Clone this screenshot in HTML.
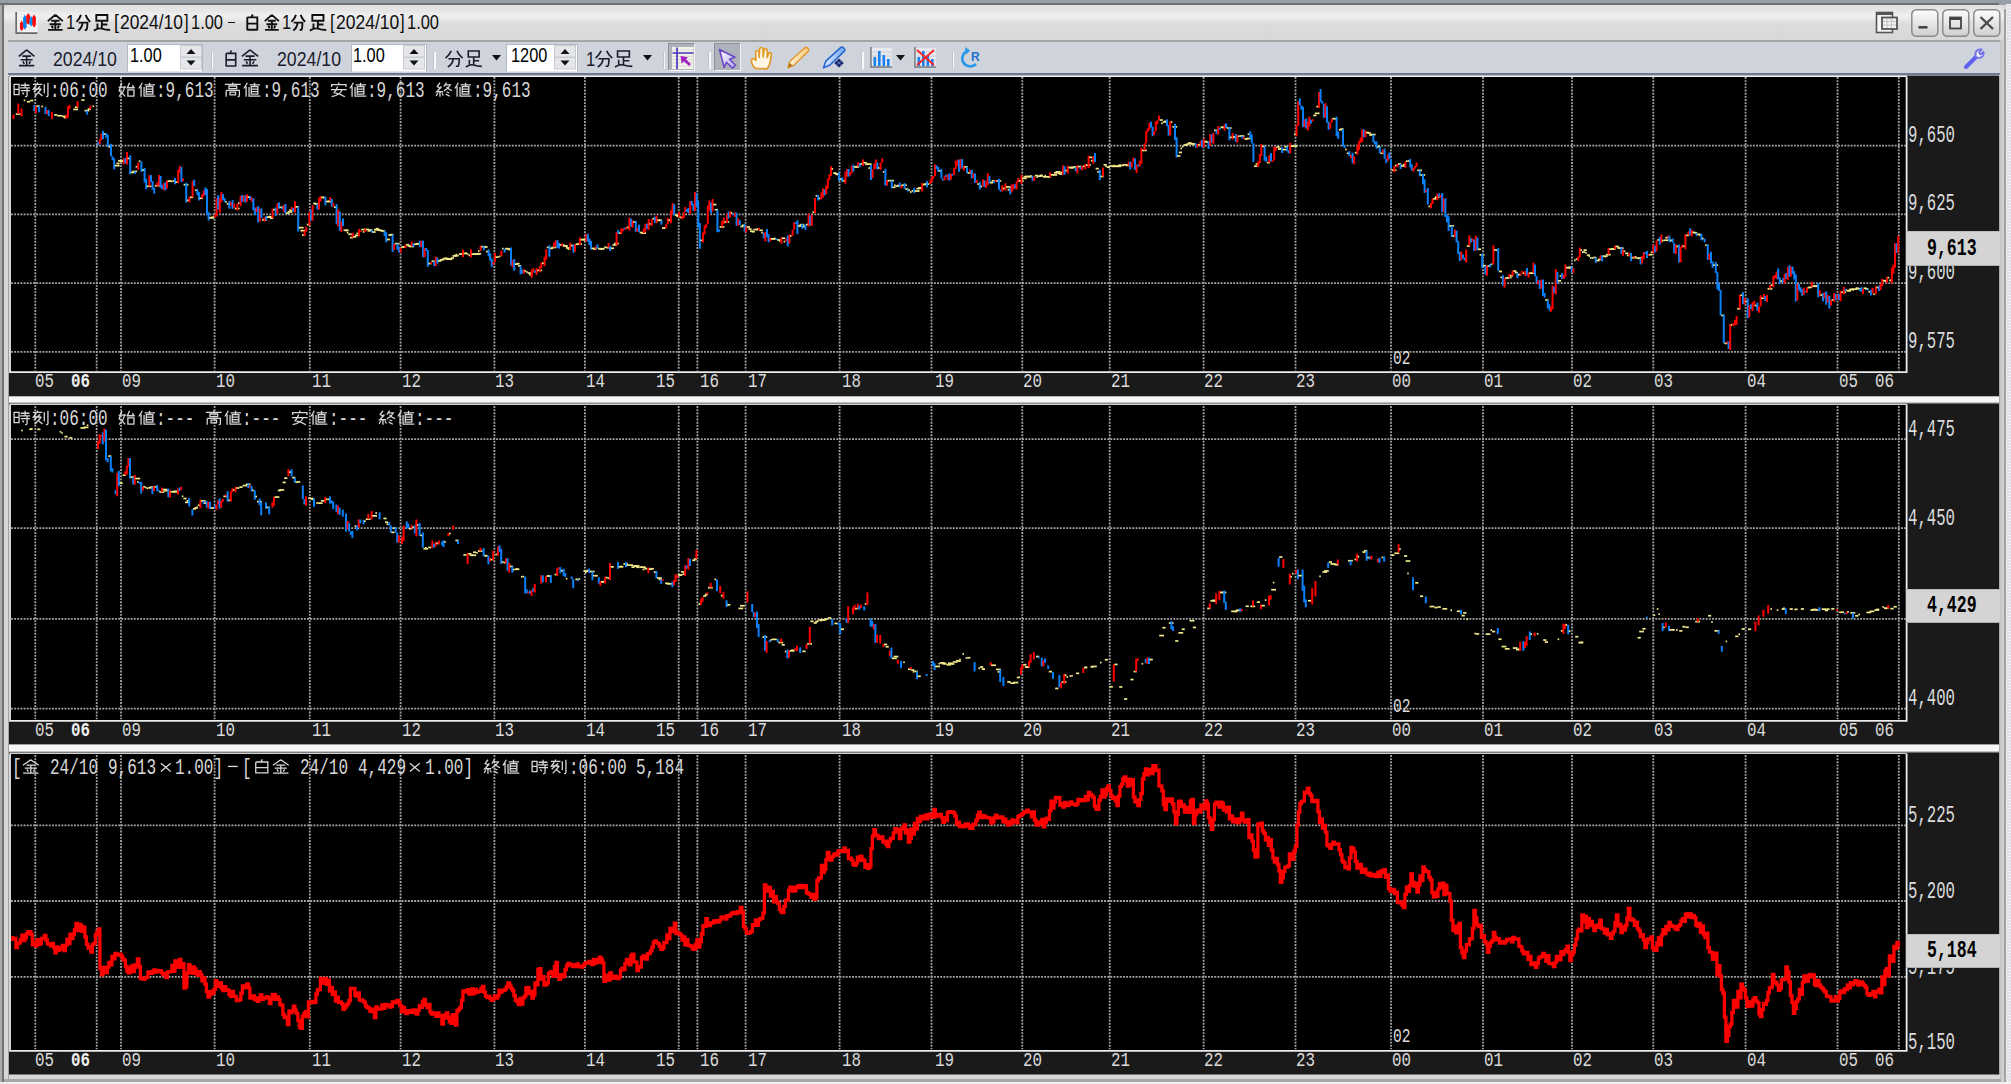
<!DOCTYPE html><html><head><meta charset="utf-8"><style>
*{margin:0;padding:0;box-sizing:border-box}
html,body{width:2011px;height:1084px;overflow:hidden;background:#d8d8d8;font-family:"Liberation Sans",sans-serif}
.a{position:absolute}
.mt{position:absolute;white-space:nowrap;font-family:"Liberation Mono",monospace;transform-origin:0 0}
.mt i{display:inline-block;font-style:normal;text-align:center;overflow:visible}
.tx{position:absolute;white-space:nowrap;transform-origin:0 0}
.tb{position:absolute;white-space:nowrap;font-family:"Liberation Sans",sans-serif;color:#000;transform-origin:0 0}
svg{position:absolute;left:0;top:0}
</style></head><body>
<div class="a" style="left:0;top:0;width:2011px;height:2.5px;background:#9a9ea8"></div>
<div class="a" style="left:0;top:2.5px;width:1999px;height:2.5px;background:#6e6e6e"></div>
<div class="a" style="left:1999px;top:2.5px;width:12px;height:2px;background:#9a9ea8"></div>
<div class="a" style="left:3.5px;top:5px;width:2000px;height:35px;border-radius:6px 6px 0 0;background:linear-gradient(#e0e0e0 0px,#e6e6e6 6px,#efefef 10px,#ececec 13px,#dcdcdc 19px,#d8d8d8 35px)"></div>
<div class="a" style="left:0;top:5px;width:1.5px;height:1079px;background:#ababab"></div>
<div class="a" style="left:1.5px;top:5px;width:2px;height:1079px;background:#727272"></div>
<div class="a" style="left:3.5px;top:40px;width:4px;height:1044px;background:#d6d6d6"></div>
<div class="a" style="left:7.5px;top:40px;width:1.5px;height:1044px;background:#a2a2a2"></div>
<div class="a" style="left:1999px;top:40px;width:1px;height:1044px;background:#aaaaaa"></div>
<div class="a" style="left:2000px;top:40px;width:4px;height:1044px;background:linear-gradient(90deg,#c2c2c2,#d4d4d4)"></div>
<div class="a" style="left:2004px;top:9px;width:2px;height:1075px;background:#a0a0a0"></div>
<div class="a" style="left:2006px;top:4px;width:5px;height:1080px;background-color:#dcdde4;background-image:repeating-linear-gradient(#ececf2 0 1.5px,transparent 1.5px 3px),repeating-linear-gradient(90deg,#ececf2 0 1.5px,transparent 1.5px 3px)"></div>
<div class="a" style="left:9px;top:1074.5px;width:1991px;height:4.5px;background:#d8d8d8"></div>
<div class="a" style="left:3.5px;top:1079px;width:1997px;height:2.5px;background:#a8a8a8"></div>
<div class="a" style="left:0;top:1081.5px;width:2011px;height:2.5px;background:#f0f0f0"></div>
<svg class="a" style="left:0;top:0" width="45" height="40" viewBox="0 0 45 40">
<rect x="16.5" y="12.5" width="21" height="20" fill="#f6f6f6"/>
<path d="M17.5 14.2 H37 M17.5 17.4 H37 M17.5 20.6 H37 M17.5 23.8 H37 M17.5 27 H37 M17.5 30.2 H37" stroke="#e0e0e0" stroke-width="0.8"/>
<path d="M16.2 12 V33.2 H37.5" fill="none" stroke="#6a6a6a" stroke-width="1.7"/>
<path d="M21.6 20.8 L23.4 23.5 V28.8 L21.6 31 L19.9 28.8 V23.5 Z" fill="#ff0a0a"/>
<path d="M24.8 14.8 L26.6 18 V27 L24.8 29.8 L23.1 27 V18 Z" fill="#0a80f0"/>
<path d="M28.2 13 L30.2 16 V22.5 L28.2 24.8 L26.3 22.5 V16 Z" fill="#ff0a0a"/>
<path d="M31.2 16 L33 19 V24 L31.2 26.5 L29.4 24 V19 Z" fill="#0a90f8"/>
<path d="M34.1 14.5 L35.9 17.5 V25 L34.1 27.5 L32.3 25 V17.5 Z" fill="#ff0a0a"/>
</svg>
<svg class="a" style="left:46.80px;top:13.60px;overflow:visible" width="16.70" height="16.80" viewBox="0 0 16 16" preserveAspectRatio="none"><path d="M8 0.8 L0.8 6.8 M8 0.8 L15.2 6.8 M4 6.5 H12 M2.5 9.8 H13.5 M8 6.5 V15 M4.5 11.2 L5.8 13.6 M11.5 11.2 L10.2 13.6 M1 15.1 H15" fill="none" stroke="#101010" stroke-width="1.90" vector-effect="non-scaling-stroke" stroke-linecap="butt" stroke-linejoin="miter"/></svg>
<svg class="a" style="left:75.50px;top:13.60px;overflow:visible" width="14.60" height="16.80" viewBox="0 0 16 16" preserveAspectRatio="none"><path d="M5.5 0.8 Q4 4.5 0.5 7.5 M10.5 0.8 Q12 4.5 15.5 7.5 M3 8.2 H12.5 Q12.5 14 11.5 15 L9.5 15.2 M7.2 8.2 Q6.8 13 2.5 15.8" fill="none" stroke="#101010" stroke-width="1.90" vector-effect="non-scaling-stroke" stroke-linecap="butt" stroke-linejoin="miter"/></svg>
<svg class="a" style="left:93.30px;top:13.60px;overflow:visible" width="17.70" height="16.80" viewBox="0 0 16 16" preserveAspectRatio="none"><path d="M3 1 H13 V6.5 H3 Z M8 6.5 V14.2 M8 10 H13 M4 9 V14 M0.8 15.8 Q5 13 8 14 Q11.5 15.2 15.5 15.2" fill="none" stroke="#101010" stroke-width="1.90" vector-effect="non-scaling-stroke" stroke-linecap="butt" stroke-linejoin="miter"/></svg>
<svg class="a" style="left:244.70px;top:13.60px;overflow:visible" width="14.60" height="16.80" viewBox="0 0 16 16" preserveAspectRatio="none"><path d="M8.5 0.5 L7 3.2 M2.5 3.2 H13.5 V15.5 M2.5 3.2 V15.5 M2.5 9.2 H13.5 M2.5 15 H13.5" fill="none" stroke="#101010" stroke-width="1.90" vector-effect="non-scaling-stroke" stroke-linecap="butt" stroke-linejoin="miter"/></svg>
<svg class="a" style="left:263.50px;top:13.60px;overflow:visible" width="15.70" height="16.80" viewBox="0 0 16 16" preserveAspectRatio="none"><path d="M8 0.8 L0.8 6.8 M8 0.8 L15.2 6.8 M4 6.5 H12 M2.5 9.8 H13.5 M8 6.5 V15 M4.5 11.2 L5.8 13.6 M11.5 11.2 L10.2 13.6 M1 15.1 H15" fill="none" stroke="#101010" stroke-width="1.90" vector-effect="non-scaling-stroke" stroke-linecap="butt" stroke-linejoin="miter"/></svg>
<svg class="a" style="left:291.20px;top:13.60px;overflow:visible" width="14.60" height="16.80" viewBox="0 0 16 16" preserveAspectRatio="none"><path d="M5.5 0.8 Q4 4.5 0.5 7.5 M10.5 0.8 Q12 4.5 15.5 7.5 M3 8.2 H12.5 Q12.5 14 11.5 15 L9.5 15.2 M7.2 8.2 Q6.8 13 2.5 15.8" fill="none" stroke="#101010" stroke-width="1.90" vector-effect="non-scaling-stroke" stroke-linecap="butt" stroke-linejoin="miter"/></svg>
<svg class="a" style="left:308.90px;top:13.60px;overflow:visible" width="17.80" height="16.80" viewBox="0 0 16 16" preserveAspectRatio="none"><path d="M3 1 H13 V6.5 H3 Z M8 6.5 V14.2 M8 10 H13 M4 9 V14 M0.8 15.8 Q5 13 8 14 Q11.5 15.2 15.5 15.2" fill="none" stroke="#101010" stroke-width="1.90" vector-effect="non-scaling-stroke" stroke-linecap="butt" stroke-linejoin="miter"/></svg>
<div class="tx" style="left:66.48px;top:11.88px;font-family:'Liberation Sans';font-size:20.56px;line-height:20.56px;color:#101010;transform:scaleX(0.8000);">1</div>
<div class="tx" style="left:114.00px;top:11.88px;font-family:'Liberation Sans';font-size:20.56px;line-height:20.56px;color:#101010;transform:scaleX(0.8684);">[</div>
<div class="tx" style="left:119.90px;top:11.88px;font-family:'Liberation Sans';font-size:20.56px;line-height:20.56px;color:#101010;transform:scaleX(0.8475);">2024/10</div>
<div class="tx" style="left:184.40px;top:11.88px;font-family:'Liberation Sans';font-size:20.56px;line-height:20.56px;color:#101010;transform:scaleX(0.8163);">]</div>
<div class="tx" style="left:191.35px;top:11.88px;font-family:'Liberation Sans';font-size:20.56px;line-height:20.56px;color:#101010;transform:scaleX(0.8000);">1.00</div>
<div class="tx" style="left:281.68px;top:11.88px;font-family:'Liberation Sans';font-size:20.56px;line-height:20.56px;color:#101010;transform:scaleX(0.8000);">1</div>
<div class="tx" style="left:329.50px;top:11.88px;font-family:'Liberation Sans';font-size:20.56px;line-height:20.56px;color:#101010;transform:scaleX(0.8337);">[</div>
<div class="tx" style="left:335.50px;top:11.88px;font-family:'Liberation Sans';font-size:20.56px;line-height:20.56px;color:#101010;transform:scaleX(0.8515);">2024/10</div>
<div class="tx" style="left:400.00px;top:11.88px;font-family:'Liberation Sans';font-size:20.56px;line-height:20.56px;color:#101010;transform:scaleX(0.8163);">]</div>
<div class="tx" style="left:406.90px;top:11.88px;font-family:'Liberation Sans';font-size:20.56px;line-height:20.56px;color:#101010;transform:scaleX(0.8000);">1.00</div>
<div class="a" style="left:228px;top:21.5px;width:7.3px;height:1.8px;background:#101010"></div>
<svg class="a" style="left:1874px;top:11px" width="26" height="24" viewBox="0 0 26 24">
<rect x="2.5" y="1.5" width="16" height="20" fill="#f6f6f6" stroke="#555" stroke-width="1.6"/>
<rect x="2.5" y="1.5" width="16" height="2.5" fill="#555"/>
<rect x="8" y="6.5" width="15" height="11.5" fill="#f0f0f0" stroke="#555" stroke-width="1.8"/>
<path d="M9 10.5 H22 M9 14 H22 M13 8 V17 M17.5 8 V17" stroke="#bbb" stroke-width="0.8"/></svg>
<svg class="a" style="left:1911.0px;top:9px" width="28" height="28" viewBox="0 0 28 28"><defs><linearGradient id="g1911" x1="0" y1="0" x2="0" y2="1"><stop offset="0" stop-color="#fdfdfd"/><stop offset="1" stop-color="#cfcfcf"/></linearGradient></defs><rect x="0.8" y="0.8" width="26" height="26.5" rx="4.5" fill="url(#g1911)" stroke="#8a8a8a" stroke-width="1.5"/><rect x="7.5" y="17" width="9" height="2.6" fill="#444"/></svg>
<svg class="a" style="left:1942.2px;top:9px" width="28" height="28" viewBox="0 0 28 28"><defs><linearGradient id="g1942" x1="0" y1="0" x2="0" y2="1"><stop offset="0" stop-color="#fdfdfd"/><stop offset="1" stop-color="#cfcfcf"/></linearGradient></defs><rect x="0.8" y="0.8" width="26" height="26.5" rx="4.5" fill="url(#g1942)" stroke="#8a8a8a" stroke-width="1.5"/><rect x="8" y="8.5" width="11" height="11" fill="none" stroke="#444" stroke-width="1.8"/><rect x="8" y="8" width="11" height="3" fill="#444"/></svg>
<svg class="a" style="left:1973.4px;top:9px" width="28" height="28" viewBox="0 0 28 28"><defs><linearGradient id="g1973" x1="0" y1="0" x2="0" y2="1"><stop offset="0" stop-color="#fdfdfd"/><stop offset="1" stop-color="#cfcfcf"/></linearGradient></defs><rect x="0.8" y="0.8" width="26" height="26.5" rx="4.5" fill="url(#g1973)" stroke="#8a8a8a" stroke-width="1.5"/><path d="M7.5 8 L20 20 M20 8 L7.5 20" stroke="#4a4a4a" stroke-width="2.4"/></svg>
<div class="a" style="left:8px;top:39.5px;width:1992px;height:2px;background:#a4a4a4"></div>
<div class="a" style="left:8px;top:41.5px;width:1992px;height:31px;background:#cfd3dc"></div>
<div class="a" style="left:8px;top:72.5px;width:1992px;height:2px;background:#6c7c92"></div>
<div class="a" style="left:8px;top:74.5px;width:1992px;height:1.5px;background:#f4f4f4"></div>
<svg class="a" style="left:18.00px;top:49.20px;overflow:visible" width="17.30" height="17.60" viewBox="0 0 16 16" preserveAspectRatio="none"><path d="M8 0.8 L0.8 6.8 M8 0.8 L15.2 6.8 M4 6.5 H12 M2.5 9.8 H13.5 M8 6.5 V15 M4.5 11.2 L5.8 13.6 M11.5 11.2 L10.2 13.6 M1 15.1 H15" fill="none" stroke="#1c1c2c" stroke-width="1.60" vector-effect="non-scaling-stroke" stroke-linecap="butt" stroke-linejoin="miter"/></svg>
<svg class="a" style="left:223.60px;top:49.70px;overflow:visible" width="13.90" height="17.10" viewBox="0 0 16 16" preserveAspectRatio="none"><path d="M8.5 0.5 L7 3.2 M2.5 3.2 H13.5 V15.5 M2.5 3.2 V15.5 M2.5 9.2 H13.5 M2.5 15 H13.5" fill="none" stroke="#1c1c2c" stroke-width="1.60" vector-effect="non-scaling-stroke" stroke-linecap="butt" stroke-linejoin="miter"/></svg>
<svg class="a" style="left:241.00px;top:49.20px;overflow:visible" width="18.10" height="17.60" viewBox="0 0 16 16" preserveAspectRatio="none"><path d="M8 0.8 L0.8 6.8 M8 0.8 L15.2 6.8 M4 6.5 H12 M2.5 9.8 H13.5 M8 6.5 V15 M4.5 11.2 L5.8 13.6 M11.5 11.2 L10.2 13.6 M1 15.1 H15" fill="none" stroke="#1c1c2c" stroke-width="1.60" vector-effect="non-scaling-stroke" stroke-linecap="butt" stroke-linejoin="miter"/></svg>
<svg class="a" style="left:445.40px;top:49.70px;overflow:visible" width="18.20" height="17.20" viewBox="0 0 16 16" preserveAspectRatio="none"><path d="M5.5 0.8 Q4 4.5 0.5 7.5 M10.5 0.8 Q12 4.5 15.5 7.5 M3 8.2 H12.5 Q12.5 14 11.5 15 L9.5 15.2 M7.2 8.2 Q6.8 13 2.5 15.8" fill="none" stroke="#1c1c2c" stroke-width="1.60" vector-effect="non-scaling-stroke" stroke-linecap="butt" stroke-linejoin="miter"/></svg>
<svg class="a" style="left:464.60px;top:49.70px;overflow:visible" width="17.40" height="17.20" viewBox="0 0 16 16" preserveAspectRatio="none"><path d="M3 1 H13 V6.5 H3 Z M8 6.5 V14.2 M8 10 H13 M4 9 V14 M0.8 15.8 Q5 13 8 14 Q11.5 15.2 15.5 15.2" fill="none" stroke="#1c1c2c" stroke-width="1.60" vector-effect="non-scaling-stroke" stroke-linecap="butt" stroke-linejoin="miter"/></svg>
<svg class="a" style="left:594.70px;top:49.70px;overflow:visible" width="17.80" height="17.20" viewBox="0 0 16 16" preserveAspectRatio="none"><path d="M5.5 0.8 Q4 4.5 0.5 7.5 M10.5 0.8 Q12 4.5 15.5 7.5 M3 8.2 H12.5 Q12.5 14 11.5 15 L9.5 15.2 M7.2 8.2 Q6.8 13 2.5 15.8" fill="none" stroke="#1c1c2c" stroke-width="1.60" vector-effect="non-scaling-stroke" stroke-linecap="butt" stroke-linejoin="miter"/></svg>
<svg class="a" style="left:614.10px;top:49.70px;overflow:visible" width="18.90" height="17.20" viewBox="0 0 16 16" preserveAspectRatio="none"><path d="M3 1 H13 V6.5 H3 Z M8 6.5 V14.2 M8 10 H13 M4 9 V14 M0.8 15.8 Q5 13 8 14 Q11.5 15.2 15.5 15.2" fill="none" stroke="#1c1c2c" stroke-width="1.60" vector-effect="non-scaling-stroke" stroke-linecap="butt" stroke-linejoin="miter"/></svg>
<div class="tx" style="left:53.30px;top:48.66px;font-family:'Liberation Sans';font-size:20.70px;line-height:20.70px;color:#1c1c2c;transform:scaleX(0.8551);">2024/10</div>
<div class="tx" style="left:276.90px;top:48.74px;font-family:'Liberation Sans';font-size:20.85px;line-height:20.85px;color:#1c1c2c;transform:scaleX(0.8493);">2024/10</div>
<div class="tx" style="left:585.77px;top:48.74px;font-family:'Liberation Sans';font-size:20.85px;line-height:20.85px;color:#1c1c2c;transform:scaleX(0.8000);">1</div>
<div class="a" style="left:127.2px;top:43.5px;width:76.3px;height:28px;background:#fff;border:1px solid #b4b8c0;border-bottom-color:#e8e8e8"></div><div class="tx" style="left:129.76px;top:44.60px;font-family:'Liberation Sans';font-size:20.42px;line-height:20.42px;color:#000;transform:scaleX(0.8000);">1.00</div><svg class="a" style="left:179.5px;top:45px" width="22" height="25" viewBox="0 0 22 25"><rect x="0.5" y="0.5" width="21" height="11.5" fill="#e4e6ea" stroke="#c8ccd2"/><rect x="0.5" y="12.5" width="21" height="11.5" fill="#e4e6ea" stroke="#c8ccd2"/><path d="M6.5 9 L11 4 L15.5 9 Z" fill="#111"/><path d="M6.5 15.5 L11 20.5 L15.5 15.5 Z" fill="#111"/></svg>
<div class="a" style="left:350.5px;top:43.5px;width:76.3px;height:28px;background:#fff;border:1px solid #b4b8c0;border-bottom-color:#e8e8e8"></div><div class="tx" style="left:353.06px;top:44.60px;font-family:'Liberation Sans';font-size:20.42px;line-height:20.42px;color:#000;transform:scaleX(0.8000);">1.00</div><svg class="a" style="left:402.8px;top:45px" width="22" height="25" viewBox="0 0 22 25"><rect x="0.5" y="0.5" width="21" height="11.5" fill="#e4e6ea" stroke="#c8ccd2"/><rect x="0.5" y="12.5" width="21" height="11.5" fill="#e4e6ea" stroke="#c8ccd2"/><path d="M6.5 9 L11 4 L15.5 9 Z" fill="#111"/><path d="M6.5 15.5 L11 20.5 L15.5 15.5 Z" fill="#111"/></svg>
<div class="a" style="left:506.4px;top:43.5px;width:71.4px;height:28px;background:#fff;border:1px solid #b4b8c0;border-bottom-color:#e8e8e8"></div><div class="tx" style="left:510.77px;top:44.60px;font-family:'Liberation Sans';font-size:20.42px;line-height:20.42px;color:#000;transform:scaleX(0.8000);">1200</div><svg class="a" style="left:553.8px;top:45px" width="22" height="25" viewBox="0 0 22 25"><rect x="0.5" y="0.5" width="21" height="11.5" fill="#e4e6ea" stroke="#c8ccd2"/><rect x="0.5" y="12.5" width="21" height="11.5" fill="#e4e6ea" stroke="#c8ccd2"/><path d="M6.5 9 L11 4 L15.5 9 Z" fill="#111"/><path d="M6.5 15.5 L11 20.5 L15.5 15.5 Z" fill="#111"/></svg>
<svg class="a" style="left:491.6px;top:55px" width="10" height="6"><path d="M0 0 H9 L4.5 5.5 Z" fill="#111"/></svg>
<svg class="a" style="left:642.6px;top:55px" width="10" height="6"><path d="M0 0 H9 L4.5 5.5 Z" fill="#111"/></svg>
<svg class="a" style="left:896.3px;top:55px" width="10" height="6"><path d="M0 0 H9 L4.5 5.5 Z" fill="#111"/></svg>
<div class="a" style="left:211.7px;top:51.5px;width:1.5px;height:17px;background:#f8f8fa;box-shadow:-1px 0 0 #c0c4cc"></div>
<div class="a" style="left:434.2px;top:51.5px;width:1.5px;height:17px;background:#f8f8fa;box-shadow:-1px 0 0 #c0c4cc"></div>
<div class="a" style="left:663.9px;top:51.5px;width:1.5px;height:17px;background:#f8f8fa;box-shadow:-1px 0 0 #c0c4cc"></div>
<div class="a" style="left:709.2px;top:51.5px;width:1.5px;height:17px;background:#f8f8fa;box-shadow:-1px 0 0 #c0c4cc"></div>
<div class="a" style="left:862.3px;top:51.5px;width:1.5px;height:17px;background:#f8f8fa;box-shadow:-1px 0 0 #c0c4cc"></div>
<div class="a" style="left:952.8px;top:51.5px;width:1.5px;height:17px;background:#f8f8fa;box-shadow:-1px 0 0 #c0c4cc"></div>
<div class="a" style="left:668.3px;top:43.3px;width:27px;height:27.5px;background:#aeb2ba;border:1.5px solid #8c9098;border-right-color:#f4f4f6;border-bottom-color:#f4f4f6"></div>
<div class="a" style="left:713.5px;top:43.3px;width:27px;height:27.5px;background:#aeb2ba;border:1.5px solid #8c9098;border-right-color:#f4f4f6;border-bottom-color:#f4f4f6"></div>
<svg class="a" style="left:0;top:0" width="1000" height="80" viewBox="0 0 1000 80">
<defs>
<linearGradient id="ptrg" x1="0" y1="0" x2="1" y2="1"><stop offset="0" stop-color="#ffffff"/><stop offset="1" stop-color="#b8a8f0"/></linearGradient>
<linearGradient id="pcg" x1="0" y1="0" x2="1" y2="0"><stop offset="0" stop-color="#fff8e8"/><stop offset="1" stop-color="#f4c878"/></linearGradient>
<linearGradient id="peng" x1="0" y1="0" x2="1" y2="0"><stop offset="0" stop-color="#e0ecff"/><stop offset="1" stop-color="#78a8f0"/></linearGradient>
</defs>
<rect x="672" y="47" width="21.5" height="22" fill="#f2f2ea"/>
<path d="M672 50 H693.5 M672 53.2 H693.5 M672 56.4 H693.5 M672 59.6 H693.5 M672 62.8 H693.5 M672 66 H693.5" stroke="#d4d4cc" stroke-width="0.9"/>
<path d="M677 47.5 V69 M672.5 53 H693.5" stroke="#4a38c0" stroke-width="1.7"/>
<path d="M690 65 L682.5 58" stroke="#a020c0" stroke-width="2.8"/>
<path d="M680.5 56 L688 57.2 L681.7 63.5 Z" fill="#a020c0"/>
<path d="M719.5 49.5 L735 57.2 L729.5 59.2 L735.5 65.2 L732.5 68.2 L726.5 62.2 L724.2 67.5 Z" fill="url(#ptrg)" stroke="#6a48c8" stroke-width="1.6" stroke-linejoin="round"/>
<path d="M755.5 68.5 C752.5 66 750.8 62 751.8 59.5 C752.8 57.8 754.8 58.8 755.8 60.5 L755.8 52 C755.8 50 758.6 50 758.9 52 L759.2 57.5 L759.6 49 C759.9 47 762.8 47 763 49 L763.2 57 L764 50 C764.3 48 767.2 48.3 767.2 50.4 L767.2 57.5 L768.6 53.6 C769.3 52 771.8 52.6 771.4 54.4 L770.2 62 C769.8 65 768.5 67.2 767 68.8 Z" fill="#fff6e4" stroke="#e29a28" stroke-width="1.7" stroke-linejoin="round"/>
<path d="M788 67.8 L789.8 61.5 L804.8 47.8 C806.6 46.4 809.8 49.2 808.6 51 L793.8 65.2 Z" fill="url(#pcg)" stroke="#e09a30" stroke-width="1.5" stroke-linejoin="round"/>
<path d="M788 67.8 L789.6 62.8 L792.6 65.6 Z" fill="#b07020"/>
<path d="M823.5 67.8 L825.8 61.2 L840.6 47.6 C842.6 46.2 845.8 49 844.6 50.9 L830 65 Z" fill="url(#peng)" stroke="#2868d0" stroke-width="1.6" stroke-linejoin="round"/>
<path d="M839 58.5 L843.8 63 L839 67.5 L834.2 63 Z" fill="#1a2a70"/>
<path d="M836.6 60.8 L841.4 65.2 M841.4 60.8 L836.6 65.2" stroke="#8090d0" stroke-width="0.7"/>
</svg>
<svg class="a" style="left:870.1px;top:47px" width="23" height="21" viewBox="0 0 23 21"><rect x="1" y="1" width="21" height="19" fill="#e6e8ee"/><path d="M1 0 V20 H22" fill="none" stroke="#777" stroke-width="1.5"/><path d="M1 5 H22 M1 9 H22 M1 13 H22" stroke="#c8c8d0" stroke-width="0.8"/><rect x="3.5" y="10" width="2.6" height="9" fill="#1880f0"/><rect x="8" y="4" width="2.6" height="15" fill="#1880f0"/><rect x="12.5" y="8" width="2.6" height="11" fill="#1880f0"/><rect x="17" y="12" width="2.6" height="7" fill="#1880f0"/></svg>
<svg class="a" style="left:913.7px;top:47px" width="23" height="21" viewBox="0 0 23 21"><rect x="1" y="1" width="21" height="19" fill="#e6e8ee"/><path d="M1 0 V20 H22" fill="none" stroke="#777" stroke-width="1.5"/><path d="M1 5 H22 M1 9 H22 M1 13 H22" stroke="#c8c8d0" stroke-width="0.8"/><rect x="3.5" y="10" width="2.6" height="9" fill="#1880f0"/><rect x="8" y="4" width="2.6" height="15" fill="#1880f0"/><rect x="12.5" y="8" width="2.6" height="11" fill="#1880f0"/><rect x="17" y="12" width="2.6" height="7" fill="#1880f0"/><path d="M3 3 L20 18 M20 3 L3 18" stroke="#ff2020" stroke-width="1.8"/></svg>
<svg class="a" style="left:959px;top:46px" width="22" height="23" viewBox="0 0 22 23">
<path d="M10 4.5 A8 8 0 1 0 17 18" fill="none" stroke="#2898e8" stroke-width="2.6"/>
<path d="M6 1 L11 4.5 L7 8.5 Z" fill="#2898e8"/>
<text x="12" y="15" font-family="Liberation Sans" font-weight="bold" font-size="12" fill="#2070d0">R</text></svg>
<svg class="a" style="left:1963px;top:46px" width="24" height="24" viewBox="0 0 24 24">
<path d="M3 21 L13 11" stroke="#6060f0" stroke-width="4" stroke-linecap="round"/>
<path d="M13 11 C11 7 14 2.5 18.5 3.5 L16 6.5 L17.5 8.5 L20.5 6 C21.5 10 17.5 13.5 13 11 Z" fill="#f8f8ff" stroke="#7070e8" stroke-width="1.8" stroke-linejoin="round"/></svg>
<svg width="2011" height="1084" viewBox="0 0 2011 1084" style="position:absolute;left:0;top:0">
<rect x="9" y="75.5" width="1990" height="321.0" fill="#1a1a1a"/>
<rect x="10" y="76.2" width="1897" height="296.6" fill="#000"/>
<path d="M10 76.2 V372.1 H1906.6 V76.2" fill="none" stroke="#ececec" stroke-width="1.8"/>
<line x1="10" y1="76.2" x2="1906.6" y2="76.2" stroke="#f4f4f4" stroke-width="1.4"/>
<g stroke="#a4a4a4" stroke-width="1.8" stroke-dasharray="1.9 1.25">
<line x1="35.3" y1="77.0" x2="35.3" y2="370.5"/>
<line x1="96.7" y1="77.0" x2="96.7" y2="370.5"/>
<line x1="121.0" y1="77.0" x2="121.0" y2="370.5"/>
<line x1="214.6" y1="77.0" x2="214.6" y2="370.5"/>
<line x1="309.8" y1="77.0" x2="309.8" y2="370.5"/>
<line x1="400.6" y1="77.0" x2="400.6" y2="370.5"/>
<line x1="494.4" y1="77.0" x2="494.4" y2="370.5"/>
<line x1="584.9" y1="77.0" x2="584.9" y2="370.5"/>
<line x1="678.7" y1="77.0" x2="678.7" y2="370.5"/>
<line x1="697.4" y1="77.0" x2="697.4" y2="370.5"/>
<line x1="745.6" y1="77.0" x2="745.6" y2="370.5"/>
<line x1="839.6" y1="77.0" x2="839.6" y2="370.5"/>
<line x1="931.5" y1="77.0" x2="931.5" y2="370.5"/>
<line x1="1022.3" y1="77.0" x2="1022.3" y2="370.5"/>
<line x1="1109.7" y1="77.0" x2="1109.7" y2="370.5"/>
<line x1="1203.6" y1="77.0" x2="1203.6" y2="370.5"/>
<line x1="1295.5" y1="77.0" x2="1295.5" y2="370.5"/>
<line x1="1391.0" y1="77.0" x2="1391.0" y2="370.5"/>
<line x1="1483.0" y1="77.0" x2="1483.0" y2="370.5"/>
<line x1="1572.0" y1="77.0" x2="1572.0" y2="370.5"/>
<line x1="1653.3" y1="77.0" x2="1653.3" y2="370.5"/>
<line x1="1745.6" y1="77.0" x2="1745.6" y2="370.5"/>
<line x1="1837.5" y1="77.0" x2="1837.5" y2="370.5"/>
<line x1="1898.8" y1="77.0" x2="1898.8" y2="370.5"/>
<line x1="11" y1="145.7" x2="1906" y2="145.7"/>
<line x1="11" y1="214.4" x2="1906" y2="214.4"/>
<line x1="11" y1="283.1" x2="1906" y2="283.1"/>
<line x1="11" y1="351.8" x2="1906" y2="351.8"/>
</g>
<rect x="9" y="402.8" width="1990" height="341.8" fill="#1a1a1a"/>
<rect x="10" y="404.3" width="1897" height="317.3" fill="#000"/>
<path d="M10 404.3 V720.9 H1906.6 V404.3" fill="none" stroke="#ececec" stroke-width="1.8"/>
<line x1="10" y1="404.3" x2="1906.6" y2="404.3" stroke="#d0d0d0" stroke-width="1.4"/>
<g stroke="#a4a4a4" stroke-width="1.8" stroke-dasharray="1.9 1.25">
<line x1="35.3" y1="406.0" x2="35.3" y2="719.3"/>
<line x1="96.7" y1="406.0" x2="96.7" y2="719.3"/>
<line x1="121.0" y1="406.0" x2="121.0" y2="719.3"/>
<line x1="214.6" y1="406.0" x2="214.6" y2="719.3"/>
<line x1="309.8" y1="406.0" x2="309.8" y2="719.3"/>
<line x1="400.6" y1="406.0" x2="400.6" y2="719.3"/>
<line x1="494.4" y1="406.0" x2="494.4" y2="719.3"/>
<line x1="584.9" y1="406.0" x2="584.9" y2="719.3"/>
<line x1="678.7" y1="406.0" x2="678.7" y2="719.3"/>
<line x1="697.4" y1="406.0" x2="697.4" y2="719.3"/>
<line x1="745.6" y1="406.0" x2="745.6" y2="719.3"/>
<line x1="839.6" y1="406.0" x2="839.6" y2="719.3"/>
<line x1="931.5" y1="406.0" x2="931.5" y2="719.3"/>
<line x1="1022.3" y1="406.0" x2="1022.3" y2="719.3"/>
<line x1="1109.7" y1="406.0" x2="1109.7" y2="719.3"/>
<line x1="1203.6" y1="406.0" x2="1203.6" y2="719.3"/>
<line x1="1295.5" y1="406.0" x2="1295.5" y2="719.3"/>
<line x1="1391.0" y1="406.0" x2="1391.0" y2="719.3"/>
<line x1="1483.0" y1="406.0" x2="1483.0" y2="719.3"/>
<line x1="1572.0" y1="406.0" x2="1572.0" y2="719.3"/>
<line x1="1653.3" y1="406.0" x2="1653.3" y2="719.3"/>
<line x1="1745.6" y1="406.0" x2="1745.6" y2="719.3"/>
<line x1="1837.5" y1="406.0" x2="1837.5" y2="719.3"/>
<line x1="1898.8" y1="406.0" x2="1898.8" y2="719.3"/>
<line x1="11" y1="439.2" x2="1906" y2="439.2"/>
<line x1="11" y1="528.1" x2="1906" y2="528.1"/>
<line x1="11" y1="618.8" x2="1906" y2="618.8"/>
<line x1="11" y1="708.6" x2="1906" y2="708.6"/>
</g>
<rect x="9" y="751.9" width="1990" height="322.6" fill="#1a1a1a"/>
<rect x="10" y="753.4" width="1897" height="298.1" fill="#000"/>
<path d="M10 753.4 V1050.8 H1906.6 V753.4" fill="none" stroke="#ececec" stroke-width="1.8"/>
<line x1="10" y1="753.4" x2="1906.6" y2="753.4" stroke="#d0d0d0" stroke-width="1.4"/>
<g stroke="#a4a4a4" stroke-width="1.8" stroke-dasharray="1.9 1.25">
<line x1="35.3" y1="755.0" x2="35.3" y2="1049.2"/>
<line x1="96.7" y1="755.0" x2="96.7" y2="1049.2"/>
<line x1="121.0" y1="755.0" x2="121.0" y2="1049.2"/>
<line x1="214.6" y1="755.0" x2="214.6" y2="1049.2"/>
<line x1="309.8" y1="755.0" x2="309.8" y2="1049.2"/>
<line x1="400.6" y1="755.0" x2="400.6" y2="1049.2"/>
<line x1="494.4" y1="755.0" x2="494.4" y2="1049.2"/>
<line x1="584.9" y1="755.0" x2="584.9" y2="1049.2"/>
<line x1="678.7" y1="755.0" x2="678.7" y2="1049.2"/>
<line x1="697.4" y1="755.0" x2="697.4" y2="1049.2"/>
<line x1="745.6" y1="755.0" x2="745.6" y2="1049.2"/>
<line x1="839.6" y1="755.0" x2="839.6" y2="1049.2"/>
<line x1="931.5" y1="755.0" x2="931.5" y2="1049.2"/>
<line x1="1022.3" y1="755.0" x2="1022.3" y2="1049.2"/>
<line x1="1109.7" y1="755.0" x2="1109.7" y2="1049.2"/>
<line x1="1203.6" y1="755.0" x2="1203.6" y2="1049.2"/>
<line x1="1295.5" y1="755.0" x2="1295.5" y2="1049.2"/>
<line x1="1391.0" y1="755.0" x2="1391.0" y2="1049.2"/>
<line x1="1483.0" y1="755.0" x2="1483.0" y2="1049.2"/>
<line x1="1572.0" y1="755.0" x2="1572.0" y2="1049.2"/>
<line x1="1653.3" y1="755.0" x2="1653.3" y2="1049.2"/>
<line x1="1745.6" y1="755.0" x2="1745.6" y2="1049.2"/>
<line x1="1837.5" y1="755.0" x2="1837.5" y2="1049.2"/>
<line x1="1898.8" y1="755.0" x2="1898.8" y2="1049.2"/>
<line x1="11" y1="825.3" x2="1906" y2="825.3"/>
<line x1="11" y1="901.0" x2="1906" y2="901.0"/>
<line x1="11" y1="976.9" x2="1906" y2="976.9"/>
</g>
<rect x="9" y="396.5" width="1990" height="6.5" fill="#f6f6f6"/>
<rect x="9" y="402.4" width="1990" height="1.2" fill="#a0a0a0"/>
<rect x="9" y="744.6" width="1990" height="7.4" fill="#f6f6f6"/>
<rect x="9" y="751.4" width="1990" height="1.2" fill="#a0a0a0"/>
<clipPath id="c1"><rect x="11" y="77" width="1895" height="294"/></clipPath>
<clipPath id="c2"><rect x="11" y="406" width="1895" height="314"/></clipPath>
<clipPath id="c3"><rect x="11" y="755" width="1895" height="295"/></clipPath>
<g clip-path="url(#c1)"><rect x="12.5" y="114.6" width="2.0" height="4.5" fill="#ff0000"/>
<rect x="15.7" y="113.1" width="4.8" height="1.7" fill="#f2e88a"/>
<rect x="17.3" y="103.6" width="2.0" height="10.4" fill="#ff0000"/>
<rect x="20.5" y="108.5" width="2.0" height="7.8" fill="#ff0000"/>
<rect x="23.7" y="99.5" width="1.6" height="1.7" fill="#f2e88a"/>
<rect x="26.9" y="100.9" width="3.2" height="1.7" fill="#f2e88a"/>
<rect x="30.1" y="99.7" width="3.2" height="1.7" fill="#f2e88a"/>
<rect x="33.3" y="105.0" width="2.0" height="6.3" fill="#0a80f8"/>
<rect x="34.9" y="105.8" width="2.0" height="7.5" fill="#ff0000"/>
<rect x="36.5" y="105.3" width="3.2" height="1.7" fill="#f2e88a"/>
<rect x="38.1" y="106.1" width="2.0" height="6.2" fill="#0a80f8"/>
<rect x="41.3" y="105.6" width="1.6" height="1.7" fill="#f2e88a"/>
<rect x="44.5" y="106.7" width="2.0" height="7.3" fill="#0a80f8"/>
<rect x="46.1" y="109.9" width="2.0" height="4.1" fill="#ff0000"/>
<rect x="47.7" y="109.9" width="2.0" height="6.3" fill="#0a80f8"/>
<rect x="50.9" y="111.9" width="2.0" height="7.1" fill="#ff0000"/>
<rect x="54.1" y="114.1" width="3.2" height="1.7" fill="#f2e88a"/>
<rect x="57.3" y="114.9" width="4.8" height="1.7" fill="#f2e88a"/>
<rect x="62.1" y="115.5" width="4.8" height="1.7" fill="#f2e88a"/>
<rect x="63.7" y="116.7" width="3.2" height="1.7" fill="#f2e88a"/>
<rect x="65.3" y="114.7" width="2.0" height="3.9" fill="#ff0000"/>
<rect x="66.9" y="106.1" width="2.0" height="11.6" fill="#ff0000"/>
<rect x="68.5" y="104.9" width="2.0" height="4.2" fill="#ff0000"/>
<rect x="73.3" y="108.6" width="4.8" height="1.7" fill="#f2e88a"/>
<rect x="74.9" y="106.3" width="3.2" height="1.7" fill="#f2e88a"/>
<rect x="76.5" y="101.2" width="2.0" height="6.0" fill="#ff0000"/>
<rect x="81.3" y="99.2" width="3.2" height="1.7" fill="#f2e88a"/>
<rect x="84.5" y="109.8" width="4.8" height="1.7" fill="#f2e88a"/>
<rect x="86.1" y="110.7" width="2.0" height="3.9" fill="#0a80f8"/>
<rect x="87.7" y="108.3" width="3.2" height="1.7" fill="#f2e88a"/>
<rect x="89.3" y="105.7" width="2.0" height="3.5" fill="#ff0000"/>
<rect x="92.5" y="105.4" width="1.6" height="1.7" fill="#f2e88a"/><rect x="97.2" y="142.1" width="2.0" height="3.2" fill="#0a80f8"/>
<rect x="98.8" y="139.1" width="2.0" height="5.2" fill="#ff0000"/>
<rect x="100.4" y="133.8" width="2.0" height="6.3" fill="#ff0000"/>
<rect x="102.0" y="130.8" width="2.0" height="8.3" fill="#0a80f8"/>
<rect x="103.6" y="133.2" width="3.2" height="1.7" fill="#f2e88a"/>
<rect x="105.2" y="133.1" width="2.0" height="4.7" fill="#0a80f8"/>
<rect x="106.8" y="134.8" width="2.0" height="12.3" fill="#0a80f8"/>
<rect x="108.4" y="145.9" width="3.2" height="1.7" fill="#f2e88a"/>
<rect x="110.0" y="143.8" width="2.0" height="12.5" fill="#0a80f8"/>
<rect x="111.6" y="156.3" width="2.0" height="4.0" fill="#0a80f8"/>
<rect x="113.2" y="158.3" width="2.0" height="11.2" fill="#0a80f8"/>
<rect x="114.8" y="164.8" width="4.8" height="1.7" fill="#f2e88a"/>
<rect x="116.4" y="162.6" width="3.2" height="1.7" fill="#f2e88a"/>
<rect x="118.0" y="159.9" width="4.8" height="1.7" fill="#f2e88a"/>
<rect x="119.6" y="160.0" width="4.8" height="1.7" fill="#f2e88a"/>
<rect x="121.2" y="160.5" width="3.2" height="1.7" fill="#f2e88a"/>
<rect x="122.8" y="158.0" width="2.0" height="6.4" fill="#ff0000"/>
<rect x="124.4" y="158.0" width="2.0" height="5.4" fill="#0a80f8"/>
<rect x="126.0" y="152.1" width="2.0" height="12.3" fill="#ff0000"/>
<rect x="127.6" y="157.6" width="3.2" height="1.7" fill="#f2e88a"/>
<rect x="129.2" y="155.4" width="2.0" height="18.8" fill="#0a80f8"/>
<rect x="130.8" y="171.6" width="3.2" height="1.7" fill="#f2e88a"/>
<rect x="132.4" y="170.6" width="4.8" height="1.7" fill="#f2e88a"/>
<rect x="134.0" y="171.5" width="2.0" height="2.4" fill="#0a80f8"/>
<rect x="135.6" y="165.9" width="1.6" height="1.7" fill="#f2e88a"/>
<rect x="137.2" y="162.5" width="2.0" height="7.2" fill="#ff0000"/>
<rect x="138.8" y="160.4" width="1.6" height="1.7" fill="#f2e88a"/>
<rect x="140.4" y="161.2" width="2.0" height="10.7" fill="#0a80f8"/>
<rect x="142.0" y="169.2" width="3.2" height="1.7" fill="#f2e88a"/>
<rect x="143.6" y="168.0" width="2.0" height="14.6" fill="#0a80f8"/>
<rect x="145.2" y="178.7" width="2.0" height="10.6" fill="#0a80f8"/>
<rect x="146.8" y="185.4" width="4.8" height="1.7" fill="#f2e88a"/>
<rect x="148.4" y="175.1" width="2.0" height="11.2" fill="#ff0000"/>
<rect x="150.0" y="175.1" width="2.0" height="6.9" fill="#0a80f8"/>
<rect x="151.6" y="181.1" width="2.0" height="8.5" fill="#0a80f8"/>
<rect x="153.2" y="187.6" width="2.0" height="6.0" fill="#0a80f8"/>
<rect x="154.8" y="184.9" width="4.8" height="1.7" fill="#f2e88a"/>
<rect x="156.4" y="182.3" width="2.0" height="4.4" fill="#ff0000"/>
<rect x="158.0" y="175.0" width="2.0" height="10.3" fill="#ff0000"/>
<rect x="159.6" y="176.0" width="2.0" height="11.8" fill="#0a80f8"/>
<rect x="161.2" y="184.8" width="2.0" height="4.5" fill="#0a80f8"/>
<rect x="162.8" y="183.2" width="2.0" height="7.0" fill="#ff0000"/>
<rect x="164.4" y="182.2" width="2.0" height="8.1" fill="#0a80f8"/>
<rect x="166.0" y="180.5" width="2.0" height="7.9" fill="#ff0000"/>
<rect x="167.6" y="180.3" width="3.2" height="1.7" fill="#f2e88a"/>
<rect x="169.2" y="180.1" width="1.6" height="1.7" fill="#f2e88a"/>
<rect x="170.8" y="180.5" width="1.6" height="1.7" fill="#f2e88a"/>
<rect x="172.4" y="180.2" width="3.2" height="1.7" fill="#f2e88a"/>
<rect x="174.0" y="178.0" width="2.0" height="6.3" fill="#0a80f8"/>
<rect x="175.6" y="181.3" width="3.2" height="1.7" fill="#f2e88a"/>
<rect x="177.2" y="169.7" width="2.0" height="13.4" fill="#ff0000"/>
<rect x="178.8" y="166.0" width="2.0" height="6.7" fill="#ff0000"/>
<rect x="180.4" y="167.0" width="2.0" height="15.0" fill="#0a80f8"/>
<rect x="182.0" y="178.5" width="2.0" height="2.5" fill="#ff0000"/>
<rect x="183.6" y="183.9" width="4.8" height="1.7" fill="#f2e88a"/>
<rect x="185.2" y="182.8" width="2.0" height="19.9" fill="#0a80f8"/>
<rect x="186.8" y="199.5" width="3.2" height="1.7" fill="#f2e88a"/>
<rect x="188.4" y="196.8" width="2.0" height="5.6" fill="#ff0000"/>
<rect x="190.0" y="196.4" width="3.2" height="1.7" fill="#f2e88a"/>
<rect x="191.6" y="180.8" width="2.0" height="16.5" fill="#ff0000"/>
<rect x="193.2" y="179.8" width="2.0" height="6.3" fill="#0a80f8"/>
<rect x="194.8" y="189.4" width="3.2" height="1.7" fill="#f2e88a"/>
<rect x="196.4" y="189.2" width="2.0" height="5.9" fill="#0a80f8"/>
<rect x="198.0" y="192.1" width="2.0" height="8.3" fill="#0a80f8"/>
<rect x="199.6" y="197.4" width="3.2" height="1.7" fill="#f2e88a"/>
<rect x="201.2" y="194.0" width="2.0" height="4.2" fill="#ff0000"/>
<rect x="202.8" y="190.4" width="2.0" height="5.7" fill="#ff0000"/>
<rect x="204.4" y="187.4" width="2.0" height="7.7" fill="#0a80f8"/>
<rect x="206.0" y="189.1" width="2.0" height="26.0" fill="#0a80f8"/>
<rect x="207.6" y="212.1" width="2.0" height="8.5" fill="#0a80f8"/>
<rect x="209.2" y="216.9" width="4.8" height="1.7" fill="#f2e88a"/>
<rect x="210.8" y="216.6" width="3.2" height="1.7" fill="#f2e88a"/>
<rect x="212.4" y="216.6" width="1.6" height="1.7" fill="#f2e88a"/>
<rect x="214.0" y="214.6" width="2.0" height="2.8" fill="#ff0000"/>
<rect x="215.6" y="198.2" width="2.0" height="18.4" fill="#ff0000"/>
<rect x="217.2" y="195.2" width="2.0" height="14.4" fill="#0a80f8"/>
<rect x="218.8" y="198.2" width="2.0" height="14.4" fill="#ff0000"/>
<rect x="220.4" y="192.2" width="2.0" height="10.0" fill="#ff0000"/>
<rect x="222.0" y="194.2" width="2.0" height="5.8" fill="#0a80f8"/>
<rect x="223.6" y="198.1" width="2.0" height="3.9" fill="#0a80f8"/>
<rect x="225.2" y="201.1" width="1.6" height="1.7" fill="#f2e88a"/>
<rect x="226.8" y="203.1" width="3.2" height="1.7" fill="#f2e88a"/>
<rect x="228.4" y="201.0" width="2.0" height="7.7" fill="#0a80f8"/>
<rect x="230.0" y="202.2" width="2.0" height="3.5" fill="#ff0000"/>
<rect x="231.6" y="200.2" width="2.0" height="8.6" fill="#0a80f8"/>
<rect x="233.2" y="203.3" width="2.0" height="4.5" fill="#ff0000"/>
<rect x="234.8" y="207.7" width="4.8" height="1.7" fill="#f2e88a"/>
<rect x="236.4" y="203.5" width="2.0" height="7.0" fill="#ff0000"/>
<rect x="238.0" y="202.3" width="1.6" height="1.7" fill="#f2e88a"/>
<rect x="239.6" y="195.9" width="2.0" height="10.3" fill="#ff0000"/>
<rect x="241.2" y="194.9" width="2.0" height="7.0" fill="#0a80f8"/>
<rect x="242.8" y="195.4" width="2.0" height="6.5" fill="#ff0000"/>
<rect x="244.4" y="195.4" width="2.0" height="7.2" fill="#0a80f8"/>
<rect x="246.0" y="194.2" width="2.0" height="7.4" fill="#ff0000"/>
<rect x="247.6" y="196.3" width="3.2" height="1.7" fill="#f2e88a"/>
<rect x="249.2" y="196.1" width="2.0" height="3.8" fill="#0a80f8"/>
<rect x="250.8" y="197.4" width="2.0" height="4.5" fill="#ff0000"/>
<rect x="252.4" y="198.4" width="2.0" height="12.2" fill="#0a80f8"/>
<rect x="254.0" y="207.6" width="2.0" height="7.6" fill="#0a80f8"/>
<rect x="255.6" y="207.1" width="2.0" height="5.1" fill="#ff0000"/>
<rect x="257.2" y="206.1" width="2.0" height="16.3" fill="#0a80f8"/>
<rect x="258.8" y="208.5" width="2.0" height="13.0" fill="#ff0000"/>
<rect x="260.4" y="208.5" width="2.0" height="9.4" fill="#0a80f8"/>
<rect x="262.0" y="218.9" width="4.8" height="1.7" fill="#f2e88a"/>
<rect x="263.6" y="217.1" width="2.0" height="4.6" fill="#ff0000"/>
<rect x="265.2" y="216.1" width="2.0" height="4.1" fill="#0a80f8"/>
<rect x="266.8" y="216.3" width="4.8" height="1.7" fill="#f2e88a"/>
<rect x="268.4" y="215.9" width="3.2" height="1.7" fill="#f2e88a"/>
<rect x="270.0" y="217.3" width="3.2" height="1.7" fill="#f2e88a"/>
<rect x="271.6" y="208.7" width="2.0" height="9.4" fill="#ff0000"/>
<rect x="273.2" y="208.8" width="3.2" height="1.7" fill="#f2e88a"/>
<rect x="274.8" y="207.6" width="2.0" height="8.3" fill="#0a80f8"/>
<rect x="276.4" y="203.3" width="2.0" height="10.6" fill="#ff0000"/>
<rect x="278.0" y="202.3" width="2.0" height="6.3" fill="#0a80f8"/>
<rect x="279.6" y="206.5" width="4.8" height="1.7" fill="#f2e88a"/>
<rect x="281.2" y="207.3" width="2.0" height="1.9" fill="#0a80f8"/>
<rect x="282.8" y="205.0" width="2.0" height="7.1" fill="#ff0000"/>
<rect x="284.4" y="204.0" width="2.0" height="9.2" fill="#0a80f8"/>
<rect x="286.0" y="212.4" width="3.2" height="1.7" fill="#f2e88a"/>
<rect x="287.6" y="211.1" width="4.8" height="1.7" fill="#f2e88a"/>
<rect x="289.2" y="209.2" width="3.2" height="1.7" fill="#f2e88a"/>
<rect x="290.8" y="206.8" width="2.0" height="3.2" fill="#ff0000"/>
<rect x="292.4" y="207.8" width="2.0" height="3.9" fill="#0a80f8"/>
<rect x="294.0" y="201.2" width="2.0" height="11.5" fill="#ff0000"/>
<rect x="295.6" y="206.1" width="3.2" height="1.7" fill="#f2e88a"/>
<rect x="297.2" y="206.9" width="2.0" height="24.5" fill="#0a80f8"/>
<rect x="298.8" y="226.8" width="4.8" height="1.7" fill="#f2e88a"/>
<rect x="300.4" y="229.8" width="4.8" height="1.7" fill="#f2e88a"/>
<rect x="302.0" y="234.2" width="3.2" height="1.7" fill="#f2e88a"/>
<rect x="303.6" y="230.7" width="2.0" height="5.4" fill="#ff0000"/>
<rect x="305.2" y="226.8" width="2.0" height="4.9" fill="#ff0000"/>
<rect x="306.8" y="223.7" width="3.2" height="1.7" fill="#f2e88a"/>
<rect x="308.4" y="211.8" width="2.0" height="13.7" fill="#ff0000"/>
<rect x="310.0" y="209.8" width="2.0" height="10.8" fill="#0a80f8"/>
<rect x="311.6" y="205.0" width="2.0" height="15.6" fill="#ff0000"/>
<rect x="313.2" y="202.6" width="3.2" height="1.7" fill="#f2e88a"/>
<rect x="314.8" y="203.2" width="4.8" height="1.7" fill="#f2e88a"/>
<rect x="316.4" y="204.1" width="2.0" height="5.5" fill="#0a80f8"/>
<rect x="318.0" y="197.5" width="2.0" height="12.0" fill="#ff0000"/>
<rect x="319.6" y="196.2" width="2.0" height="5.3" fill="#ff0000"/>
<rect x="321.2" y="196.5" width="3.2" height="1.7" fill="#f2e88a"/>
<rect x="322.8" y="196.8" width="1.6" height="1.7" fill="#f2e88a"/>
<rect x="324.4" y="196.6" width="2.0" height="8.8" fill="#0a80f8"/>
<rect x="326.0" y="200.7" width="4.8" height="1.7" fill="#f2e88a"/>
<rect x="327.6" y="200.4" width="4.8" height="1.7" fill="#f2e88a"/>
<rect x="329.2" y="197.0" width="2.0" height="4.2" fill="#ff0000"/>
<rect x="330.8" y="199.0" width="2.0" height="7.6" fill="#0a80f8"/>
<rect x="332.4" y="203.2" width="2.0" height="3.5" fill="#ff0000"/>
<rect x="334.0" y="206.4" width="3.2" height="1.7" fill="#f2e88a"/>
<rect x="335.6" y="204.2" width="2.0" height="20.1" fill="#0a80f8"/>
<rect x="337.2" y="209.6" width="2.0" height="16.7" fill="#ff0000"/>
<rect x="338.8" y="211.6" width="2.0" height="19.3" fill="#0a80f8"/>
<rect x="340.4" y="221.5" width="2.0" height="10.4" fill="#ff0000"/>
<rect x="342.0" y="218.5" width="2.0" height="7.5" fill="#0a80f8"/>
<rect x="343.6" y="229.4" width="4.8" height="1.7" fill="#f2e88a"/>
<rect x="345.2" y="229.6" width="3.2" height="1.7" fill="#f2e88a"/>
<rect x="346.8" y="231.9" width="1.6" height="1.7" fill="#f2e88a"/>
<rect x="348.4" y="233.4" width="4.8" height="1.7" fill="#f2e88a"/>
<rect x="350.0" y="236.8" width="3.2" height="1.7" fill="#f2e88a"/>
<rect x="351.6" y="232.8" width="2.0" height="4.9" fill="#ff0000"/>
<rect x="353.2" y="236.0" width="3.2" height="1.7" fill="#f2e88a"/>
<rect x="354.8" y="234.5" width="3.2" height="1.7" fill="#f2e88a"/>
<rect x="356.4" y="232.6" width="3.2" height="1.7" fill="#f2e88a"/>
<rect x="358.0" y="228.9" width="2.0" height="7.5" fill="#ff0000"/>
<rect x="359.6" y="230.5" width="2.0" height="1.7" fill="#ff0000"/>
<rect x="361.2" y="228.7" width="4.8" height="1.7" fill="#f2e88a"/>
<rect x="362.8" y="231.1" width="1.6" height="1.7" fill="#f2e88a"/>
<rect x="364.4" y="228.6" width="2.0" height="3.3" fill="#ff0000"/>
<rect x="366.0" y="228.6" width="3.2" height="1.7" fill="#f2e88a"/>
<rect x="367.6" y="230.0" width="3.2" height="1.7" fill="#f2e88a"/>
<rect x="369.2" y="229.1" width="3.2" height="1.7" fill="#f2e88a"/>
<rect x="370.8" y="229.9" width="2.0" height="2.8" fill="#0a80f8"/>
<rect x="372.4" y="231.2" width="3.2" height="1.7" fill="#f2e88a"/>
<rect x="374.0" y="228.9" width="4.8" height="1.7" fill="#f2e88a"/>
<rect x="375.6" y="227.9" width="3.2" height="1.7" fill="#f2e88a"/>
<rect x="377.2" y="229.3" width="3.2" height="1.7" fill="#f2e88a"/>
<rect x="378.8" y="229.5" width="3.2" height="1.7" fill="#f2e88a"/>
<rect x="380.4" y="229.9" width="3.2" height="1.7" fill="#f2e88a"/>
<rect x="382.0" y="230.2" width="3.2" height="1.7" fill="#f2e88a"/>
<rect x="383.6" y="231.0" width="2.0" height="5.1" fill="#0a80f8"/>
<rect x="385.2" y="232.2" width="2.0" height="10.1" fill="#0a80f8"/>
<rect x="386.8" y="238.7" width="3.2" height="1.7" fill="#f2e88a"/>
<rect x="388.4" y="234.2" width="4.8" height="1.7" fill="#f2e88a"/>
<rect x="390.0" y="233.8" width="3.2" height="1.7" fill="#f2e88a"/>
<rect x="391.6" y="234.7" width="2.0" height="17.3" fill="#0a80f8"/>
<rect x="393.2" y="243.9" width="2.0" height="6.1" fill="#ff0000"/>
<rect x="394.8" y="242.8" width="4.8" height="1.7" fill="#f2e88a"/>
<rect x="396.4" y="243.6" width="2.0" height="6.0" fill="#0a80f8"/>
<rect x="398.0" y="246.7" width="2.0" height="6.0" fill="#0a80f8"/>
<rect x="399.6" y="247.6" width="2.0" height="5.0" fill="#ff0000"/>
<rect x="401.2" y="246.2" width="4.8" height="1.7" fill="#f2e88a"/>
<rect x="402.8" y="246.1" width="3.2" height="1.7" fill="#f2e88a"/>
<rect x="404.4" y="244.8" width="2.0" height="3.2" fill="#ff0000"/>
<rect x="406.0" y="243.9" width="3.2" height="1.7" fill="#f2e88a"/>
<rect x="407.6" y="245.2" width="4.8" height="1.7" fill="#f2e88a"/>
<rect x="409.2" y="245.7" width="4.8" height="1.7" fill="#f2e88a"/>
<rect x="410.8" y="241.4" width="2.0" height="5.1" fill="#ff0000"/>
<rect x="412.4" y="243.4" width="2.0" height="3.3" fill="#0a80f8"/>
<rect x="414.0" y="243.4" width="3.2" height="1.7" fill="#f2e88a"/>
<rect x="415.6" y="243.0" width="4.8" height="1.7" fill="#f2e88a"/>
<rect x="417.2" y="242.9" width="1.6" height="1.7" fill="#f2e88a"/>
<rect x="418.8" y="240.7" width="2.0" height="6.5" fill="#0a80f8"/>
<rect x="420.4" y="240.7" width="2.0" height="6.5" fill="#ff0000"/>
<rect x="422.0" y="240.7" width="2.0" height="16.5" fill="#0a80f8"/>
<rect x="423.6" y="247.9" width="2.0" height="9.3" fill="#ff0000"/>
<rect x="425.2" y="247.9" width="2.0" height="3.1" fill="#0a80f8"/>
<rect x="426.8" y="250.0" width="2.0" height="16.8" fill="#0a80f8"/>
<rect x="428.4" y="262.7" width="3.2" height="1.7" fill="#f2e88a"/>
<rect x="430.0" y="262.2" width="2.0" height="1.7" fill="#ff0000"/>
<rect x="431.6" y="260.4" width="3.2" height="1.7" fill="#f2e88a"/>
<rect x="433.2" y="261.3" width="2.0" height="4.8" fill="#0a80f8"/>
<rect x="434.8" y="256.6" width="2.0" height="9.5" fill="#ff0000"/>
<rect x="436.4" y="257.6" width="2.0" height="6.1" fill="#0a80f8"/>
<rect x="438.0" y="260.1" width="3.2" height="1.7" fill="#f2e88a"/>
<rect x="439.6" y="259.1" width="3.2" height="1.7" fill="#f2e88a"/>
<rect x="441.2" y="258.7" width="3.2" height="1.7" fill="#f2e88a"/>
<rect x="442.8" y="257.8" width="3.2" height="1.7" fill="#f2e88a"/>
<rect x="444.4" y="257.4" width="3.2" height="1.7" fill="#f2e88a"/>
<rect x="446.0" y="258.3" width="3.2" height="1.7" fill="#f2e88a"/>
<rect x="447.6" y="257.9" width="3.2" height="1.7" fill="#f2e88a"/>
<rect x="449.2" y="258.4" width="3.2" height="1.7" fill="#f2e88a"/>
<rect x="450.8" y="257.2" width="3.2" height="1.7" fill="#f2e88a"/>
<rect x="452.4" y="255.1" width="4.8" height="1.7" fill="#f2e88a"/>
<rect x="454.0" y="254.6" width="3.2" height="1.7" fill="#f2e88a"/>
<rect x="455.6" y="253.8" width="1.6" height="1.7" fill="#f2e88a"/>
<rect x="457.2" y="254.8" width="1.6" height="1.7" fill="#f2e88a"/>
<rect x="458.8" y="253.2" width="3.2" height="1.7" fill="#f2e88a"/>
<rect x="460.4" y="253.2" width="1.6" height="1.7" fill="#f2e88a"/>
<rect x="462.0" y="249.7" width="2.0" height="7.4" fill="#ff0000"/>
<rect x="463.6" y="252.6" width="3.2" height="1.7" fill="#f2e88a"/>
<rect x="465.2" y="252.4" width="1.6" height="1.7" fill="#f2e88a"/>
<rect x="466.8" y="253.1" width="1.6" height="1.7" fill="#f2e88a"/>
<rect x="468.4" y="254.5" width="3.2" height="1.7" fill="#f2e88a"/>
<rect x="470.0" y="249.4" width="2.0" height="8.0" fill="#ff0000"/>
<rect x="471.6" y="253.3" width="3.2" height="1.7" fill="#f2e88a"/>
<rect x="473.2" y="253.2" width="4.8" height="1.7" fill="#f2e88a"/>
<rect x="474.8" y="253.1" width="4.8" height="1.7" fill="#f2e88a"/>
<rect x="476.4" y="252.9" width="4.8" height="1.7" fill="#f2e88a"/>
<rect x="478.0" y="250.1" width="1.6" height="1.7" fill="#f2e88a"/>
<rect x="479.6" y="245.9" width="2.0" height="5.0" fill="#ff0000"/>
<rect x="481.2" y="245.9" width="4.8" height="1.7" fill="#f2e88a"/>
<rect x="482.8" y="245.8" width="2.0" height="4.5" fill="#0a80f8"/>
<rect x="484.4" y="246.1" width="3.2" height="1.7" fill="#f2e88a"/>
<rect x="486.0" y="250.7" width="3.2" height="1.7" fill="#f2e88a"/>
<rect x="487.6" y="249.6" width="2.0" height="6.8" fill="#0a80f8"/>
<rect x="489.2" y="253.3" width="2.0" height="7.4" fill="#0a80f8"/>
<rect x="490.8" y="258.7" width="2.0" height="8.2" fill="#0a80f8"/>
<rect x="492.4" y="262.0" width="2.0" height="2.8" fill="#ff0000"/>
<rect x="494.0" y="252.9" width="2.0" height="9.1" fill="#ff0000"/>
<rect x="495.6" y="256.3" width="1.6" height="1.7" fill="#f2e88a"/>
<rect x="497.2" y="256.2" width="1.6" height="1.7" fill="#f2e88a"/>
<rect x="498.8" y="255.6" width="1.6" height="1.7" fill="#f2e88a"/>
<rect x="500.4" y="250.7" width="2.0" height="5.7" fill="#ff0000"/>
<rect x="502.0" y="247.8" width="1.6" height="1.7" fill="#f2e88a"/>
<rect x="503.6" y="248.7" width="2.0" height="3.9" fill="#0a80f8"/>
<rect x="505.2" y="247.8" width="3.2" height="1.7" fill="#f2e88a"/>
<rect x="506.8" y="248.2" width="3.2" height="1.7" fill="#f2e88a"/>
<rect x="508.4" y="248.7" width="3.2" height="1.7" fill="#f2e88a"/>
<rect x="510.0" y="247.5" width="2.0" height="18.0" fill="#0a80f8"/>
<rect x="511.6" y="260.1" width="2.0" height="7.4" fill="#ff0000"/>
<rect x="513.2" y="259.1" width="2.0" height="11.6" fill="#0a80f8"/>
<rect x="514.8" y="263.3" width="3.2" height="1.7" fill="#f2e88a"/>
<rect x="516.4" y="262.8" width="3.2" height="1.7" fill="#f2e88a"/>
<rect x="518.0" y="265.1" width="3.2" height="1.7" fill="#f2e88a"/>
<rect x="519.6" y="265.9" width="2.0" height="8.5" fill="#0a80f8"/>
<rect x="521.2" y="269.5" width="2.0" height="4.1" fill="#0a80f8"/>
<rect x="522.8" y="269.2" width="2.0" height="4.4" fill="#ff0000"/>
<rect x="524.4" y="270.1" width="1.6" height="1.7" fill="#f2e88a"/>
<rect x="526.0" y="271.2" width="1.6" height="1.7" fill="#f2e88a"/>
<rect x="527.6" y="272.2" width="4.8" height="1.7" fill="#f2e88a"/>
<rect x="529.2" y="273.9" width="1.6" height="1.7" fill="#f2e88a"/>
<rect x="530.8" y="269.5" width="2.0" height="8.3" fill="#ff0000"/>
<rect x="532.4" y="268.3" width="2.0" height="4.2" fill="#ff0000"/>
<rect x="534.0" y="270.3" width="2.0" height="2.6" fill="#0a80f8"/>
<rect x="535.6" y="268.2" width="2.0" height="6.7" fill="#ff0000"/>
<rect x="537.2" y="269.5" width="4.8" height="1.7" fill="#f2e88a"/>
<rect x="538.8" y="266.0" width="2.0" height="6.3" fill="#ff0000"/>
<rect x="540.4" y="262.5" width="2.0" height="5.5" fill="#ff0000"/>
<rect x="542.0" y="262.4" width="3.2" height="1.7" fill="#f2e88a"/>
<rect x="543.6" y="256.7" width="2.0" height="9.5" fill="#ff0000"/>
<rect x="545.2" y="249.3" width="2.0" height="10.4" fill="#ff0000"/>
<rect x="546.8" y="246.5" width="3.2" height="1.7" fill="#f2e88a"/>
<rect x="548.4" y="245.3" width="2.0" height="11.4" fill="#0a80f8"/>
<rect x="550.0" y="247.4" width="3.2" height="1.7" fill="#f2e88a"/>
<rect x="551.6" y="246.6" width="4.8" height="1.7" fill="#f2e88a"/>
<rect x="553.2" y="242.3" width="2.0" height="5.1" fill="#ff0000"/>
<rect x="554.8" y="240.1" width="2.0" height="6.2" fill="#ff0000"/>
<rect x="556.4" y="240.1" width="2.0" height="7.8" fill="#0a80f8"/>
<rect x="558.0" y="242.9" width="2.0" height="5.7" fill="#0a80f8"/>
<rect x="559.6" y="244.1" width="4.8" height="1.7" fill="#f2e88a"/>
<rect x="561.2" y="243.5" width="2.0" height="2.5" fill="#ff0000"/>
<rect x="562.8" y="245.1" width="4.8" height="1.7" fill="#f2e88a"/>
<rect x="564.4" y="245.4" width="3.2" height="1.7" fill="#f2e88a"/>
<rect x="566.0" y="247.1" width="4.8" height="1.7" fill="#f2e88a"/>
<rect x="567.6" y="248.2" width="3.2" height="1.7" fill="#f2e88a"/>
<rect x="569.2" y="242.7" width="2.0" height="7.3" fill="#ff0000"/>
<rect x="570.8" y="244.7" width="3.2" height="1.7" fill="#f2e88a"/>
<rect x="572.4" y="244.6" width="2.0" height="8.2" fill="#0a80f8"/>
<rect x="574.0" y="244.3" width="2.0" height="7.4" fill="#ff0000"/>
<rect x="575.6" y="243.4" width="3.2" height="1.7" fill="#f2e88a"/>
<rect x="577.2" y="243.2" width="4.8" height="1.7" fill="#f2e88a"/>
<rect x="578.8" y="237.5" width="2.0" height="7.6" fill="#ff0000"/>
<rect x="580.4" y="238.8" width="3.2" height="1.7" fill="#f2e88a"/>
<rect x="582.0" y="238.7" width="3.2" height="1.7" fill="#f2e88a"/>
<rect x="583.6" y="238.9" width="4.8" height="1.7" fill="#f2e88a"/>
<rect x="585.2" y="233.9" width="2.0" height="7.9" fill="#ff0000"/>
<rect x="586.8" y="233.9" width="2.0" height="7.7" fill="#0a80f8"/>
<rect x="588.4" y="238.6" width="2.0" height="6.3" fill="#0a80f8"/>
<rect x="590.0" y="240.9" width="2.0" height="8.7" fill="#0a80f8"/>
<rect x="591.6" y="247.6" width="4.8" height="1.7" fill="#f2e88a"/>
<rect x="593.2" y="248.0" width="3.2" height="1.7" fill="#f2e88a"/>
<rect x="594.8" y="246.4" width="2.0" height="2.4" fill="#ff0000"/>
<rect x="596.4" y="244.4" width="2.0" height="4.3" fill="#0a80f8"/>
<rect x="598.0" y="247.8" width="3.2" height="1.7" fill="#f2e88a"/>
<rect x="599.6" y="248.1" width="3.2" height="1.7" fill="#f2e88a"/>
<rect x="601.2" y="248.0" width="3.2" height="1.7" fill="#f2e88a"/>
<rect x="602.8" y="247.7" width="1.6" height="1.7" fill="#f2e88a"/>
<rect x="604.4" y="246.3" width="1.6" height="1.7" fill="#f2e88a"/>
<rect x="606.0" y="246.8" width="4.8" height="1.7" fill="#f2e88a"/>
<rect x="607.6" y="243.1" width="2.0" height="4.6" fill="#ff0000"/>
<rect x="609.2" y="246.1" width="2.0" height="4.9" fill="#0a80f8"/>
<rect x="610.8" y="247.4" width="3.2" height="1.7" fill="#f2e88a"/>
<rect x="612.4" y="244.1" width="4.8" height="1.7" fill="#f2e88a"/>
<rect x="614.0" y="242.7" width="4.8" height="1.7" fill="#f2e88a"/>
<rect x="615.6" y="232.1" width="2.0" height="13.4" fill="#ff0000"/>
<rect x="617.2" y="230.1" width="2.0" height="3.6" fill="#0a80f8"/>
<rect x="618.8" y="232.3" width="3.2" height="1.7" fill="#f2e88a"/>
<rect x="620.4" y="228.2" width="2.0" height="5.9" fill="#ff0000"/>
<rect x="622.0" y="228.6" width="2.0" height="2.6" fill="#ff0000"/>
<rect x="623.6" y="227.6" width="2.0" height="2.0" fill="#0a80f8"/>
<rect x="625.2" y="227.0" width="2.0" height="2.7" fill="#ff0000"/>
<rect x="626.8" y="226.5" width="3.2" height="1.7" fill="#f2e88a"/>
<rect x="628.4" y="217.6" width="2.0" height="12.8" fill="#ff0000"/>
<rect x="630.0" y="218.6" width="2.0" height="8.1" fill="#0a80f8"/>
<rect x="631.6" y="220.4" width="2.0" height="7.3" fill="#ff0000"/>
<rect x="633.2" y="221.1" width="3.2" height="1.7" fill="#f2e88a"/>
<rect x="634.8" y="220.9" width="2.0" height="10.8" fill="#0a80f8"/>
<rect x="636.4" y="227.7" width="2.0" height="4.0" fill="#ff0000"/>
<rect x="638.0" y="224.7" width="2.0" height="7.1" fill="#0a80f8"/>
<rect x="639.6" y="231.7" width="4.8" height="1.7" fill="#f2e88a"/>
<rect x="641.2" y="232.2" width="4.8" height="1.7" fill="#f2e88a"/>
<rect x="642.8" y="228.6" width="2.0" height="4.5" fill="#ff0000"/>
<rect x="644.4" y="223.7" width="2.0" height="7.8" fill="#ff0000"/>
<rect x="646.0" y="223.7" width="2.0" height="5.2" fill="#0a80f8"/>
<rect x="647.6" y="219.0" width="2.0" height="10.9" fill="#ff0000"/>
<rect x="649.2" y="223.1" width="1.6" height="1.7" fill="#f2e88a"/>
<rect x="650.8" y="219.1" width="2.0" height="6.9" fill="#ff0000"/>
<rect x="652.4" y="217.9" width="1.6" height="1.7" fill="#f2e88a"/>
<rect x="654.0" y="216.7" width="2.0" height="6.2" fill="#0a80f8"/>
<rect x="655.6" y="215.6" width="2.0" height="7.4" fill="#ff0000"/>
<rect x="657.2" y="219.4" width="4.8" height="1.7" fill="#f2e88a"/>
<rect x="658.8" y="219.6" width="1.6" height="1.7" fill="#f2e88a"/>
<rect x="660.4" y="220.4" width="2.0" height="4.3" fill="#0a80f8"/>
<rect x="662.0" y="227.2" width="3.2" height="1.7" fill="#f2e88a"/>
<rect x="663.6" y="227.4" width="1.6" height="1.7" fill="#f2e88a"/>
<rect x="665.2" y="224.2" width="2.0" height="4.0" fill="#ff0000"/>
<rect x="666.8" y="217.8" width="2.0" height="6.4" fill="#ff0000"/>
<rect x="668.4" y="219.4" width="1.6" height="1.7" fill="#f2e88a"/>
<rect x="670.0" y="210.1" width="2.0" height="13.2" fill="#ff0000"/>
<rect x="671.6" y="203.1" width="2.0" height="11.0" fill="#ff0000"/>
<rect x="673.2" y="204.1" width="2.0" height="11.0" fill="#0a80f8"/>
<rect x="674.8" y="214.4" width="4.8" height="1.7" fill="#f2e88a"/>
<rect x="676.4" y="215.4" width="3.2" height="1.7" fill="#f2e88a"/>
<rect x="678.0" y="211.7" width="2.0" height="5.5" fill="#ff0000"/>
<rect x="679.6" y="216.5" width="3.2" height="1.7" fill="#f2e88a"/>
<rect x="681.2" y="215.9" width="2.0" height="3.4" fill="#ff0000"/>
<rect x="682.8" y="212.0" width="2.0" height="6.0" fill="#ff0000"/>
<rect x="684.4" y="207.1" width="2.0" height="4.9" fill="#ff0000"/>
<rect x="686.0" y="209.1" width="2.0" height="2.9" fill="#0a80f8"/>
<rect x="687.6" y="208.0" width="2.0" height="5.0" fill="#0a80f8"/>
<rect x="689.2" y="201.0" width="2.0" height="13.0" fill="#ff0000"/>
<rect x="690.8" y="201.0" width="2.0" height="4.2" fill="#0a80f8"/>
<rect x="692.4" y="204.1" width="2.0" height="6.8" fill="#0a80f8"/>
<rect x="694.0" y="192.1" width="2.0" height="18.9" fill="#ff0000"/>
<rect x="695.6" y="193.1" width="2.0" height="13.7" fill="#0a80f8"/>
<rect x="697.2" y="200.8" width="2.0" height="26.9" fill="#0a80f8"/>
<rect x="698.8" y="222.7" width="2.0" height="26.1" fill="#0a80f8"/>
<rect x="700.4" y="239.5" width="3.2" height="1.7" fill="#f2e88a"/>
<rect x="702.0" y="232.5" width="2.0" height="9.9" fill="#ff0000"/>
<rect x="703.6" y="225.6" width="2.0" height="8.8" fill="#ff0000"/>
<rect x="705.2" y="223.9" width="2.0" height="3.8" fill="#ff0000"/>
<rect x="706.8" y="205.6" width="2.0" height="18.3" fill="#ff0000"/>
<rect x="708.4" y="200.5" width="2.0" height="10.1" fill="#ff0000"/>
<rect x="710.0" y="202.5" width="2.0" height="10.8" fill="#0a80f8"/>
<rect x="711.6" y="199.0" width="2.0" height="12.4" fill="#ff0000"/>
<rect x="713.2" y="203.7" width="3.2" height="1.7" fill="#f2e88a"/>
<rect x="714.8" y="208.9" width="3.2" height="1.7" fill="#f2e88a"/>
<rect x="716.4" y="209.7" width="2.0" height="22.6" fill="#0a80f8"/>
<rect x="718.0" y="229.3" width="2.0" height="2.4" fill="#0a80f8"/>
<rect x="719.6" y="226.0" width="4.8" height="1.7" fill="#f2e88a"/>
<rect x="721.2" y="220.8" width="2.0" height="6.1" fill="#ff0000"/>
<rect x="722.8" y="217.6" width="2.0" height="6.2" fill="#ff0000"/>
<rect x="724.4" y="221.1" width="4.8" height="1.7" fill="#f2e88a"/>
<rect x="726.0" y="213.5" width="2.0" height="9.5" fill="#ff0000"/>
<rect x="727.6" y="211.5" width="2.0" height="6.9" fill="#0a80f8"/>
<rect x="729.2" y="211.2" width="2.0" height="6.2" fill="#ff0000"/>
<rect x="730.8" y="212.2" width="1.6" height="1.7" fill="#f2e88a"/>
<rect x="732.4" y="213.1" width="2.0" height="2.0" fill="#0a80f8"/>
<rect x="734.0" y="212.6" width="2.0" height="4.4" fill="#ff0000"/>
<rect x="735.6" y="212.6" width="2.0" height="13.1" fill="#0a80f8"/>
<rect x="737.2" y="218.3" width="2.0" height="7.5" fill="#ff0000"/>
<rect x="738.8" y="220.3" width="2.0" height="4.7" fill="#0a80f8"/>
<rect x="740.4" y="225.6" width="3.2" height="1.7" fill="#f2e88a"/>
<rect x="742.0" y="224.5" width="3.2" height="1.7" fill="#f2e88a"/>
<rect x="743.6" y="224.3" width="2.0" height="7.1" fill="#0a80f8"/>
<rect x="745.2" y="226.9" width="2.0" height="5.5" fill="#ff0000"/>
<rect x="746.8" y="226.2" width="3.2" height="1.7" fill="#f2e88a"/>
<rect x="748.4" y="228.2" width="3.2" height="1.7" fill="#f2e88a"/>
<rect x="750.0" y="230.3" width="3.2" height="1.7" fill="#f2e88a"/>
<rect x="751.6" y="230.9" width="3.2" height="1.7" fill="#f2e88a"/>
<rect x="753.2" y="228.8" width="1.6" height="1.7" fill="#f2e88a"/>
<rect x="754.8" y="228.7" width="3.2" height="1.7" fill="#f2e88a"/>
<rect x="756.4" y="228.5" width="3.2" height="1.7" fill="#f2e88a"/>
<rect x="758.0" y="228.1" width="2.0" height="2.3" fill="#ff0000"/>
<rect x="759.6" y="229.5" width="3.2" height="1.7" fill="#f2e88a"/>
<rect x="761.2" y="231.9" width="1.6" height="1.7" fill="#f2e88a"/>
<rect x="762.8" y="232.8" width="2.0" height="5.7" fill="#0a80f8"/>
<rect x="764.4" y="232.0" width="2.0" height="9.4" fill="#ff0000"/>
<rect x="766.0" y="229.0" width="2.0" height="8.2" fill="#0a80f8"/>
<rect x="767.6" y="234.2" width="2.0" height="8.1" fill="#0a80f8"/>
<rect x="769.2" y="237.8" width="2.0" height="3.4" fill="#ff0000"/>
<rect x="770.8" y="238.0" width="3.2" height="1.7" fill="#f2e88a"/>
<rect x="772.4" y="238.1" width="3.2" height="1.7" fill="#f2e88a"/>
<rect x="774.0" y="237.6" width="1.6" height="1.7" fill="#f2e88a"/>
<rect x="775.6" y="238.5" width="2.0" height="1.7" fill="#0a80f8"/>
<rect x="777.2" y="239.1" width="3.2" height="1.7" fill="#f2e88a"/>
<rect x="778.8" y="240.0" width="1.6" height="1.7" fill="#f2e88a"/>
<rect x="780.4" y="237.4" width="2.0" height="6.4" fill="#ff0000"/>
<rect x="782.0" y="237.4" width="3.2" height="1.7" fill="#f2e88a"/>
<rect x="783.6" y="240.7" width="1.6" height="1.7" fill="#f2e88a"/>
<rect x="785.2" y="238.5" width="2.0" height="3.0" fill="#ff0000"/>
<rect x="786.8" y="235.5" width="2.0" height="10.9" fill="#0a80f8"/>
<rect x="788.4" y="234.5" width="2.0" height="9.0" fill="#ff0000"/>
<rect x="790.0" y="235.0" width="1.6" height="1.7" fill="#f2e88a"/>
<rect x="791.6" y="229.6" width="2.0" height="6.2" fill="#ff0000"/>
<rect x="793.2" y="222.2" width="2.0" height="7.4" fill="#ff0000"/>
<rect x="794.8" y="222.2" width="2.0" height="1.7" fill="#0a80f8"/>
<rect x="796.4" y="220.3" width="2.0" height="13.8" fill="#0a80f8"/>
<rect x="798.0" y="225.2" width="3.2" height="1.7" fill="#f2e88a"/>
<rect x="799.6" y="223.9" width="4.8" height="1.7" fill="#f2e88a"/>
<rect x="801.2" y="223.8" width="2.0" height="5.0" fill="#0a80f8"/>
<rect x="802.8" y="225.8" width="3.2" height="1.7" fill="#f2e88a"/>
<rect x="804.4" y="224.6" width="2.0" height="5.4" fill="#0a80f8"/>
<rect x="806.0" y="223.7" width="4.8" height="1.7" fill="#f2e88a"/>
<rect x="807.6" y="213.4" width="2.0" height="13.2" fill="#ff0000"/>
<rect x="809.2" y="215.4" width="2.0" height="9.6" fill="#0a80f8"/>
<rect x="810.8" y="215.0" width="2.0" height="10.9" fill="#ff0000"/>
<rect x="812.4" y="211.4" width="1.6" height="1.7" fill="#f2e88a"/>
<rect x="814.0" y="198.0" width="2.0" height="15.3" fill="#ff0000"/>
<rect x="815.6" y="195.0" width="1.6" height="1.7" fill="#f2e88a"/>
<rect x="817.2" y="194.8" width="2.0" height="5.7" fill="#0a80f8"/>
<rect x="818.8" y="197.6" width="1.6" height="1.7" fill="#f2e88a"/>
<rect x="820.4" y="192.4" width="2.0" height="7.0" fill="#ff0000"/>
<rect x="822.0" y="188.4" width="2.0" height="9.1" fill="#ff0000"/>
<rect x="823.6" y="189.4" width="2.0" height="6.1" fill="#0a80f8"/>
<rect x="825.2" y="185.7" width="2.0" height="8.7" fill="#ff0000"/>
<rect x="826.8" y="178.8" width="2.0" height="9.9" fill="#ff0000"/>
<rect x="828.4" y="174.1" width="2.0" height="5.8" fill="#ff0000"/>
<rect x="830.0" y="166.2" width="2.0" height="9.8" fill="#ff0000"/>
<rect x="831.6" y="168.1" width="1.6" height="1.7" fill="#f2e88a"/>
<rect x="833.2" y="172.2" width="3.2" height="1.7" fill="#f2e88a"/>
<rect x="834.8" y="173.1" width="4.8" height="1.7" fill="#f2e88a"/>
<rect x="836.4" y="173.6" width="3.2" height="1.7" fill="#f2e88a"/>
<rect x="838.0" y="172.4" width="2.0" height="8.5" fill="#0a80f8"/>
<rect x="839.6" y="178.4" width="3.2" height="1.7" fill="#f2e88a"/>
<rect x="841.2" y="177.2" width="2.0" height="4.6" fill="#0a80f8"/>
<rect x="842.8" y="179.9" width="3.2" height="1.7" fill="#f2e88a"/>
<rect x="844.4" y="171.6" width="2.0" height="12.1" fill="#ff0000"/>
<rect x="846.0" y="169.0" width="2.0" height="7.7" fill="#ff0000"/>
<rect x="847.6" y="169.0" width="2.0" height="7.6" fill="#0a80f8"/>
<rect x="849.2" y="172.2" width="2.0" height="3.3" fill="#ff0000"/>
<rect x="850.8" y="165.8" width="2.0" height="7.4" fill="#ff0000"/>
<rect x="852.4" y="164.8" width="2.0" height="6.7" fill="#0a80f8"/>
<rect x="854.0" y="166.1" width="4.8" height="1.7" fill="#f2e88a"/>
<rect x="855.6" y="165.8" width="3.2" height="1.7" fill="#f2e88a"/>
<rect x="857.2" y="162.1" width="2.0" height="4.5" fill="#ff0000"/>
<rect x="858.8" y="163.1" width="2.0" height="4.1" fill="#0a80f8"/>
<rect x="860.4" y="163.0" width="3.2" height="1.7" fill="#f2e88a"/>
<rect x="862.0" y="159.4" width="2.0" height="6.5" fill="#ff0000"/>
<rect x="863.6" y="161.9" width="3.2" height="1.7" fill="#f2e88a"/>
<rect x="865.2" y="163.4" width="3.2" height="1.7" fill="#f2e88a"/>
<rect x="866.8" y="163.3" width="4.8" height="1.7" fill="#f2e88a"/>
<rect x="868.4" y="167.2" width="3.2" height="1.7" fill="#f2e88a"/>
<rect x="870.0" y="165.1" width="2.0" height="14.9" fill="#0a80f8"/>
<rect x="871.6" y="169.3" width="2.0" height="8.8" fill="#ff0000"/>
<rect x="873.2" y="163.8" width="2.0" height="5.4" fill="#ff0000"/>
<rect x="874.8" y="159.5" width="2.0" height="9.3" fill="#ff0000"/>
<rect x="876.4" y="162.5" width="2.0" height="6.9" fill="#0a80f8"/>
<rect x="878.0" y="167.1" width="1.6" height="1.7" fill="#f2e88a"/>
<rect x="879.6" y="162.7" width="2.0" height="7.2" fill="#ff0000"/>
<rect x="881.2" y="158.3" width="2.0" height="4.4" fill="#ff0000"/>
<rect x="882.8" y="171.0" width="1.6" height="1.7" fill="#f2e88a"/>
<rect x="884.4" y="168.8" width="2.0" height="16.8" fill="#0a80f8"/>
<rect x="886.0" y="180.1" width="2.0" height="5.5" fill="#ff0000"/>
<rect x="887.6" y="179.8" width="1.6" height="1.7" fill="#f2e88a"/>
<rect x="889.2" y="179.8" width="4.8" height="1.7" fill="#f2e88a"/>
<rect x="890.8" y="180.7" width="2.0" height="7.7" fill="#0a80f8"/>
<rect x="892.4" y="186.4" width="3.2" height="1.7" fill="#f2e88a"/>
<rect x="894.0" y="184.4" width="1.6" height="1.7" fill="#f2e88a"/>
<rect x="895.6" y="185.2" width="3.2" height="1.7" fill="#f2e88a"/>
<rect x="897.2" y="184.7" width="4.8" height="1.7" fill="#f2e88a"/>
<rect x="898.8" y="182.6" width="2.0" height="4.8" fill="#0a80f8"/>
<rect x="900.4" y="185.6" width="2.0" height="2.8" fill="#ff0000"/>
<rect x="902.0" y="184.3" width="4.8" height="1.7" fill="#f2e88a"/>
<rect x="903.6" y="183.2" width="2.0" height="5.5" fill="#0a80f8"/>
<rect x="905.2" y="188.3" width="3.2" height="1.7" fill="#f2e88a"/>
<rect x="906.8" y="189.1" width="2.0" height="2.3" fill="#0a80f8"/>
<rect x="908.4" y="189.4" width="1.6" height="1.7" fill="#f2e88a"/>
<rect x="910.0" y="191.2" width="1.6" height="1.7" fill="#f2e88a"/>
<rect x="911.6" y="190.0" width="1.6" height="1.7" fill="#f2e88a"/>
<rect x="913.2" y="187.8" width="2.0" height="5.3" fill="#0a80f8"/>
<rect x="914.8" y="190.2" width="4.8" height="1.7" fill="#f2e88a"/>
<rect x="916.4" y="187.8" width="3.2" height="1.7" fill="#f2e88a"/>
<rect x="918.0" y="187.1" width="3.2" height="1.7" fill="#f2e88a"/>
<rect x="919.6" y="187.5" width="3.2" height="1.7" fill="#f2e88a"/>
<rect x="921.2" y="182.8" width="2.0" height="8.6" fill="#ff0000"/>
<rect x="922.8" y="183.7" width="3.2" height="1.7" fill="#f2e88a"/>
<rect x="924.4" y="183.0" width="3.2" height="1.7" fill="#f2e88a"/>
<rect x="926.0" y="180.9" width="2.0" height="6.4" fill="#0a80f8"/>
<rect x="927.6" y="183.2" width="1.6" height="1.7" fill="#f2e88a"/>
<rect x="929.2" y="180.3" width="2.0" height="3.8" fill="#ff0000"/>
<rect x="930.8" y="176.7" width="2.0" height="5.6" fill="#ff0000"/>
<rect x="932.4" y="176.0" width="2.0" height="2.7" fill="#ff0000"/>
<rect x="934.0" y="164.5" width="2.0" height="11.5" fill="#ff0000"/>
<rect x="935.6" y="165.5" width="2.0" height="3.5" fill="#0a80f8"/>
<rect x="937.2" y="167.0" width="2.0" height="4.8" fill="#0a80f8"/>
<rect x="938.8" y="170.0" width="3.2" height="1.7" fill="#f2e88a"/>
<rect x="940.4" y="168.8" width="2.0" height="9.8" fill="#0a80f8"/>
<rect x="942.0" y="178.6" width="2.0" height="1.9" fill="#0a80f8"/>
<rect x="943.6" y="175.6" width="2.0" height="4.8" fill="#ff0000"/>
<rect x="945.2" y="174.6" width="2.0" height="2.4" fill="#0a80f8"/>
<rect x="946.8" y="174.5" width="2.0" height="5.6" fill="#ff0000"/>
<rect x="948.4" y="173.5" width="2.0" height="7.0" fill="#0a80f8"/>
<rect x="950.0" y="173.9" width="2.0" height="5.6" fill="#ff0000"/>
<rect x="951.6" y="173.9" width="2.0" height="1.7" fill="#0a80f8"/>
<rect x="953.2" y="167.9" width="2.0" height="7.2" fill="#ff0000"/>
<rect x="954.8" y="160.8" width="2.0" height="8.1" fill="#ff0000"/>
<rect x="956.4" y="159.6" width="2.0" height="6.3" fill="#ff0000"/>
<rect x="958.0" y="159.6" width="2.0" height="12.2" fill="#0a80f8"/>
<rect x="959.6" y="159.1" width="2.0" height="9.6" fill="#ff0000"/>
<rect x="961.2" y="159.1" width="2.0" height="9.5" fill="#0a80f8"/>
<rect x="962.8" y="165.8" width="2.0" height="4.9" fill="#ff0000"/>
<rect x="964.4" y="166.1" width="3.2" height="1.7" fill="#f2e88a"/>
<rect x="966.0" y="167.0" width="2.0" height="6.1" fill="#0a80f8"/>
<rect x="967.6" y="172.0" width="4.8" height="1.7" fill="#f2e88a"/>
<rect x="969.2" y="169.8" width="2.0" height="3.0" fill="#ff0000"/>
<rect x="970.8" y="169.8" width="2.0" height="8.5" fill="#0a80f8"/>
<rect x="972.4" y="173.4" width="2.0" height="5.0" fill="#ff0000"/>
<rect x="974.0" y="173.4" width="2.0" height="9.5" fill="#0a80f8"/>
<rect x="975.6" y="179.9" width="2.0" height="3.0" fill="#ff0000"/>
<rect x="977.2" y="183.2" width="3.2" height="1.7" fill="#f2e88a"/>
<rect x="978.8" y="182.0" width="2.0" height="7.6" fill="#0a80f8"/>
<rect x="980.4" y="185.6" width="1.6" height="1.7" fill="#f2e88a"/>
<rect x="982.0" y="179.4" width="2.0" height="7.1" fill="#ff0000"/>
<rect x="983.6" y="180.4" width="2.0" height="6.6" fill="#0a80f8"/>
<rect x="985.2" y="181.1" width="2.0" height="6.8" fill="#ff0000"/>
<rect x="986.8" y="173.2" width="2.0" height="11.9" fill="#ff0000"/>
<rect x="988.4" y="176.2" width="2.0" height="7.3" fill="#0a80f8"/>
<rect x="990.0" y="181.8" width="3.2" height="1.7" fill="#f2e88a"/>
<rect x="991.6" y="180.0" width="3.2" height="1.7" fill="#f2e88a"/>
<rect x="993.2" y="180.8" width="2.0" height="2.3" fill="#0a80f8"/>
<rect x="994.8" y="179.8" width="2.0" height="2.3" fill="#ff0000"/>
<rect x="996.4" y="180.1" width="4.8" height="1.7" fill="#f2e88a"/>
<rect x="998.0" y="178.9" width="2.0" height="10.8" fill="#0a80f8"/>
<rect x="999.6" y="189.8" width="2.0" height="1.7" fill="#0a80f8"/>
<rect x="1001.2" y="185.3" width="2.0" height="6.1" fill="#ff0000"/>
<rect x="1002.8" y="187.6" width="3.2" height="1.7" fill="#f2e88a"/>
<rect x="1004.4" y="183.3" width="2.0" height="7.2" fill="#ff0000"/>
<rect x="1006.0" y="186.1" width="4.8" height="1.7" fill="#f2e88a"/>
<rect x="1007.6" y="188.9" width="3.2" height="1.7" fill="#f2e88a"/>
<rect x="1009.2" y="187.7" width="2.0" height="6.7" fill="#0a80f8"/>
<rect x="1010.8" y="184.6" width="2.0" height="7.8" fill="#ff0000"/>
<rect x="1012.4" y="184.3" width="2.0" height="5.3" fill="#ff0000"/>
<rect x="1014.0" y="184.3" width="2.0" height="4.3" fill="#0a80f8"/>
<rect x="1015.6" y="181.1" width="2.0" height="8.5" fill="#ff0000"/>
<rect x="1017.2" y="177.9" width="2.0" height="4.2" fill="#ff0000"/>
<rect x="1018.8" y="180.1" width="4.8" height="1.7" fill="#f2e88a"/>
<rect x="1020.4" y="174.7" width="2.0" height="9.2" fill="#ff0000"/>
<rect x="1022.0" y="177.5" width="4.8" height="1.7" fill="#f2e88a"/>
<rect x="1023.6" y="175.9" width="3.2" height="1.7" fill="#f2e88a"/>
<rect x="1025.2" y="175.6" width="3.2" height="1.7" fill="#f2e88a"/>
<rect x="1026.8" y="175.7" width="3.2" height="1.7" fill="#f2e88a"/>
<rect x="1028.4" y="175.9" width="4.8" height="1.7" fill="#f2e88a"/>
<rect x="1030.0" y="175.0" width="1.6" height="1.7" fill="#f2e88a"/>
<rect x="1031.6" y="175.9" width="2.0" height="5.0" fill="#0a80f8"/>
<rect x="1033.2" y="176.6" width="2.0" height="4.3" fill="#ff0000"/>
<rect x="1034.8" y="174.8" width="3.2" height="1.7" fill="#f2e88a"/>
<rect x="1036.4" y="176.3" width="1.6" height="1.7" fill="#f2e88a"/>
<rect x="1038.0" y="175.3" width="3.2" height="1.7" fill="#f2e88a"/>
<rect x="1039.6" y="174.5" width="3.2" height="1.7" fill="#f2e88a"/>
<rect x="1041.2" y="175.2" width="1.6" height="1.7" fill="#f2e88a"/>
<rect x="1042.8" y="176.0" width="3.2" height="1.7" fill="#f2e88a"/>
<rect x="1044.4" y="174.9" width="1.6" height="1.7" fill="#f2e88a"/>
<rect x="1046.0" y="176.0" width="3.2" height="1.7" fill="#f2e88a"/>
<rect x="1047.6" y="176.0" width="3.2" height="1.7" fill="#f2e88a"/>
<rect x="1049.2" y="172.3" width="2.0" height="4.6" fill="#ff0000"/>
<rect x="1050.8" y="173.9" width="3.2" height="1.7" fill="#f2e88a"/>
<rect x="1052.4" y="174.1" width="4.8" height="1.7" fill="#f2e88a"/>
<rect x="1054.0" y="172.0" width="3.2" height="1.7" fill="#f2e88a"/>
<rect x="1055.6" y="171.0" width="4.8" height="1.7" fill="#f2e88a"/>
<rect x="1057.2" y="172.3" width="3.2" height="1.7" fill="#f2e88a"/>
<rect x="1058.8" y="173.1" width="3.2" height="1.7" fill="#f2e88a"/>
<rect x="1060.4" y="171.7" width="1.6" height="1.7" fill="#f2e88a"/>
<rect x="1062.0" y="165.2" width="2.0" height="9.4" fill="#ff0000"/>
<rect x="1063.6" y="166.2" width="2.0" height="8.4" fill="#0a80f8"/>
<rect x="1065.2" y="169.7" width="3.2" height="1.7" fill="#f2e88a"/>
<rect x="1066.8" y="165.6" width="2.0" height="7.9" fill="#ff0000"/>
<rect x="1068.4" y="166.7" width="4.8" height="1.7" fill="#f2e88a"/>
<rect x="1070.0" y="166.8" width="3.2" height="1.7" fill="#f2e88a"/>
<rect x="1071.6" y="166.6" width="4.8" height="1.7" fill="#f2e88a"/>
<rect x="1073.2" y="166.3" width="4.8" height="1.7" fill="#f2e88a"/>
<rect x="1074.8" y="167.2" width="2.0" height="4.2" fill="#0a80f8"/>
<rect x="1076.4" y="165.3" width="2.0" height="8.1" fill="#ff0000"/>
<rect x="1078.0" y="165.7" width="3.2" height="1.7" fill="#f2e88a"/>
<rect x="1079.6" y="166.6" width="2.0" height="2.8" fill="#0a80f8"/>
<rect x="1081.2" y="165.7" width="2.0" height="4.7" fill="#ff0000"/>
<rect x="1082.8" y="165.5" width="3.2" height="1.7" fill="#f2e88a"/>
<rect x="1084.4" y="164.0" width="2.0" height="5.3" fill="#ff0000"/>
<rect x="1086.0" y="164.3" width="4.8" height="1.7" fill="#f2e88a"/>
<rect x="1087.6" y="155.6" width="2.0" height="12.5" fill="#ff0000"/>
<rect x="1089.2" y="156.5" width="3.2" height="1.7" fill="#f2e88a"/>
<rect x="1090.8" y="159.8" width="4.8" height="1.7" fill="#f2e88a"/>
<rect x="1092.4" y="156.0" width="2.0" height="7.7" fill="#ff0000"/>
<rect x="1094.0" y="153.0" width="2.0" height="8.9" fill="#0a80f8"/>
<rect x="1095.6" y="167.8" width="3.2" height="1.7" fill="#f2e88a"/>
<rect x="1097.2" y="171.0" width="3.2" height="1.7" fill="#f2e88a"/>
<rect x="1098.8" y="169.8" width="2.0" height="10.3" fill="#0a80f8"/>
<rect x="1100.4" y="175.6" width="3.2" height="1.7" fill="#f2e88a"/>
<rect x="1102.0" y="167.5" width="2.0" height="9.0" fill="#ff0000"/>
<rect x="1103.6" y="164.0" width="3.2" height="1.7" fill="#f2e88a"/>
<rect x="1105.2" y="165.4" width="1.6" height="1.7" fill="#f2e88a"/>
<rect x="1106.8" y="166.3" width="3.2" height="1.7" fill="#f2e88a"/>
<rect x="1108.4" y="165.8" width="1.6" height="1.7" fill="#f2e88a"/>
<rect x="1110.0" y="165.2" width="3.2" height="1.7" fill="#f2e88a"/>
<rect x="1111.6" y="165.5" width="4.8" height="1.7" fill="#f2e88a"/>
<rect x="1113.2" y="164.7" width="1.6" height="1.7" fill="#f2e88a"/>
<rect x="1114.8" y="165.3" width="3.2" height="1.7" fill="#f2e88a"/>
<rect x="1116.4" y="165.5" width="4.8" height="1.7" fill="#f2e88a"/>
<rect x="1118.0" y="164.5" width="3.2" height="1.7" fill="#f2e88a"/>
<rect x="1119.6" y="164.7" width="1.6" height="1.7" fill="#f2e88a"/>
<rect x="1121.2" y="164.5" width="3.2" height="1.7" fill="#f2e88a"/>
<rect x="1122.8" y="163.9" width="1.6" height="1.7" fill="#f2e88a"/>
<rect x="1124.4" y="164.0" width="3.2" height="1.7" fill="#f2e88a"/>
<rect x="1126.0" y="164.6" width="3.2" height="1.7" fill="#f2e88a"/>
<rect x="1127.6" y="161.7" width="2.0" height="3.8" fill="#ff0000"/>
<rect x="1129.2" y="161.7" width="2.0" height="7.7" fill="#0a80f8"/>
<rect x="1130.8" y="162.4" width="2.0" height="5.0" fill="#ff0000"/>
<rect x="1132.4" y="157.5" width="2.0" height="4.9" fill="#ff0000"/>
<rect x="1134.0" y="158.5" width="2.0" height="11.5" fill="#0a80f8"/>
<rect x="1135.6" y="164.5" width="2.0" height="8.5" fill="#ff0000"/>
<rect x="1137.2" y="164.5" width="2.0" height="2.0" fill="#0a80f8"/>
<rect x="1138.8" y="160.8" width="2.0" height="5.7" fill="#ff0000"/>
<rect x="1140.4" y="148.0" width="2.0" height="15.8" fill="#ff0000"/>
<rect x="1142.0" y="149.6" width="4.8" height="1.7" fill="#f2e88a"/>
<rect x="1143.6" y="143.2" width="2.0" height="7.2" fill="#ff0000"/>
<rect x="1145.2" y="130.7" width="2.0" height="12.5" fill="#ff0000"/>
<rect x="1146.8" y="128.3" width="2.0" height="3.5" fill="#ff0000"/>
<rect x="1148.4" y="122.6" width="2.0" height="7.6" fill="#ff0000"/>
<rect x="1150.0" y="121.6" width="2.0" height="6.0" fill="#0a80f8"/>
<rect x="1151.6" y="126.6" width="2.0" height="9.6" fill="#0a80f8"/>
<rect x="1153.2" y="131.3" width="2.0" height="3.9" fill="#ff0000"/>
<rect x="1154.8" y="121.3" width="2.0" height="10.0" fill="#ff0000"/>
<rect x="1156.4" y="120.1" width="2.0" height="4.2" fill="#ff0000"/>
<rect x="1158.0" y="115.5" width="2.0" height="4.6" fill="#ff0000"/>
<rect x="1159.6" y="119.2" width="3.2" height="1.7" fill="#f2e88a"/>
<rect x="1161.2" y="122.5" width="1.6" height="1.7" fill="#f2e88a"/>
<rect x="1162.8" y="121.1" width="3.2" height="1.7" fill="#f2e88a"/>
<rect x="1164.4" y="120.5" width="3.2" height="1.7" fill="#f2e88a"/>
<rect x="1166.0" y="119.4" width="2.0" height="6.7" fill="#0a80f8"/>
<rect x="1167.6" y="125.1" width="2.0" height="10.3" fill="#0a80f8"/>
<rect x="1169.2" y="121.3" width="2.0" height="14.1" fill="#ff0000"/>
<rect x="1170.8" y="121.2" width="1.6" height="1.7" fill="#f2e88a"/>
<rect x="1172.4" y="126.0" width="4.8" height="1.7" fill="#f2e88a"/>
<rect x="1174.0" y="123.9" width="2.0" height="16.3" fill="#0a80f8"/>
<rect x="1175.6" y="137.2" width="2.0" height="20.3" fill="#0a80f8"/>
<rect x="1177.2" y="155.1" width="3.2" height="1.7" fill="#f2e88a"/>
<rect x="1178.8" y="151.6" width="3.2" height="1.7" fill="#f2e88a"/>
<rect x="1180.4" y="147.5" width="1.6" height="1.7" fill="#f2e88a"/>
<rect x="1182.0" y="145.6" width="1.6" height="1.7" fill="#f2e88a"/>
<rect x="1183.6" y="144.1" width="3.2" height="1.7" fill="#f2e88a"/>
<rect x="1185.2" y="143.8" width="3.2" height="1.7" fill="#f2e88a"/>
<rect x="1186.8" y="142.9" width="3.2" height="1.7" fill="#f2e88a"/>
<rect x="1188.4" y="142.1" width="3.2" height="1.7" fill="#f2e88a"/>
<rect x="1190.0" y="143.0" width="3.2" height="1.7" fill="#f2e88a"/>
<rect x="1191.6" y="142.9" width="3.2" height="1.7" fill="#f2e88a"/>
<rect x="1193.2" y="143.5" width="1.6" height="1.7" fill="#f2e88a"/>
<rect x="1194.8" y="143.3" width="2.0" height="4.4" fill="#0a80f8"/>
<rect x="1196.4" y="144.0" width="2.0" height="3.6" fill="#ff0000"/>
<rect x="1198.0" y="143.9" width="4.8" height="1.7" fill="#f2e88a"/>
<rect x="1199.6" y="140.8" width="2.0" height="5.0" fill="#ff0000"/>
<rect x="1201.2" y="139.8" width="2.0" height="7.5" fill="#0a80f8"/>
<rect x="1202.8" y="138.5" width="2.0" height="8.8" fill="#ff0000"/>
<rect x="1204.4" y="140.8" width="3.2" height="1.7" fill="#f2e88a"/>
<rect x="1206.0" y="141.2" width="3.2" height="1.7" fill="#f2e88a"/>
<rect x="1207.6" y="141.1" width="2.0" height="7.8" fill="#0a80f8"/>
<rect x="1209.2" y="134.2" width="2.0" height="11.7" fill="#ff0000"/>
<rect x="1210.8" y="134.2" width="2.0" height="8.5" fill="#0a80f8"/>
<rect x="1212.4" y="132.9" width="2.0" height="10.8" fill="#ff0000"/>
<rect x="1214.0" y="129.5" width="3.2" height="1.7" fill="#f2e88a"/>
<rect x="1215.6" y="130.3" width="2.0" height="3.5" fill="#0a80f8"/>
<rect x="1217.2" y="126.0" width="2.0" height="8.8" fill="#ff0000"/>
<rect x="1218.8" y="128.0" width="2.0" height="1.7" fill="#0a80f8"/>
<rect x="1220.4" y="126.4" width="3.2" height="1.7" fill="#f2e88a"/>
<rect x="1222.0" y="126.6" width="3.2" height="1.7" fill="#f2e88a"/>
<rect x="1223.6" y="124.3" width="2.0" height="6.2" fill="#ff0000"/>
<rect x="1225.2" y="123.3" width="2.0" height="4.7" fill="#0a80f8"/>
<rect x="1226.8" y="127.2" width="4.8" height="1.7" fill="#f2e88a"/>
<rect x="1228.4" y="127.0" width="2.0" height="13.2" fill="#0a80f8"/>
<rect x="1230.0" y="136.5" width="4.8" height="1.7" fill="#f2e88a"/>
<rect x="1231.6" y="133.1" width="2.0" height="6.3" fill="#ff0000"/>
<rect x="1233.2" y="136.1" width="4.8" height="1.7" fill="#f2e88a"/>
<rect x="1234.8" y="134.0" width="2.0" height="7.8" fill="#0a80f8"/>
<rect x="1236.4" y="135.2" width="2.0" height="7.5" fill="#ff0000"/>
<rect x="1238.0" y="135.4" width="1.6" height="1.7" fill="#f2e88a"/>
<rect x="1239.6" y="135.2" width="4.8" height="1.7" fill="#f2e88a"/>
<rect x="1241.2" y="136.0" width="2.0" height="2.6" fill="#0a80f8"/>
<rect x="1242.8" y="136.8" width="2.0" height="1.8" fill="#ff0000"/>
<rect x="1244.4" y="138.2" width="3.2" height="1.7" fill="#f2e88a"/>
<rect x="1246.0" y="137.7" width="4.8" height="1.7" fill="#f2e88a"/>
<rect x="1247.6" y="133.4" width="1.6" height="1.7" fill="#f2e88a"/>
<rect x="1249.2" y="131.3" width="2.0" height="7.2" fill="#0a80f8"/>
<rect x="1250.8" y="134.5" width="2.0" height="8.9" fill="#0a80f8"/>
<rect x="1252.4" y="143.3" width="2.0" height="18.6" fill="#0a80f8"/>
<rect x="1254.0" y="165.3" width="3.2" height="1.7" fill="#f2e88a"/>
<rect x="1255.6" y="163.1" width="3.2" height="1.7" fill="#f2e88a"/>
<rect x="1257.2" y="161.4" width="2.0" height="5.5" fill="#ff0000"/>
<rect x="1258.8" y="154.0" width="2.0" height="9.4" fill="#ff0000"/>
<rect x="1260.4" y="144.2" width="2.0" height="11.8" fill="#ff0000"/>
<rect x="1262.0" y="145.5" width="3.2" height="1.7" fill="#f2e88a"/>
<rect x="1263.6" y="146.3" width="2.0" height="14.4" fill="#0a80f8"/>
<rect x="1265.2" y="156.7" width="2.0" height="5.0" fill="#0a80f8"/>
<rect x="1266.8" y="161.8" width="3.2" height="1.7" fill="#f2e88a"/>
<rect x="1268.4" y="155.1" width="2.0" height="7.6" fill="#ff0000"/>
<rect x="1270.0" y="153.1" width="2.0" height="8.4" fill="#0a80f8"/>
<rect x="1271.6" y="160.3" width="2.0" height="1.7" fill="#ff0000"/>
<rect x="1273.2" y="147.0" width="2.0" height="13.3" fill="#ff0000"/>
<rect x="1274.8" y="146.8" width="2.0" height="4.2" fill="#ff0000"/>
<rect x="1276.4" y="146.1" width="3.2" height="1.7" fill="#f2e88a"/>
<rect x="1278.0" y="148.2" width="3.2" height="1.7" fill="#f2e88a"/>
<rect x="1279.6" y="147.6" width="1.6" height="1.7" fill="#f2e88a"/>
<rect x="1281.2" y="147.4" width="2.0" height="5.6" fill="#0a80f8"/>
<rect x="1282.8" y="148.8" width="3.2" height="1.7" fill="#f2e88a"/>
<rect x="1284.4" y="145.9" width="3.2" height="1.7" fill="#f2e88a"/>
<rect x="1286.0" y="146.8" width="2.0" height="4.5" fill="#0a80f8"/>
<rect x="1287.6" y="150.2" width="2.0" height="3.3" fill="#0a80f8"/>
<rect x="1289.2" y="142.8" width="2.0" height="10.7" fill="#ff0000"/>
<rect x="1290.8" y="145.2" width="3.2" height="1.7" fill="#f2e88a"/>
<rect x="1292.4" y="145.2" width="4.8" height="1.7" fill="#f2e88a"/>
<rect x="1294.0" y="133.4" width="3.2" height="1.7" fill="#f2e88a"/>
<rect x="1295.6" y="124.7" width="2.0" height="11.6" fill="#ff0000"/>
<rect x="1297.2" y="101.3" width="2.0" height="24.3" fill="#ff0000"/>
<rect x="1298.8" y="98.3" width="2.0" height="7.1" fill="#0a80f8"/>
<rect x="1300.4" y="105.4" width="2.0" height="4.3" fill="#0a80f8"/>
<rect x="1302.0" y="106.7" width="2.0" height="20.4" fill="#0a80f8"/>
<rect x="1303.6" y="119.4" width="2.0" height="7.7" fill="#ff0000"/>
<rect x="1305.2" y="118.4" width="2.0" height="10.2" fill="#0a80f8"/>
<rect x="1306.8" y="121.5" width="2.0" height="9.1" fill="#ff0000"/>
<rect x="1308.4" y="116.6" width="2.0" height="9.9" fill="#ff0000"/>
<rect x="1310.0" y="119.6" width="2.0" height="3.9" fill="#0a80f8"/>
<rect x="1311.6" y="119.2" width="2.0" height="2.3" fill="#ff0000"/>
<rect x="1313.2" y="114.6" width="3.2" height="1.7" fill="#f2e88a"/>
<rect x="1314.8" y="112.5" width="4.8" height="1.7" fill="#f2e88a"/>
<rect x="1316.4" y="105.8" width="3.2" height="1.7" fill="#f2e88a"/>
<rect x="1318.0" y="92.1" width="2.0" height="15.6" fill="#ff0000"/>
<rect x="1319.6" y="89.1" width="2.0" height="13.0" fill="#0a80f8"/>
<rect x="1321.2" y="101.1" width="2.0" height="2.6" fill="#0a80f8"/>
<rect x="1322.8" y="103.7" width="2.0" height="14.2" fill="#0a80f8"/>
<rect x="1324.4" y="103.3" width="2.0" height="14.6" fill="#ff0000"/>
<rect x="1326.0" y="106.3" width="2.0" height="16.3" fill="#0a80f8"/>
<rect x="1327.6" y="121.6" width="2.0" height="8.2" fill="#0a80f8"/>
<rect x="1329.2" y="122.7" width="2.0" height="6.1" fill="#ff0000"/>
<rect x="1330.8" y="118.9" width="2.0" height="3.8" fill="#ff0000"/>
<rect x="1332.4" y="117.8" width="1.6" height="1.7" fill="#f2e88a"/>
<rect x="1334.0" y="117.9" width="3.2" height="1.7" fill="#f2e88a"/>
<rect x="1335.6" y="116.7" width="2.0" height="19.7" fill="#0a80f8"/>
<rect x="1337.2" y="131.4" width="2.0" height="7.5" fill="#0a80f8"/>
<rect x="1338.8" y="128.9" width="3.2" height="1.7" fill="#f2e88a"/>
<rect x="1340.4" y="128.2" width="3.2" height="1.7" fill="#f2e88a"/>
<rect x="1342.0" y="129.0" width="2.0" height="17.2" fill="#0a80f8"/>
<rect x="1343.6" y="145.3" width="2.0" height="2.6" fill="#0a80f8"/>
<rect x="1345.2" y="148.7" width="1.6" height="1.7" fill="#f2e88a"/>
<rect x="1346.8" y="152.4" width="3.2" height="1.7" fill="#f2e88a"/>
<rect x="1348.4" y="151.2" width="2.0" height="5.0" fill="#0a80f8"/>
<rect x="1350.0" y="154.7" width="2.0" height="3.5" fill="#ff0000"/>
<rect x="1351.6" y="152.7" width="2.0" height="10.6" fill="#0a80f8"/>
<rect x="1353.2" y="156.3" width="2.0" height="8.0" fill="#ff0000"/>
<rect x="1354.8" y="151.9" width="3.2" height="1.7" fill="#f2e88a"/>
<rect x="1356.4" y="145.2" width="2.0" height="9.5" fill="#ff0000"/>
<rect x="1358.0" y="140.9" width="2.0" height="9.3" fill="#ff0000"/>
<rect x="1359.6" y="137.8" width="2.0" height="5.1" fill="#ff0000"/>
<rect x="1361.2" y="129.3" width="2.0" height="12.5" fill="#ff0000"/>
<rect x="1362.8" y="129.3" width="2.0" height="8.0" fill="#0a80f8"/>
<rect x="1364.4" y="130.5" width="2.0" height="6.8" fill="#ff0000"/>
<rect x="1366.0" y="131.7" width="3.2" height="1.7" fill="#f2e88a"/>
<rect x="1367.6" y="132.2" width="3.2" height="1.7" fill="#f2e88a"/>
<rect x="1369.2" y="134.1" width="3.2" height="1.7" fill="#f2e88a"/>
<rect x="1370.8" y="133.7" width="4.8" height="1.7" fill="#f2e88a"/>
<rect x="1372.4" y="134.6" width="2.0" height="7.8" fill="#0a80f8"/>
<rect x="1374.0" y="141.4" width="2.0" height="3.1" fill="#0a80f8"/>
<rect x="1375.6" y="141.5" width="2.0" height="7.2" fill="#0a80f8"/>
<rect x="1377.2" y="145.9" width="3.2" height="1.7" fill="#f2e88a"/>
<rect x="1378.8" y="146.7" width="2.0" height="6.4" fill="#0a80f8"/>
<rect x="1380.4" y="152.4" width="3.2" height="1.7" fill="#f2e88a"/>
<rect x="1382.0" y="149.6" width="2.0" height="3.7" fill="#ff0000"/>
<rect x="1383.6" y="148.6" width="2.0" height="10.1" fill="#0a80f8"/>
<rect x="1385.2" y="158.7" width="2.0" height="4.2" fill="#0a80f8"/>
<rect x="1386.8" y="154.4" width="2.0" height="6.4" fill="#ff0000"/>
<rect x="1388.4" y="152.4" width="2.0" height="6.7" fill="#0a80f8"/>
<rect x="1390.0" y="159.1" width="2.0" height="9.0" fill="#0a80f8"/>
<rect x="1391.6" y="169.3" width="4.8" height="1.7" fill="#f2e88a"/>
<rect x="1393.2" y="166.1" width="2.0" height="6.1" fill="#ff0000"/>
<rect x="1394.8" y="164.6" width="3.2" height="1.7" fill="#f2e88a"/>
<rect x="1396.4" y="164.1" width="2.0" height="3.3" fill="#ff0000"/>
<rect x="1398.0" y="163.2" width="3.2" height="1.7" fill="#f2e88a"/>
<rect x="1399.6" y="164.0" width="2.0" height="4.9" fill="#0a80f8"/>
<rect x="1401.2" y="165.1" width="4.8" height="1.7" fill="#f2e88a"/>
<rect x="1402.8" y="163.9" width="3.2" height="1.7" fill="#f2e88a"/>
<rect x="1404.4" y="161.3" width="2.0" height="6.5" fill="#ff0000"/>
<rect x="1406.0" y="160.3" width="1.6" height="1.7" fill="#f2e88a"/>
<rect x="1407.6" y="160.1" width="3.2" height="1.7" fill="#f2e88a"/>
<rect x="1409.2" y="158.9" width="2.0" height="8.5" fill="#0a80f8"/>
<rect x="1410.8" y="164.4" width="2.0" height="6.2" fill="#0a80f8"/>
<rect x="1412.4" y="167.6" width="2.0" height="4.0" fill="#ff0000"/>
<rect x="1414.0" y="166.0" width="2.0" height="2.6" fill="#ff0000"/>
<rect x="1415.6" y="162.5" width="2.0" height="4.4" fill="#ff0000"/>
<rect x="1417.2" y="169.5" width="4.8" height="1.7" fill="#f2e88a"/>
<rect x="1418.8" y="170.3" width="2.0" height="6.0" fill="#0a80f8"/>
<rect x="1420.4" y="174.1" width="4.8" height="1.7" fill="#f2e88a"/>
<rect x="1422.0" y="173.9" width="2.0" height="10.4" fill="#0a80f8"/>
<rect x="1423.6" y="179.3" width="2.0" height="13.7" fill="#0a80f8"/>
<rect x="1425.2" y="189.9" width="2.0" height="2.2" fill="#ff0000"/>
<rect x="1426.8" y="187.9" width="2.0" height="16.7" fill="#0a80f8"/>
<rect x="1428.4" y="205.5" width="1.6" height="1.7" fill="#f2e88a"/>
<rect x="1430.0" y="203.0" width="2.0" height="5.3" fill="#ff0000"/>
<rect x="1431.6" y="198.4" width="2.0" height="5.6" fill="#ff0000"/>
<rect x="1433.2" y="198.0" width="3.2" height="1.7" fill="#f2e88a"/>
<rect x="1434.8" y="196.3" width="4.8" height="1.7" fill="#f2e88a"/>
<rect x="1436.4" y="193.5" width="2.0" height="6.7" fill="#ff0000"/>
<rect x="1438.0" y="193.5" width="2.0" height="3.3" fill="#0a80f8"/>
<rect x="1439.6" y="195.0" width="2.0" height="2.8" fill="#ff0000"/>
<rect x="1441.2" y="193.0" width="2.0" height="19.2" fill="#0a80f8"/>
<rect x="1442.8" y="198.4" width="2.0" height="13.8" fill="#ff0000"/>
<rect x="1444.4" y="198.4" width="2.0" height="18.6" fill="#0a80f8"/>
<rect x="1446.0" y="215.1" width="2.0" height="7.2" fill="#0a80f8"/>
<rect x="1447.6" y="216.3" width="2.0" height="14.7" fill="#0a80f8"/>
<rect x="1449.2" y="225.1" width="4.8" height="1.7" fill="#f2e88a"/>
<rect x="1450.8" y="225.9" width="2.0" height="11.1" fill="#0a80f8"/>
<rect x="1452.4" y="235.2" width="4.8" height="1.7" fill="#f2e88a"/>
<rect x="1454.0" y="229.6" width="2.0" height="7.5" fill="#ff0000"/>
<rect x="1455.6" y="230.6" width="2.0" height="11.7" fill="#0a80f8"/>
<rect x="1457.2" y="241.2" width="2.0" height="12.8" fill="#0a80f8"/>
<rect x="1458.8" y="252.0" width="2.0" height="9.1" fill="#0a80f8"/>
<rect x="1460.4" y="251.5" width="2.0" height="8.6" fill="#ff0000"/>
<rect x="1462.0" y="254.5" width="2.0" height="4.0" fill="#0a80f8"/>
<rect x="1463.6" y="257.5" width="2.0" height="3.1" fill="#0a80f8"/>
<rect x="1465.2" y="249.6" width="2.0" height="13.1" fill="#ff0000"/>
<rect x="1466.8" y="245.1" width="3.2" height="1.7" fill="#f2e88a"/>
<rect x="1468.4" y="235.2" width="2.0" height="10.7" fill="#ff0000"/>
<rect x="1470.0" y="238.2" width="2.0" height="4.3" fill="#0a80f8"/>
<rect x="1471.6" y="238.5" width="2.0" height="3.0" fill="#ff0000"/>
<rect x="1473.2" y="239.5" width="2.0" height="11.3" fill="#0a80f8"/>
<rect x="1474.8" y="235.6" width="2.0" height="15.2" fill="#ff0000"/>
<rect x="1476.4" y="237.6" width="2.0" height="12.7" fill="#0a80f8"/>
<rect x="1478.0" y="248.4" width="3.2" height="1.7" fill="#f2e88a"/>
<rect x="1479.6" y="254.0" width="4.8" height="1.7" fill="#f2e88a"/>
<rect x="1481.2" y="253.8" width="2.0" height="14.4" fill="#0a80f8"/>
<rect x="1482.8" y="264.9" width="3.2" height="1.7" fill="#f2e88a"/>
<rect x="1484.4" y="265.8" width="2.0" height="8.8" fill="#0a80f8"/>
<rect x="1486.0" y="265.5" width="2.0" height="10.1" fill="#ff0000"/>
<rect x="1487.6" y="265.1" width="3.2" height="1.7" fill="#f2e88a"/>
<rect x="1489.2" y="264.0" width="2.0" height="3.2" fill="#0a80f8"/>
<rect x="1490.8" y="263.4" width="1.6" height="1.7" fill="#f2e88a"/>
<rect x="1492.4" y="245.3" width="2.0" height="19.0" fill="#ff0000"/>
<rect x="1494.0" y="249.1" width="1.6" height="1.7" fill="#f2e88a"/>
<rect x="1495.6" y="249.3" width="1.6" height="1.7" fill="#f2e88a"/>
<rect x="1497.2" y="248.1" width="2.0" height="22.7" fill="#0a80f8"/>
<rect x="1498.8" y="270.6" width="3.2" height="1.7" fill="#f2e88a"/>
<rect x="1500.4" y="276.5" width="3.2" height="1.7" fill="#f2e88a"/>
<rect x="1502.0" y="275.3" width="2.0" height="10.3" fill="#0a80f8"/>
<rect x="1503.6" y="278.1" width="2.0" height="9.4" fill="#ff0000"/>
<rect x="1505.2" y="277.2" width="3.2" height="1.7" fill="#f2e88a"/>
<rect x="1506.8" y="276.8" width="4.8" height="1.7" fill="#f2e88a"/>
<rect x="1508.4" y="273.8" width="2.0" height="3.8" fill="#ff0000"/>
<rect x="1510.0" y="274.9" width="3.2" height="1.7" fill="#f2e88a"/>
<rect x="1511.6" y="270.6" width="2.0" height="5.2" fill="#ff0000"/>
<rect x="1513.2" y="270.2" width="3.2" height="1.7" fill="#f2e88a"/>
<rect x="1514.8" y="271.8" width="3.2" height="1.7" fill="#f2e88a"/>
<rect x="1516.4" y="272.6" width="2.0" height="5.6" fill="#0a80f8"/>
<rect x="1518.0" y="273.8" width="3.2" height="1.7" fill="#f2e88a"/>
<rect x="1519.6" y="273.5" width="2.0" height="1.7" fill="#ff0000"/>
<rect x="1521.2" y="270.9" width="2.0" height="2.6" fill="#ff0000"/>
<rect x="1522.8" y="272.4" width="1.6" height="1.7" fill="#f2e88a"/>
<rect x="1524.4" y="271.0" width="2.0" height="5.2" fill="#ff0000"/>
<rect x="1526.0" y="268.0" width="2.0" height="7.4" fill="#0a80f8"/>
<rect x="1527.6" y="272.4" width="2.0" height="5.1" fill="#ff0000"/>
<rect x="1529.2" y="272.3" width="3.2" height="1.7" fill="#f2e88a"/>
<rect x="1530.8" y="272.3" width="4.8" height="1.7" fill="#f2e88a"/>
<rect x="1532.4" y="262.6" width="2.0" height="10.5" fill="#ff0000"/>
<rect x="1534.0" y="264.6" width="2.0" height="11.6" fill="#0a80f8"/>
<rect x="1535.6" y="276.1" width="2.0" height="6.4" fill="#0a80f8"/>
<rect x="1537.2" y="280.3" width="2.0" height="4.2" fill="#ff0000"/>
<rect x="1538.8" y="280.3" width="2.0" height="8.6" fill="#0a80f8"/>
<rect x="1540.4" y="279.6" width="2.0" height="9.3" fill="#ff0000"/>
<rect x="1542.0" y="279.6" width="2.0" height="16.3" fill="#0a80f8"/>
<rect x="1543.6" y="292.9" width="2.0" height="4.6" fill="#0a80f8"/>
<rect x="1545.2" y="299.2" width="3.2" height="1.7" fill="#f2e88a"/>
<rect x="1546.8" y="300.1" width="2.0" height="8.2" fill="#0a80f8"/>
<rect x="1548.4" y="304.3" width="2.0" height="6.3" fill="#0a80f8"/>
<rect x="1550.0" y="306.3" width="2.0" height="5.3" fill="#ff0000"/>
<rect x="1551.6" y="285.6" width="2.0" height="23.7" fill="#ff0000"/>
<rect x="1553.2" y="286.6" width="2.0" height="6.7" fill="#0a80f8"/>
<rect x="1554.8" y="269.1" width="2.0" height="25.2" fill="#ff0000"/>
<rect x="1556.4" y="272.1" width="2.0" height="11.6" fill="#0a80f8"/>
<rect x="1558.0" y="280.0" width="3.2" height="1.7" fill="#f2e88a"/>
<rect x="1559.6" y="275.1" width="1.6" height="1.7" fill="#f2e88a"/>
<rect x="1561.2" y="273.0" width="2.0" height="6.0" fill="#0a80f8"/>
<rect x="1562.8" y="274.8" width="2.0" height="4.2" fill="#ff0000"/>
<rect x="1564.4" y="264.6" width="2.0" height="12.2" fill="#ff0000"/>
<rect x="1566.0" y="266.8" width="4.8" height="1.7" fill="#f2e88a"/>
<rect x="1567.6" y="266.7" width="3.2" height="1.7" fill="#f2e88a"/>
<rect x="1569.2" y="266.7" width="3.2" height="1.7" fill="#f2e88a"/>
<rect x="1570.8" y="266.6" width="2.0" height="6.3" fill="#0a80f8"/>
<rect x="1572.4" y="268.2" width="2.0" height="4.7" fill="#ff0000"/>
<rect x="1574.0" y="259.5" width="1.6" height="1.7" fill="#f2e88a"/>
<rect x="1575.6" y="258.2" width="1.6" height="1.7" fill="#f2e88a"/>
<rect x="1577.2" y="256.6" width="2.0" height="4.4" fill="#ff0000"/>
<rect x="1578.8" y="247.6" width="2.0" height="10.0" fill="#ff0000"/>
<rect x="1580.4" y="249.3" width="1.6" height="1.7" fill="#f2e88a"/>
<rect x="1582.0" y="251.2" width="3.2" height="1.7" fill="#f2e88a"/>
<rect x="1583.6" y="249.3" width="3.2" height="1.7" fill="#f2e88a"/>
<rect x="1585.2" y="252.1" width="1.6" height="1.7" fill="#f2e88a"/>
<rect x="1586.8" y="254.4" width="3.2" height="1.7" fill="#f2e88a"/>
<rect x="1588.4" y="255.2" width="1.6" height="1.7" fill="#f2e88a"/>
<rect x="1590.0" y="257.0" width="1.6" height="1.7" fill="#f2e88a"/>
<rect x="1591.6" y="257.2" width="1.6" height="1.7" fill="#f2e88a"/>
<rect x="1593.2" y="256.7" width="3.2" height="1.7" fill="#f2e88a"/>
<rect x="1594.8" y="257.6" width="2.0" height="5.3" fill="#0a80f8"/>
<rect x="1596.4" y="259.7" width="3.2" height="1.7" fill="#f2e88a"/>
<rect x="1598.0" y="258.5" width="3.2" height="1.7" fill="#f2e88a"/>
<rect x="1599.6" y="255.2" width="2.0" height="4.2" fill="#ff0000"/>
<rect x="1601.2" y="255.2" width="2.0" height="6.3" fill="#0a80f8"/>
<rect x="1602.8" y="255.3" width="4.8" height="1.7" fill="#f2e88a"/>
<rect x="1604.4" y="255.8" width="1.6" height="1.7" fill="#f2e88a"/>
<rect x="1606.0" y="253.8" width="4.8" height="1.7" fill="#f2e88a"/>
<rect x="1607.6" y="248.1" width="2.0" height="6.5" fill="#ff0000"/>
<rect x="1609.2" y="248.3" width="3.2" height="1.7" fill="#f2e88a"/>
<rect x="1610.8" y="248.1" width="3.2" height="1.7" fill="#f2e88a"/>
<rect x="1612.4" y="248.2" width="3.2" height="1.7" fill="#f2e88a"/>
<rect x="1614.0" y="245.7" width="2.0" height="3.4" fill="#ff0000"/>
<rect x="1615.6" y="245.6" width="3.2" height="1.7" fill="#f2e88a"/>
<rect x="1617.2" y="247.1" width="4.8" height="1.7" fill="#f2e88a"/>
<rect x="1618.8" y="247.3" width="4.8" height="1.7" fill="#f2e88a"/>
<rect x="1620.4" y="247.2" width="2.0" height="6.6" fill="#0a80f8"/>
<rect x="1622.0" y="249.6" width="2.0" height="6.2" fill="#ff0000"/>
<rect x="1623.6" y="250.4" width="1.6" height="1.7" fill="#f2e88a"/>
<rect x="1625.2" y="252.5" width="3.2" height="1.7" fill="#f2e88a"/>
<rect x="1626.8" y="254.5" width="3.2" height="1.7" fill="#f2e88a"/>
<rect x="1628.4" y="252.9" width="2.0" height="3.4" fill="#ff0000"/>
<rect x="1630.0" y="252.9" width="2.0" height="8.2" fill="#0a80f8"/>
<rect x="1631.6" y="256.8" width="4.8" height="1.7" fill="#f2e88a"/>
<rect x="1633.2" y="256.1" width="2.0" height="1.7" fill="#ff0000"/>
<rect x="1634.8" y="256.1" width="1.6" height="1.7" fill="#f2e88a"/>
<rect x="1636.4" y="257.3" width="4.8" height="1.7" fill="#f2e88a"/>
<rect x="1638.0" y="257.5" width="4.8" height="1.7" fill="#f2e88a"/>
<rect x="1639.6" y="258.4" width="2.0" height="6.1" fill="#0a80f8"/>
<rect x="1641.2" y="256.0" width="2.0" height="7.5" fill="#ff0000"/>
<rect x="1642.8" y="252.1" width="2.0" height="7.0" fill="#ff0000"/>
<rect x="1644.4" y="252.1" width="2.0" height="1.9" fill="#0a80f8"/>
<rect x="1646.0" y="250.9" width="2.0" height="7.1" fill="#0a80f8"/>
<rect x="1647.6" y="253.9" width="2.0" height="2.0" fill="#ff0000"/>
<rect x="1649.2" y="253.8" width="3.2" height="1.7" fill="#f2e88a"/>
<rect x="1650.8" y="251.4" width="3.2" height="1.7" fill="#f2e88a"/>
<rect x="1652.4" y="244.8" width="2.0" height="8.5" fill="#ff0000"/>
<rect x="1654.0" y="245.8" width="2.0" height="6.7" fill="#0a80f8"/>
<rect x="1655.6" y="240.7" width="2.0" height="10.8" fill="#ff0000"/>
<rect x="1657.2" y="239.1" width="3.2" height="1.7" fill="#f2e88a"/>
<rect x="1658.8" y="236.9" width="2.0" height="7.8" fill="#0a80f8"/>
<rect x="1660.4" y="234.5" width="2.0" height="8.3" fill="#ff0000"/>
<rect x="1662.0" y="239.8" width="1.6" height="1.7" fill="#f2e88a"/>
<rect x="1663.6" y="239.4" width="4.8" height="1.7" fill="#f2e88a"/>
<rect x="1665.2" y="236.8" width="3.2" height="1.7" fill="#f2e88a"/>
<rect x="1666.8" y="235.7" width="2.0" height="1.9" fill="#ff0000"/>
<rect x="1668.4" y="235.7" width="2.0" height="6.4" fill="#0a80f8"/>
<rect x="1670.0" y="239.6" width="3.2" height="1.7" fill="#f2e88a"/>
<rect x="1671.6" y="238.4" width="2.0" height="4.5" fill="#0a80f8"/>
<rect x="1673.2" y="243.0" width="2.0" height="10.2" fill="#0a80f8"/>
<rect x="1674.8" y="244.4" width="2.0" height="9.8" fill="#ff0000"/>
<rect x="1676.4" y="245.6" width="3.2" height="1.7" fill="#f2e88a"/>
<rect x="1678.0" y="244.5" width="2.0" height="17.9" fill="#0a80f8"/>
<rect x="1679.6" y="246.7" width="2.0" height="15.7" fill="#ff0000"/>
<rect x="1681.2" y="244.9" width="2.0" height="2.8" fill="#ff0000"/>
<rect x="1682.8" y="245.4" width="3.2" height="1.7" fill="#f2e88a"/>
<rect x="1684.4" y="234.2" width="2.0" height="15.1" fill="#ff0000"/>
<rect x="1686.0" y="234.5" width="3.2" height="1.7" fill="#f2e88a"/>
<rect x="1687.6" y="231.3" width="2.0" height="4.0" fill="#ff0000"/>
<rect x="1689.2" y="228.3" width="2.0" height="7.0" fill="#0a80f8"/>
<rect x="1690.8" y="229.8" width="2.0" height="6.6" fill="#ff0000"/>
<rect x="1692.4" y="231.6" width="3.2" height="1.7" fill="#f2e88a"/>
<rect x="1694.0" y="232.0" width="3.2" height="1.7" fill="#f2e88a"/>
<rect x="1695.6" y="232.9" width="2.0" height="3.0" fill="#0a80f8"/>
<rect x="1697.2" y="233.5" width="3.2" height="1.7" fill="#f2e88a"/>
<rect x="1698.8" y="234.0" width="3.2" height="1.7" fill="#f2e88a"/>
<rect x="1700.4" y="233.8" width="2.0" height="6.5" fill="#0a80f8"/>
<rect x="1702.0" y="237.7" width="1.6" height="1.7" fill="#f2e88a"/>
<rect x="1703.6" y="238.6" width="2.0" height="3.6" fill="#0a80f8"/>
<rect x="1705.2" y="244.4" width="1.6" height="1.7" fill="#f2e88a"/>
<rect x="1706.8" y="244.2" width="2.0" height="15.7" fill="#0a80f8"/>
<rect x="1708.4" y="253.7" width="2.0" height="6.2" fill="#ff0000"/>
<rect x="1710.0" y="251.7" width="2.0" height="11.6" fill="#0a80f8"/>
<rect x="1711.6" y="261.4" width="2.0" height="6.5" fill="#0a80f8"/>
<rect x="1713.2" y="264.3" width="4.8" height="1.7" fill="#f2e88a"/>
<rect x="1714.8" y="262.1" width="2.0" height="11.0" fill="#0a80f8"/>
<rect x="1716.4" y="272.2" width="2.0" height="17.3" fill="#0a80f8"/>
<rect x="1718.0" y="283.5" width="2.0" height="7.3" fill="#0a80f8"/>
<rect x="1719.6" y="289.8" width="2.0" height="25.6" fill="#0a80f8"/>
<rect x="1721.2" y="314.6" width="3.2" height="1.7" fill="#f2e88a"/>
<rect x="1722.8" y="314.5" width="2.0" height="28.7" fill="#0a80f8"/>
<rect x="1724.4" y="342.5" width="3.2" height="1.7" fill="#f2e88a"/>
<rect x="1726.0" y="341.3" width="2.0" height="2.1" fill="#ff0000"/>
<rect x="1727.6" y="341.3" width="2.0" height="7.7" fill="#0a80f8"/>
<rect x="1729.2" y="324.0" width="2.0" height="26.1" fill="#ff0000"/>
<rect x="1730.8" y="324.0" width="1.6" height="1.7" fill="#f2e88a"/>
<rect x="1732.4" y="323.1" width="2.0" height="2.8" fill="#ff0000"/>
<rect x="1734.0" y="319.8" width="2.0" height="5.4" fill="#ff0000"/>
<rect x="1735.6" y="316.2" width="2.0" height="8.6" fill="#ff0000"/>
<rect x="1737.2" y="307.9" width="3.2" height="1.7" fill="#f2e88a"/>
<rect x="1738.8" y="294.8" width="2.0" height="14.0" fill="#ff0000"/>
<rect x="1740.4" y="294.3" width="1.6" height="1.7" fill="#f2e88a"/>
<rect x="1742.0" y="292.1" width="2.0" height="12.1" fill="#0a80f8"/>
<rect x="1743.6" y="297.8" width="2.0" height="6.5" fill="#ff0000"/>
<rect x="1745.2" y="300.5" width="1.6" height="1.7" fill="#f2e88a"/>
<rect x="1746.8" y="298.3" width="2.0" height="20.0" fill="#0a80f8"/>
<rect x="1748.4" y="305.2" width="2.0" height="12.1" fill="#ff0000"/>
<rect x="1750.0" y="304.2" width="2.0" height="4.9" fill="#0a80f8"/>
<rect x="1751.6" y="302.2" width="2.0" height="8.8" fill="#ff0000"/>
<rect x="1753.2" y="300.8" width="2.0" height="5.5" fill="#ff0000"/>
<rect x="1754.8" y="304.7" width="3.2" height="1.7" fill="#f2e88a"/>
<rect x="1756.4" y="302.6" width="2.0" height="8.1" fill="#0a80f8"/>
<rect x="1758.0" y="306.4" width="2.0" height="6.3" fill="#ff0000"/>
<rect x="1759.6" y="295.2" width="2.0" height="11.3" fill="#ff0000"/>
<rect x="1761.2" y="297.4" width="3.2" height="1.7" fill="#f2e88a"/>
<rect x="1762.8" y="294.0" width="2.0" height="4.3" fill="#ff0000"/>
<rect x="1764.4" y="296.0" width="2.0" height="5.0" fill="#0a80f8"/>
<rect x="1766.0" y="294.8" width="2.0" height="7.2" fill="#ff0000"/>
<rect x="1767.6" y="287.9" width="4.8" height="1.7" fill="#f2e88a"/>
<rect x="1769.2" y="285.1" width="2.0" height="3.6" fill="#ff0000"/>
<rect x="1770.8" y="284.3" width="3.2" height="1.7" fill="#f2e88a"/>
<rect x="1772.4" y="275.9" width="2.0" height="11.2" fill="#ff0000"/>
<rect x="1774.0" y="275.0" width="2.0" height="2.9" fill="#ff0000"/>
<rect x="1775.6" y="271.5" width="2.0" height="7.5" fill="#ff0000"/>
<rect x="1777.2" y="268.5" width="2.0" height="10.9" fill="#0a80f8"/>
<rect x="1778.8" y="277.4" width="2.0" height="6.7" fill="#0a80f8"/>
<rect x="1780.4" y="280.3" width="1.6" height="1.7" fill="#f2e88a"/>
<rect x="1782.0" y="278.2" width="2.0" height="4.6" fill="#0a80f8"/>
<rect x="1783.6" y="274.0" width="2.0" height="9.7" fill="#ff0000"/>
<rect x="1785.2" y="273.0" width="2.0" height="6.1" fill="#0a80f8"/>
<rect x="1786.8" y="267.2" width="2.0" height="12.9" fill="#ff0000"/>
<rect x="1788.4" y="265.2" width="2.0" height="11.4" fill="#0a80f8"/>
<rect x="1790.0" y="266.6" width="2.0" height="10.0" fill="#ff0000"/>
<rect x="1791.6" y="266.6" width="2.0" height="7.5" fill="#0a80f8"/>
<rect x="1793.2" y="271.1" width="2.0" height="8.4" fill="#0a80f8"/>
<rect x="1794.8" y="274.5" width="2.0" height="27.1" fill="#0a80f8"/>
<rect x="1796.4" y="283.9" width="2.0" height="16.7" fill="#ff0000"/>
<rect x="1798.0" y="283.9" width="2.0" height="6.3" fill="#0a80f8"/>
<rect x="1799.6" y="287.2" width="2.0" height="5.2" fill="#0a80f8"/>
<rect x="1801.2" y="289.3" width="2.0" height="6.5" fill="#0a80f8"/>
<rect x="1802.8" y="287.7" width="2.0" height="7.2" fill="#ff0000"/>
<rect x="1804.4" y="290.7" width="2.0" height="1.7" fill="#0a80f8"/>
<rect x="1806.0" y="287.5" width="2.0" height="5.3" fill="#ff0000"/>
<rect x="1807.6" y="286.7" width="3.2" height="1.7" fill="#f2e88a"/>
<rect x="1809.2" y="286.4" width="3.2" height="1.7" fill="#f2e88a"/>
<rect x="1810.8" y="281.6" width="2.0" height="5.7" fill="#ff0000"/>
<rect x="1812.4" y="285.2" width="4.8" height="1.7" fill="#f2e88a"/>
<rect x="1814.0" y="285.4" width="1.6" height="1.7" fill="#f2e88a"/>
<rect x="1815.6" y="285.4" width="3.2" height="1.7" fill="#f2e88a"/>
<rect x="1817.2" y="283.3" width="2.0" height="13.9" fill="#0a80f8"/>
<rect x="1818.8" y="290.2" width="2.0" height="6.0" fill="#ff0000"/>
<rect x="1820.4" y="294.2" width="4.8" height="1.7" fill="#f2e88a"/>
<rect x="1822.0" y="293.0" width="2.0" height="8.3" fill="#0a80f8"/>
<rect x="1823.6" y="292.4" width="2.0" height="5.9" fill="#ff0000"/>
<rect x="1825.2" y="291.4" width="2.0" height="13.3" fill="#0a80f8"/>
<rect x="1826.8" y="295.0" width="2.0" height="7.7" fill="#ff0000"/>
<rect x="1828.4" y="296.0" width="2.0" height="12.7" fill="#0a80f8"/>
<rect x="1830.0" y="300.3" width="2.0" height="5.4" fill="#ff0000"/>
<rect x="1831.6" y="299.1" width="3.2" height="1.7" fill="#f2e88a"/>
<rect x="1833.2" y="293.0" width="2.0" height="9.0" fill="#ff0000"/>
<rect x="1834.8" y="294.0" width="2.0" height="6.3" fill="#0a80f8"/>
<rect x="1836.4" y="294.9" width="2.0" height="4.4" fill="#ff0000"/>
<rect x="1838.0" y="293.9" width="2.0" height="6.2" fill="#0a80f8"/>
<rect x="1839.6" y="290.7" width="2.0" height="10.5" fill="#ff0000"/>
<rect x="1841.2" y="291.4" width="4.8" height="1.7" fill="#f2e88a"/>
<rect x="1842.8" y="286.8" width="2.0" height="7.4" fill="#ff0000"/>
<rect x="1844.4" y="288.8" width="2.0" height="1.9" fill="#0a80f8"/>
<rect x="1846.0" y="289.7" width="4.8" height="1.7" fill="#f2e88a"/>
<rect x="1847.6" y="289.9" width="3.2" height="1.7" fill="#f2e88a"/>
<rect x="1849.2" y="288.5" width="4.8" height="1.7" fill="#f2e88a"/>
<rect x="1850.8" y="288.5" width="3.2" height="1.7" fill="#f2e88a"/>
<rect x="1852.4" y="288.9" width="1.6" height="1.7" fill="#f2e88a"/>
<rect x="1854.0" y="288.3" width="3.2" height="1.7" fill="#f2e88a"/>
<rect x="1855.6" y="287.3" width="3.2" height="1.7" fill="#f2e88a"/>
<rect x="1857.2" y="288.0" width="4.8" height="1.7" fill="#f2e88a"/>
<rect x="1858.8" y="288.8" width="2.0" height="2.2" fill="#0a80f8"/>
<rect x="1860.4" y="287.0" width="2.0" height="5.1" fill="#0a80f8"/>
<rect x="1862.0" y="288.9" width="2.0" height="5.1" fill="#ff0000"/>
<rect x="1863.6" y="287.4" width="3.2" height="1.7" fill="#f2e88a"/>
<rect x="1865.2" y="288.0" width="3.2" height="1.7" fill="#f2e88a"/>
<rect x="1866.8" y="288.8" width="2.0" height="1.7" fill="#0a80f8"/>
<rect x="1868.4" y="290.9" width="3.2" height="1.7" fill="#f2e88a"/>
<rect x="1870.0" y="289.8" width="2.0" height="5.6" fill="#0a80f8"/>
<rect x="1871.6" y="288.0" width="2.0" height="5.4" fill="#ff0000"/>
<rect x="1873.2" y="293.4" width="1.6" height="1.7" fill="#f2e88a"/>
<rect x="1874.8" y="286.1" width="2.0" height="8.2" fill="#ff0000"/>
<rect x="1876.4" y="286.6" width="3.2" height="1.7" fill="#f2e88a"/>
<rect x="1878.0" y="285.5" width="2.0" height="5.5" fill="#0a80f8"/>
<rect x="1879.6" y="284.0" width="2.0" height="6.0" fill="#ff0000"/>
<rect x="1881.2" y="278.8" width="2.0" height="7.2" fill="#ff0000"/>
<rect x="1882.8" y="279.8" width="4.8" height="1.7" fill="#f2e88a"/>
<rect x="1884.4" y="280.1" width="1.6" height="1.7" fill="#f2e88a"/>
<rect x="1886.0" y="276.9" width="2.0" height="6.0" fill="#ff0000"/>
<rect x="1887.6" y="276.8" width="1.6" height="1.7" fill="#f2e88a"/>
<rect x="1889.2" y="279.5" width="3.2" height="1.7" fill="#f2e88a"/>
<rect x="1890.8" y="267.7" width="2.0" height="15.7" fill="#ff0000"/>
<rect x="1892.4" y="264.7" width="2.0" height="9.0" fill="#ff0000"/>
<rect x="1894.0" y="243.2" width="2.0" height="24.5" fill="#ff0000"/>
<rect x="1895.6" y="243.2" width="2.0" height="9.7" fill="#0a80f8"/>
<rect x="1897.2" y="235.8" width="2.0" height="17.1" fill="#ff0000"/></g>
<g clip-path="url(#c2)"><rect x="21.2" y="429.7" width="1.6" height="1.7" fill="#f2e88a"/>
<rect x="29.2" y="428.4" width="3.2" height="1.7" fill="#f2e88a"/>
<rect x="30.8" y="428.0" width="1.6" height="1.7" fill="#f2e88a"/>
<rect x="37.2" y="428.5" width="3.2" height="1.7" fill="#f2e88a"/>
<rect x="59.6" y="430.9" width="1.6" height="1.7" fill="#f2e88a"/>
<rect x="61.2" y="432.1" width="1.6" height="1.7" fill="#f2e88a"/>
<rect x="64.4" y="435.8" width="3.2" height="1.7" fill="#f2e88a"/>
<rect x="69.2" y="437.1" width="3.2" height="1.7" fill="#f2e88a"/>
<rect x="80.4" y="427.1" width="4.8" height="1.7" fill="#f2e88a"/>
<rect x="83.6" y="426.5" width="4.8" height="1.7" fill="#f2e88a"/>
<rect x="86.8" y="424.4" width="1.6" height="1.7" fill="#f2e88a"/><rect x="97.0" y="440.9" width="2.0" height="8.1" fill="#ff0000"/>
<rect x="98.6" y="434.1" width="2.0" height="9.8" fill="#ff0000"/>
<rect x="100.2" y="435.3" width="2.0" height="1.8" fill="#ff0000"/>
<rect x="101.8" y="432.3" width="2.0" height="12.1" fill="#0a80f8"/>
<rect x="103.4" y="428.6" width="2.0" height="12.8" fill="#ff0000"/>
<rect x="105.0" y="429.6" width="2.0" height="30.6" fill="#0a80f8"/>
<rect x="106.6" y="458.2" width="2.0" height="4.1" fill="#0a80f8"/>
<rect x="108.2" y="455.3" width="3.2" height="1.7" fill="#f2e88a"/>
<rect x="109.8" y="456.2" width="2.0" height="15.1" fill="#0a80f8"/>
<rect x="111.4" y="468.3" width="2.0" height="4.2" fill="#0a80f8"/>
<rect x="114.6" y="490.2" width="2.0" height="4.1" fill="#0a80f8"/>
<rect x="116.2" y="472.9" width="2.0" height="23.4" fill="#ff0000"/>
<rect x="117.8" y="470.9" width="2.0" height="15.2" fill="#0a80f8"/>
<rect x="119.4" y="482.2" width="3.2" height="1.7" fill="#f2e88a"/>
<rect x="122.6" y="474.3" width="3.2" height="1.7" fill="#f2e88a"/>
<rect x="124.2" y="471.4" width="2.0" height="3.7" fill="#ff0000"/>
<rect x="125.8" y="465.7" width="2.0" height="8.7" fill="#ff0000"/>
<rect x="127.4" y="458.0" width="2.0" height="8.7" fill="#ff0000"/>
<rect x="129.0" y="458.0" width="2.0" height="20.5" fill="#0a80f8"/>
<rect x="130.6" y="476.3" width="3.2" height="1.7" fill="#f2e88a"/>
<rect x="132.2" y="477.2" width="2.0" height="7.4" fill="#0a80f8"/>
<rect x="133.8" y="475.0" width="2.0" height="9.6" fill="#ff0000"/>
<rect x="135.4" y="477.7" width="4.8" height="1.7" fill="#f2e88a"/>
<rect x="137.0" y="481.1" width="1.6" height="1.7" fill="#f2e88a"/>
<rect x="138.6" y="481.9" width="2.0" height="2.0" fill="#0a80f8"/>
<rect x="140.2" y="482.0" width="2.0" height="11.7" fill="#0a80f8"/>
<rect x="141.8" y="486.4" width="2.0" height="4.3" fill="#ff0000"/>
<rect x="143.4" y="485.9" width="1.6" height="1.7" fill="#f2e88a"/>
<rect x="145.0" y="486.6" width="1.6" height="1.7" fill="#f2e88a"/>
<rect x="146.6" y="487.5" width="1.6" height="1.7" fill="#f2e88a"/>
<rect x="148.2" y="487.0" width="4.8" height="1.7" fill="#f2e88a"/>
<rect x="149.8" y="486.3" width="3.2" height="1.7" fill="#f2e88a"/>
<rect x="151.4" y="487.2" width="2.0" height="7.0" fill="#0a80f8"/>
<rect x="153.0" y="485.9" width="2.0" height="5.2" fill="#ff0000"/>
<rect x="154.6" y="486.1" width="3.2" height="1.7" fill="#f2e88a"/>
<rect x="156.2" y="485.0" width="2.0" height="6.1" fill="#0a80f8"/>
<rect x="157.8" y="490.1" width="2.0" height="1.7" fill="#0a80f8"/>
<rect x="159.4" y="491.1" width="4.8" height="1.7" fill="#f2e88a"/>
<rect x="161.0" y="487.6" width="2.0" height="4.3" fill="#ff0000"/>
<rect x="162.6" y="488.7" width="4.8" height="1.7" fill="#f2e88a"/>
<rect x="164.2" y="490.0" width="1.6" height="1.7" fill="#f2e88a"/>
<rect x="165.8" y="489.8" width="3.2" height="1.7" fill="#f2e88a"/>
<rect x="167.4" y="488.7" width="2.0" height="8.6" fill="#0a80f8"/>
<rect x="169.0" y="490.2" width="2.0" height="7.1" fill="#ff0000"/>
<rect x="170.6" y="490.9" width="4.8" height="1.7" fill="#f2e88a"/>
<rect x="172.2" y="490.8" width="4.8" height="1.7" fill="#f2e88a"/>
<rect x="173.8" y="490.6" width="3.2" height="1.7" fill="#f2e88a"/>
<rect x="177.0" y="488.5" width="2.0" height="6.1" fill="#ff0000"/>
<rect x="178.6" y="487.5" width="2.0" height="3.3" fill="#0a80f8"/>
<rect x="180.2" y="486.8" width="2.0" height="3.0" fill="#ff0000"/>
<rect x="181.8" y="495.5" width="1.6" height="1.7" fill="#f2e88a"/>
<rect x="183.4" y="497.7" width="3.2" height="1.7" fill="#f2e88a"/>
<rect x="185.0" y="501.5" width="4.8" height="1.7" fill="#f2e88a"/>
<rect x="186.6" y="500.0" width="3.2" height="1.7" fill="#f2e88a"/>
<rect x="188.2" y="497.9" width="2.0" height="8.5" fill="#0a80f8"/>
<rect x="191.4" y="509.3" width="2.0" height="6.2" fill="#0a80f8"/>
<rect x="193.0" y="507.9" width="3.2" height="1.7" fill="#f2e88a"/>
<rect x="194.6" y="507.0" width="3.2" height="1.7" fill="#f2e88a"/>
<rect x="196.2" y="506.5" width="1.6" height="1.7" fill="#f2e88a"/>
<rect x="197.8" y="504.4" width="3.2" height="1.7" fill="#f2e88a"/>
<rect x="199.4" y="499.6" width="2.0" height="8.7" fill="#ff0000"/>
<rect x="201.0" y="500.1" width="4.8" height="1.7" fill="#f2e88a"/>
<rect x="202.6" y="501.0" width="2.0" height="2.9" fill="#0a80f8"/>
<rect x="204.2" y="502.3" width="3.2" height="1.7" fill="#f2e88a"/>
<rect x="205.8" y="501.2" width="2.0" height="6.4" fill="#0a80f8"/>
<rect x="207.4" y="501.9" width="2.0" height="6.7" fill="#ff0000"/>
<rect x="209.0" y="501.9" width="2.0" height="7.0" fill="#0a80f8"/>
<rect x="210.6" y="507.1" width="4.8" height="1.7" fill="#f2e88a"/>
<rect x="213.8" y="504.9" width="2.0" height="4.0" fill="#0a80f8"/>
<rect x="215.4" y="504.6" width="2.0" height="5.2" fill="#ff0000"/>
<rect x="217.0" y="500.5" width="2.0" height="4.1" fill="#ff0000"/>
<rect x="218.6" y="498.5" width="2.0" height="10.1" fill="#0a80f8"/>
<rect x="220.2" y="501.0" width="2.0" height="6.7" fill="#ff0000"/>
<rect x="221.8" y="498.8" width="2.0" height="3.2" fill="#ff0000"/>
<rect x="223.4" y="495.5" width="4.8" height="1.7" fill="#f2e88a"/>
<rect x="225.0" y="494.2" width="2.0" height="2.2" fill="#ff0000"/>
<rect x="226.6" y="491.2" width="2.0" height="10.4" fill="#0a80f8"/>
<rect x="228.2" y="499.5" width="3.2" height="1.7" fill="#f2e88a"/>
<rect x="229.8" y="491.2" width="2.0" height="10.1" fill="#ff0000"/>
<rect x="231.4" y="488.2" width="2.0" height="4.0" fill="#ff0000"/>
<rect x="233.0" y="489.2" width="1.6" height="1.7" fill="#f2e88a"/>
<rect x="234.6" y="486.7" width="2.0" height="5.4" fill="#ff0000"/>
<rect x="236.2" y="487.2" width="1.6" height="1.7" fill="#f2e88a"/>
<rect x="237.8" y="487.2" width="1.6" height="1.7" fill="#f2e88a"/>
<rect x="239.4" y="486.3" width="3.2" height="1.7" fill="#f2e88a"/>
<rect x="242.6" y="484.7" width="4.8" height="1.7" fill="#f2e88a"/>
<rect x="245.8" y="483.5" width="4.8" height="1.7" fill="#f2e88a"/>
<rect x="247.4" y="483.4" width="2.0" height="4.7" fill="#0a80f8"/>
<rect x="249.0" y="485.9" width="2.0" height="1.7" fill="#ff0000"/>
<rect x="250.6" y="485.9" width="2.0" height="5.7" fill="#0a80f8"/>
<rect x="252.2" y="489.5" width="1.6" height="1.7" fill="#f2e88a"/>
<rect x="253.8" y="490.3" width="2.0" height="9.4" fill="#0a80f8"/>
<rect x="255.4" y="495.7" width="1.6" height="1.7" fill="#f2e88a"/>
<rect x="257.0" y="500.8" width="4.8" height="1.7" fill="#f2e88a"/>
<rect x="258.6" y="498.6" width="2.0" height="6.7" fill="#0a80f8"/>
<rect x="260.2" y="502.3" width="2.0" height="13.0" fill="#0a80f8"/>
<rect x="265.0" y="502.4" width="2.0" height="6.3" fill="#0a80f8"/>
<rect x="266.6" y="506.6" width="3.2" height="1.7" fill="#f2e88a"/>
<rect x="268.2" y="506.5" width="2.0" height="7.8" fill="#0a80f8"/>
<rect x="271.4" y="502.6" width="2.0" height="5.0" fill="#ff0000"/>
<rect x="273.0" y="496.8" width="2.0" height="8.8" fill="#ff0000"/>
<rect x="274.6" y="496.2" width="4.8" height="1.7" fill="#f2e88a"/>
<rect x="277.8" y="489.6" width="3.2" height="1.7" fill="#f2e88a"/>
<rect x="279.4" y="489.1" width="4.8" height="1.7" fill="#f2e88a"/>
<rect x="282.6" y="481.6" width="3.2" height="1.7" fill="#f2e88a"/>
<rect x="284.2" y="477.3" width="3.2" height="1.7" fill="#f2e88a"/>
<rect x="287.4" y="469.1" width="2.0" height="7.0" fill="#ff0000"/>
<rect x="289.0" y="471.3" width="3.2" height="1.7" fill="#f2e88a"/>
<rect x="290.6" y="469.1" width="2.0" height="7.3" fill="#0a80f8"/>
<rect x="292.2" y="476.8" width="3.2" height="1.7" fill="#f2e88a"/>
<rect x="293.8" y="477.7" width="2.0" height="4.9" fill="#0a80f8"/>
<rect x="295.4" y="481.3" width="1.6" height="1.7" fill="#f2e88a"/>
<rect x="297.0" y="481.1" width="3.2" height="1.7" fill="#f2e88a"/>
<rect x="301.8" y="485.5" width="2.0" height="13.5" fill="#0a80f8"/>
<rect x="303.4" y="499.0" width="2.0" height="5.5" fill="#0a80f8"/>
<rect x="305.0" y="496.4" width="2.0" height="9.2" fill="#ff0000"/>
<rect x="308.2" y="497.3" width="1.6" height="1.7" fill="#f2e88a"/>
<rect x="309.8" y="497.6" width="3.2" height="1.7" fill="#f2e88a"/>
<rect x="311.4" y="498.4" width="3.2" height="1.7" fill="#f2e88a"/>
<rect x="313.0" y="498.3" width="2.0" height="8.5" fill="#0a80f8"/>
<rect x="316.2" y="502.1" width="1.6" height="1.7" fill="#f2e88a"/>
<rect x="317.8" y="502.3" width="4.8" height="1.7" fill="#f2e88a"/>
<rect x="321.0" y="500.0" width="4.8" height="1.7" fill="#f2e88a"/>
<rect x="324.2" y="496.8" width="2.0" height="6.3" fill="#ff0000"/>
<rect x="325.8" y="498.5" width="1.6" height="1.7" fill="#f2e88a"/>
<rect x="327.4" y="498.5" width="3.2" height="1.7" fill="#f2e88a"/>
<rect x="329.0" y="496.4" width="2.0" height="7.1" fill="#0a80f8"/>
<rect x="330.6" y="500.5" width="2.0" height="3.0" fill="#0a80f8"/>
<rect x="332.2" y="501.5" width="2.0" height="7.7" fill="#0a80f8"/>
<rect x="335.4" y="504.5" width="2.0" height="7.6" fill="#0a80f8"/>
<rect x="337.0" y="505.6" width="2.0" height="8.6" fill="#ff0000"/>
<rect x="338.6" y="507.6" width="2.0" height="7.2" fill="#0a80f8"/>
<rect x="341.8" y="509.6" width="2.0" height="7.0" fill="#0a80f8"/>
<rect x="345.0" y="513.6" width="2.0" height="18.0" fill="#0a80f8"/>
<rect x="346.6" y="521.0" width="2.0" height="8.6" fill="#ff0000"/>
<rect x="348.2" y="523.0" width="2.0" height="8.4" fill="#0a80f8"/>
<rect x="349.8" y="531.4" width="2.0" height="3.4" fill="#0a80f8"/>
<rect x="351.4" y="530.8" width="2.0" height="7.0" fill="#0a80f8"/>
<rect x="354.6" y="525.2" width="1.6" height="1.7" fill="#f2e88a"/>
<rect x="356.2" y="525.1" width="2.0" height="5.3" fill="#0a80f8"/>
<rect x="357.8" y="519.5" width="2.0" height="7.9" fill="#ff0000"/>
<rect x="359.4" y="519.5" width="2.0" height="3.7" fill="#0a80f8"/>
<rect x="362.6" y="519.8" width="2.0" height="4.5" fill="#0a80f8"/>
<rect x="364.2" y="520.3" width="1.6" height="1.7" fill="#f2e88a"/>
<rect x="365.8" y="518.3" width="4.8" height="1.7" fill="#f2e88a"/>
<rect x="367.4" y="513.8" width="2.0" height="5.4" fill="#ff0000"/>
<rect x="370.6" y="511.1" width="2.0" height="8.2" fill="#ff0000"/>
<rect x="372.2" y="515.0" width="4.8" height="1.7" fill="#f2e88a"/>
<rect x="375.4" y="512.2" width="1.6" height="1.7" fill="#f2e88a"/>
<rect x="378.6" y="512.3" width="2.0" height="7.0" fill="#0a80f8"/>
<rect x="383.4" y="517.6" width="3.2" height="1.7" fill="#f2e88a"/>
<rect x="385.0" y="521.4" width="3.2" height="1.7" fill="#f2e88a"/>
<rect x="386.6" y="523.4" width="3.2" height="1.7" fill="#f2e88a"/>
<rect x="388.2" y="522.3" width="2.0" height="3.1" fill="#0a80f8"/>
<rect x="389.8" y="525.4" width="2.0" height="7.3" fill="#0a80f8"/>
<rect x="391.4" y="531.5" width="3.2" height="1.7" fill="#f2e88a"/>
<rect x="393.0" y="527.3" width="3.2" height="1.7" fill="#f2e88a"/>
<rect x="394.6" y="527.2" width="2.0" height="5.6" fill="#0a80f8"/>
<rect x="396.2" y="532.7" width="2.0" height="9.8" fill="#0a80f8"/>
<rect x="397.8" y="535.2" width="2.0" height="7.4" fill="#ff0000"/>
<rect x="401.0" y="537.1" width="2.0" height="6.9" fill="#ff0000"/>
<rect x="402.6" y="525.6" width="2.0" height="15.5" fill="#ff0000"/>
<rect x="405.8" y="521.5" width="2.0" height="7.2" fill="#0a80f8"/>
<rect x="407.4" y="523.7" width="2.0" height="4.5" fill="#0a80f8"/>
<rect x="409.0" y="527.8" width="3.2" height="1.7" fill="#f2e88a"/>
<rect x="410.6" y="524.8" width="2.0" height="3.8" fill="#ff0000"/>
<rect x="412.2" y="526.5" width="3.2" height="1.7" fill="#f2e88a"/>
<rect x="413.8" y="525.4" width="2.0" height="8.1" fill="#0a80f8"/>
<rect x="415.4" y="519.4" width="2.0" height="17.0" fill="#ff0000"/>
<rect x="417.0" y="524.2" width="1.6" height="1.7" fill="#f2e88a"/>
<rect x="418.6" y="523.1" width="2.0" height="12.7" fill="#0a80f8"/>
<rect x="420.2" y="534.5" width="3.2" height="1.7" fill="#f2e88a"/>
<rect x="421.8" y="532.3" width="2.0" height="15.3" fill="#0a80f8"/>
<rect x="423.4" y="547.9" width="4.8" height="1.7" fill="#f2e88a"/>
<rect x="425.0" y="547.0" width="1.6" height="1.7" fill="#f2e88a"/>
<rect x="428.2" y="546.6" width="3.2" height="1.7" fill="#f2e88a"/>
<rect x="431.4" y="540.5" width="2.0" height="7.4" fill="#ff0000"/>
<rect x="433.0" y="543.5" width="2.0" height="4.0" fill="#0a80f8"/>
<rect x="434.6" y="541.8" width="2.0" height="4.8" fill="#ff0000"/>
<rect x="436.2" y="542.5" width="3.2" height="1.7" fill="#f2e88a"/>
<rect x="437.8" y="540.4" width="2.0" height="4.0" fill="#ff0000"/>
<rect x="441.0" y="541.6" width="2.0" height="3.7" fill="#0a80f8"/>
<rect x="442.6" y="540.3" width="2.0" height="6.7" fill="#0a80f8"/>
<rect x="444.2" y="541.1" width="1.6" height="1.7" fill="#f2e88a"/>
<rect x="447.4" y="533.1" width="2.0" height="3.0" fill="#ff0000"/>
<rect x="449.0" y="532.7" width="1.6" height="1.7" fill="#f2e88a"/>
<rect x="452.2" y="525.6" width="2.0" height="4.1" fill="#ff0000"/>
<rect x="455.4" y="539.6" width="3.2" height="1.7" fill="#f2e88a"/>
<rect x="457.0" y="540.5" width="2.0" height="3.5" fill="#0a80f8"/>
<rect x="463.4" y="554.1" width="3.2" height="1.7" fill="#f2e88a"/>
<rect x="466.6" y="553.2" width="2.0" height="10.9" fill="#ff0000"/>
<rect x="468.2" y="553.0" width="3.2" height="1.7" fill="#f2e88a"/>
<rect x="469.8" y="554.4" width="3.2" height="1.7" fill="#f2e88a"/>
<rect x="471.4" y="554.4" width="4.8" height="1.7" fill="#f2e88a"/>
<rect x="473.0" y="551.4" width="3.2" height="1.7" fill="#f2e88a"/>
<rect x="476.2" y="552.0" width="1.6" height="1.7" fill="#f2e88a"/>
<rect x="477.8" y="550.1" width="4.8" height="1.7" fill="#f2e88a"/>
<rect x="479.4" y="547.8" width="2.0" height="3.1" fill="#ff0000"/>
<rect x="482.6" y="548.0" width="2.0" height="8.3" fill="#0a80f8"/>
<rect x="484.2" y="554.9" width="3.2" height="1.7" fill="#f2e88a"/>
<rect x="485.8" y="554.9" width="1.6" height="1.7" fill="#f2e88a"/>
<rect x="487.4" y="555.7" width="2.0" height="8.7" fill="#0a80f8"/>
<rect x="489.0" y="557.7" width="2.0" height="3.7" fill="#ff0000"/>
<rect x="490.6" y="558.7" width="3.2" height="1.7" fill="#f2e88a"/>
<rect x="492.2" y="550.8" width="2.0" height="9.7" fill="#ff0000"/>
<rect x="495.4" y="553.6" width="3.2" height="1.7" fill="#f2e88a"/>
<rect x="497.0" y="546.4" width="2.0" height="9.1" fill="#ff0000"/>
<rect x="498.6" y="545.4" width="2.0" height="6.7" fill="#0a80f8"/>
<rect x="500.2" y="549.1" width="2.0" height="14.9" fill="#0a80f8"/>
<rect x="501.8" y="561.2" width="1.6" height="1.7" fill="#f2e88a"/>
<rect x="503.4" y="561.7" width="3.2" height="1.7" fill="#f2e88a"/>
<rect x="505.0" y="558.3" width="2.0" height="5.3" fill="#ff0000"/>
<rect x="506.6" y="558.3" width="2.0" height="12.4" fill="#0a80f8"/>
<rect x="508.2" y="563.0" width="2.0" height="9.7" fill="#ff0000"/>
<rect x="509.8" y="565.6" width="3.2" height="1.7" fill="#f2e88a"/>
<rect x="511.4" y="566.4" width="2.0" height="6.2" fill="#0a80f8"/>
<rect x="513.0" y="568.8" width="1.6" height="1.7" fill="#f2e88a"/>
<rect x="514.6" y="568.4" width="4.8" height="1.7" fill="#f2e88a"/>
<rect x="516.2" y="568.0" width="1.6" height="1.7" fill="#f2e88a"/>
<rect x="521.0" y="575.9" width="1.6" height="1.7" fill="#f2e88a"/>
<rect x="522.6" y="575.8" width="1.6" height="1.7" fill="#f2e88a"/>
<rect x="524.2" y="576.6" width="2.0" height="16.7" fill="#0a80f8"/>
<rect x="525.8" y="589.4" width="2.0" height="4.1" fill="#0a80f8"/>
<rect x="527.4" y="591.6" width="2.0" height="1.9" fill="#ff0000"/>
<rect x="529.0" y="590.6" width="2.0" height="3.2" fill="#0a80f8"/>
<rect x="530.6" y="590.2" width="2.0" height="5.6" fill="#ff0000"/>
<rect x="532.2" y="588.2" width="2.0" height="3.3" fill="#0a80f8"/>
<rect x="533.8" y="583.8" width="2.0" height="8.7" fill="#ff0000"/>
<rect x="540.2" y="575.3" width="2.0" height="8.2" fill="#ff0000"/>
<rect x="541.8" y="575.3" width="2.0" height="7.0" fill="#0a80f8"/>
<rect x="545.0" y="576.2" width="2.0" height="6.0" fill="#ff0000"/>
<rect x="546.6" y="575.1" width="3.2" height="1.7" fill="#f2e88a"/>
<rect x="548.2" y="575.3" width="3.2" height="1.7" fill="#f2e88a"/>
<rect x="549.8" y="575.2" width="2.0" height="7.7" fill="#0a80f8"/>
<rect x="554.6" y="573.7" width="3.2" height="1.7" fill="#f2e88a"/>
<rect x="556.2" y="568.4" width="2.0" height="7.1" fill="#ff0000"/>
<rect x="557.8" y="567.2" width="2.0" height="2.2" fill="#ff0000"/>
<rect x="559.4" y="567.2" width="2.0" height="6.0" fill="#0a80f8"/>
<rect x="561.0" y="569.9" width="3.2" height="1.7" fill="#f2e88a"/>
<rect x="562.6" y="568.7" width="2.0" height="7.2" fill="#0a80f8"/>
<rect x="564.2" y="573.0" width="2.0" height="4.0" fill="#0a80f8"/>
<rect x="565.8" y="577.8" width="1.6" height="1.7" fill="#f2e88a"/>
<rect x="570.6" y="576.5" width="2.0" height="2.4" fill="#0a80f8"/>
<rect x="572.2" y="578.9" width="2.0" height="9.4" fill="#0a80f8"/>
<rect x="575.4" y="578.5" width="3.2" height="1.7" fill="#f2e88a"/>
<rect x="577.0" y="579.4" width="2.0" height="1.7" fill="#0a80f8"/>
<rect x="578.6" y="578.2" width="1.6" height="1.7" fill="#f2e88a"/>
<rect x="583.4" y="570.3" width="4.8" height="1.7" fill="#f2e88a"/>
<rect x="585.0" y="571.5" width="1.6" height="1.7" fill="#f2e88a"/>
<rect x="586.6" y="569.7" width="3.2" height="1.7" fill="#f2e88a"/>
<rect x="588.2" y="568.5" width="2.0" height="4.4" fill="#0a80f8"/>
<rect x="589.8" y="570.7" width="4.8" height="1.7" fill="#f2e88a"/>
<rect x="591.4" y="571.6" width="2.0" height="8.6" fill="#0a80f8"/>
<rect x="593.0" y="574.8" width="1.6" height="1.7" fill="#f2e88a"/>
<rect x="594.6" y="574.9" width="3.2" height="1.7" fill="#f2e88a"/>
<rect x="597.8" y="577.2" width="2.0" height="6.5" fill="#0a80f8"/>
<rect x="599.4" y="581.2" width="2.0" height="4.6" fill="#ff0000"/>
<rect x="601.0" y="581.0" width="3.2" height="1.7" fill="#f2e88a"/>
<rect x="602.6" y="580.7" width="1.6" height="1.7" fill="#f2e88a"/>
<rect x="604.2" y="576.8" width="2.0" height="6.7" fill="#ff0000"/>
<rect x="605.8" y="576.7" width="1.6" height="1.7" fill="#f2e88a"/>
<rect x="607.4" y="577.3" width="3.2" height="1.7" fill="#f2e88a"/>
<rect x="609.0" y="563.1" width="2.0" height="17.0" fill="#ff0000"/>
<rect x="610.6" y="566.0" width="3.2" height="1.7" fill="#f2e88a"/>
<rect x="617.0" y="562.0" width="2.0" height="6.9" fill="#0a80f8"/>
<rect x="618.6" y="565.9" width="4.8" height="1.7" fill="#f2e88a"/>
<rect x="620.2" y="565.7" width="1.6" height="1.7" fill="#f2e88a"/>
<rect x="623.4" y="563.2" width="4.8" height="1.7" fill="#f2e88a"/>
<rect x="625.0" y="562.1" width="2.0" height="5.1" fill="#0a80f8"/>
<rect x="626.6" y="564.4" width="1.6" height="1.7" fill="#f2e88a"/>
<rect x="628.2" y="564.3" width="4.8" height="1.7" fill="#f2e88a"/>
<rect x="631.4" y="566.3" width="3.2" height="1.7" fill="#f2e88a"/>
<rect x="633.0" y="565.2" width="4.8" height="1.7" fill="#f2e88a"/>
<rect x="634.6" y="565.0" width="4.8" height="1.7" fill="#f2e88a"/>
<rect x="636.2" y="566.4" width="3.2" height="1.7" fill="#f2e88a"/>
<rect x="639.4" y="566.3" width="3.2" height="1.7" fill="#f2e88a"/>
<rect x="641.0" y="566.3" width="4.8" height="1.7" fill="#f2e88a"/>
<rect x="642.6" y="568.6" width="1.6" height="1.7" fill="#f2e88a"/>
<rect x="644.2" y="567.8" width="3.2" height="1.7" fill="#f2e88a"/>
<rect x="647.4" y="567.5" width="2.0" height="5.7" fill="#ff0000"/>
<rect x="649.0" y="568.3" width="3.2" height="1.7" fill="#f2e88a"/>
<rect x="650.6" y="567.9" width="3.2" height="1.7" fill="#f2e88a"/>
<rect x="653.8" y="571.3" width="3.2" height="1.7" fill="#f2e88a"/>
<rect x="655.4" y="571.1" width="2.0" height="7.3" fill="#0a80f8"/>
<rect x="657.0" y="577.2" width="4.8" height="1.7" fill="#f2e88a"/>
<rect x="658.6" y="578.5" width="3.2" height="1.7" fill="#f2e88a"/>
<rect x="660.2" y="579.3" width="2.0" height="4.6" fill="#0a80f8"/>
<rect x="661.8" y="579.2" width="2.0" height="1.7" fill="#ff0000"/>
<rect x="665.0" y="582.5" width="3.2" height="1.7" fill="#f2e88a"/>
<rect x="666.6" y="582.8" width="3.2" height="1.7" fill="#f2e88a"/>
<rect x="668.2" y="583.0" width="4.8" height="1.7" fill="#f2e88a"/>
<rect x="671.4" y="581.6" width="2.0" height="5.5" fill="#0a80f8"/>
<rect x="673.0" y="580.0" width="2.0" height="5.0" fill="#ff0000"/>
<rect x="674.6" y="574.1" width="2.0" height="7.9" fill="#ff0000"/>
<rect x="676.2" y="575.7" width="2.0" height="2.4" fill="#ff0000"/>
<rect x="677.8" y="574.1" width="3.2" height="1.7" fill="#f2e88a"/>
<rect x="679.4" y="574.1" width="3.2" height="1.7" fill="#f2e88a"/>
<rect x="681.0" y="571.1" width="3.2" height="1.7" fill="#f2e88a"/>
<rect x="682.6" y="573.3" width="3.2" height="1.7" fill="#f2e88a"/>
<rect x="684.2" y="565.3" width="2.0" height="10.9" fill="#ff0000"/>
<rect x="685.8" y="565.3" width="2.0" height="3.4" fill="#0a80f8"/>
<rect x="687.4" y="558.0" width="2.0" height="11.6" fill="#ff0000"/>
<rect x="689.0" y="559.0" width="2.0" height="6.9" fill="#0a80f8"/>
<rect x="692.2" y="559.5" width="3.2" height="1.7" fill="#f2e88a"/>
<rect x="693.8" y="558.1" width="3.2" height="1.7" fill="#f2e88a"/>
<rect x="695.4" y="550.0" width="2.0" height="8.9" fill="#ff0000"/><rect x="698.4" y="603.2" width="3.2" height="1.7" fill="#f2e88a"/>
<rect x="700.0" y="598.9" width="2.0" height="6.1" fill="#ff0000"/>
<rect x="701.6" y="597.0" width="2.0" height="4.9" fill="#ff0000"/>
<rect x="703.2" y="595.1" width="3.2" height="1.7" fill="#f2e88a"/>
<rect x="704.8" y="593.6" width="3.2" height="1.7" fill="#f2e88a"/>
<rect x="706.4" y="592.4" width="2.0" height="2.1" fill="#ff0000"/>
<rect x="708.0" y="586.8" width="4.8" height="1.7" fill="#f2e88a"/>
<rect x="709.6" y="582.8" width="2.0" height="4.9" fill="#ff0000"/>
<rect x="714.4" y="578.6" width="1.6" height="1.7" fill="#f2e88a"/>
<rect x="716.0" y="579.4" width="2.0" height="11.8" fill="#0a80f8"/>
<rect x="719.2" y="586.0" width="2.0" height="7.2" fill="#ff0000"/>
<rect x="720.8" y="594.8" width="3.2" height="1.7" fill="#f2e88a"/>
<rect x="722.4" y="592.2" width="2.0" height="6.4" fill="#ff0000"/>
<rect x="725.6" y="600.4" width="2.0" height="6.6" fill="#0a80f8"/>
<rect x="727.2" y="604.0" width="3.2" height="1.7" fill="#f2e88a"/>
<rect x="738.4" y="607.6" width="4.8" height="1.7" fill="#f2e88a"/>
<rect x="740.0" y="604.9" width="4.8" height="1.7" fill="#f2e88a"/>
<rect x="746.4" y="591.4" width="2.0" height="10.8" fill="#ff0000"/>
<rect x="751.2" y="604.0" width="2.0" height="8.1" fill="#0a80f8"/>
<rect x="752.8" y="612.0" width="2.0" height="5.2" fill="#0a80f8"/>
<rect x="754.4" y="612.6" width="2.0" height="4.6" fill="#ff0000"/>
<rect x="756.0" y="611.6" width="2.0" height="16.5" fill="#0a80f8"/>
<rect x="757.6" y="624.1" width="2.0" height="13.0" fill="#0a80f8"/>
<rect x="762.4" y="636.2" width="4.8" height="1.7" fill="#f2e88a"/>
<rect x="764.0" y="635.0" width="2.0" height="15.8" fill="#0a80f8"/>
<rect x="765.6" y="640.9" width="2.0" height="11.9" fill="#ff0000"/>
<rect x="768.8" y="639.9" width="2.0" height="2.4" fill="#0a80f8"/>
<rect x="770.4" y="639.0" width="1.6" height="1.7" fill="#f2e88a"/>
<rect x="772.0" y="638.5" width="4.8" height="1.7" fill="#f2e88a"/>
<rect x="776.8" y="639.0" width="2.0" height="3.3" fill="#0a80f8"/>
<rect x="778.4" y="641.7" width="4.8" height="1.7" fill="#f2e88a"/>
<rect x="780.0" y="638.5" width="2.0" height="4.0" fill="#ff0000"/>
<rect x="781.6" y="644.0" width="3.2" height="1.7" fill="#f2e88a"/>
<rect x="784.8" y="650.7" width="1.6" height="1.7" fill="#f2e88a"/>
<rect x="786.4" y="649.5" width="2.0" height="9.0" fill="#0a80f8"/>
<rect x="788.0" y="650.4" width="2.0" height="7.1" fill="#ff0000"/>
<rect x="789.6" y="650.0" width="4.8" height="1.7" fill="#f2e88a"/>
<rect x="791.2" y="649.3" width="1.6" height="1.7" fill="#f2e88a"/>
<rect x="792.8" y="649.5" width="1.6" height="1.7" fill="#f2e88a"/>
<rect x="794.4" y="648.1" width="2.0" height="2.3" fill="#ff0000"/>
<rect x="796.0" y="645.6" width="2.0" height="5.4" fill="#ff0000"/>
<rect x="799.2" y="647.3" width="2.0" height="5.6" fill="#0a80f8"/>
<rect x="802.4" y="650.5" width="3.2" height="1.7" fill="#f2e88a"/>
<rect x="805.6" y="643.9" width="2.0" height="5.0" fill="#ff0000"/>
<rect x="807.2" y="642.9" width="4.8" height="1.7" fill="#f2e88a"/>
<rect x="808.8" y="626.7" width="2.0" height="17.1" fill="#ff0000"/>
<rect x="810.4" y="620.5" width="3.2" height="1.7" fill="#f2e88a"/>
<rect x="813.6" y="622.1" width="3.2" height="1.7" fill="#f2e88a"/>
<rect x="815.2" y="620.7" width="3.2" height="1.7" fill="#f2e88a"/>
<rect x="816.8" y="620.3" width="1.6" height="1.7" fill="#f2e88a"/>
<rect x="818.4" y="619.1" width="4.8" height="1.7" fill="#f2e88a"/>
<rect x="820.0" y="619.8" width="1.6" height="1.7" fill="#f2e88a"/>
<rect x="821.6" y="619.1" width="3.2" height="1.7" fill="#f2e88a"/>
<rect x="823.2" y="619.0" width="3.2" height="1.7" fill="#f2e88a"/>
<rect x="824.8" y="618.2" width="3.2" height="1.7" fill="#f2e88a"/>
<rect x="828.0" y="617.1" width="3.2" height="1.7" fill="#f2e88a"/>
<rect x="831.2" y="619.1" width="2.0" height="6.3" fill="#0a80f8"/>
<rect x="834.4" y="622.6" width="3.2" height="1.7" fill="#f2e88a"/>
<rect x="837.6" y="622.6" width="2.0" height="2.5" fill="#0a80f8"/>
<rect x="839.2" y="623.1" width="2.0" height="11.1" fill="#0a80f8"/>
<rect x="840.8" y="628.4" width="3.2" height="1.7" fill="#f2e88a"/>
<rect x="845.6" y="617.9" width="2.0" height="4.9" fill="#0a80f8"/>
<rect x="847.2" y="606.3" width="2.0" height="16.5" fill="#ff0000"/>
<rect x="852.0" y="607.2" width="2.0" height="7.2" fill="#ff0000"/>
<rect x="853.6" y="604.8" width="2.0" height="5.4" fill="#ff0000"/>
<rect x="855.2" y="607.7" width="3.2" height="1.7" fill="#f2e88a"/>
<rect x="856.8" y="603.7" width="2.0" height="4.9" fill="#ff0000"/>
<rect x="858.4" y="605.7" width="2.0" height="3.9" fill="#0a80f8"/>
<rect x="860.0" y="604.5" width="2.0" height="3.1" fill="#ff0000"/>
<rect x="863.2" y="606.4" width="2.0" height="4.1" fill="#0a80f8"/>
<rect x="864.8" y="603.2" width="1.6" height="1.7" fill="#f2e88a"/>
<rect x="866.4" y="592.4" width="2.0" height="12.6" fill="#ff0000"/>
<rect x="869.6" y="618.4" width="2.0" height="8.3" fill="#0a80f8"/>
<rect x="871.2" y="620.8" width="2.0" height="6.0" fill="#0a80f8"/>
<rect x="872.8" y="624.1" width="2.0" height="5.6" fill="#ff0000"/>
<rect x="874.4" y="624.1" width="2.0" height="18.7" fill="#0a80f8"/>
<rect x="876.0" y="634.5" width="2.0" height="8.3" fill="#ff0000"/>
<rect x="879.2" y="635.0" width="2.0" height="8.5" fill="#ff0000"/>
<rect x="882.4" y="644.2" width="2.0" height="2.9" fill="#ff0000"/>
<rect x="884.0" y="643.6" width="3.2" height="1.7" fill="#f2e88a"/>
<rect x="885.6" y="645.9" width="3.2" height="1.7" fill="#f2e88a"/>
<rect x="888.8" y="650.6" width="2.0" height="5.8" fill="#ff0000"/>
<rect x="890.4" y="647.6" width="2.0" height="11.0" fill="#0a80f8"/>
<rect x="892.0" y="657.5" width="4.8" height="1.7" fill="#f2e88a"/>
<rect x="893.6" y="655.7" width="4.8" height="1.7" fill="#f2e88a"/>
<rect x="896.8" y="659.7" width="2.0" height="4.1" fill="#ff0000"/>
<rect x="900.0" y="661.0" width="2.0" height="7.1" fill="#0a80f8"/>
<rect x="903.2" y="661.4" width="1.6" height="1.7" fill="#f2e88a"/>
<rect x="908.0" y="668.4" width="3.2" height="1.7" fill="#f2e88a"/>
<rect x="909.6" y="667.0" width="2.0" height="2.3" fill="#ff0000"/>
<rect x="911.2" y="669.2" width="3.2" height="1.7" fill="#f2e88a"/>
<rect x="912.8" y="670.9" width="1.6" height="1.7" fill="#f2e88a"/>
<rect x="914.4" y="670.5" width="3.2" height="1.7" fill="#f2e88a"/>
<rect x="916.0" y="671.3" width="2.0" height="7.9" fill="#0a80f8"/>
<rect x="917.6" y="675.4" width="3.2" height="1.7" fill="#f2e88a"/>
<rect x="925.6" y="674.2" width="2.0" height="2.0" fill="#0a80f8"/>
<rect x="932.0" y="661.0" width="2.0" height="5.2" fill="#0a80f8"/>
<rect x="933.6" y="663.2" width="2.0" height="6.8" fill="#0a80f8"/>
<rect x="935.2" y="665.6" width="4.8" height="1.7" fill="#f2e88a"/>
<rect x="938.4" y="662.8" width="1.6" height="1.7" fill="#f2e88a"/>
<rect x="940.0" y="662.0" width="4.8" height="1.7" fill="#f2e88a"/>
<rect x="941.6" y="662.7" width="4.8" height="1.7" fill="#f2e88a"/>
<rect x="943.2" y="662.9" width="3.2" height="1.7" fill="#f2e88a"/>
<rect x="946.4" y="663.9" width="4.8" height="1.7" fill="#f2e88a"/>
<rect x="948.0" y="662.4" width="4.8" height="1.7" fill="#f2e88a"/>
<rect x="951.2" y="663.1" width="3.2" height="1.7" fill="#f2e88a"/>
<rect x="952.8" y="661.1" width="4.8" height="1.7" fill="#f2e88a"/>
<rect x="956.0" y="659.9" width="3.2" height="1.7" fill="#f2e88a"/>
<rect x="957.6" y="660.3" width="3.2" height="1.7" fill="#f2e88a"/>
<rect x="959.2" y="658.6" width="1.6" height="1.7" fill="#f2e88a"/>
<rect x="962.4" y="653.0" width="1.6" height="1.7" fill="#f2e88a"/>
<rect x="965.6" y="657.2" width="1.6" height="1.7" fill="#f2e88a"/>
<rect x="967.2" y="656.9" width="3.2" height="1.7" fill="#f2e88a"/>
<rect x="973.6" y="662.1" width="2.0" height="9.4" fill="#0a80f8"/>
<rect x="978.4" y="667.4" width="1.6" height="1.7" fill="#f2e88a"/>
<rect x="980.0" y="666.2" width="3.2" height="1.7" fill="#f2e88a"/>
<rect x="981.6" y="668.3" width="3.2" height="1.7" fill="#f2e88a"/>
<rect x="983.2" y="668.4" width="1.6" height="1.7" fill="#f2e88a"/>
<rect x="989.6" y="662.2" width="2.0" height="3.3" fill="#ff0000"/>
<rect x="991.2" y="664.4" width="4.8" height="1.7" fill="#f2e88a"/>
<rect x="996.0" y="668.6" width="4.8" height="1.7" fill="#f2e88a"/>
<rect x="997.6" y="671.0" width="3.2" height="1.7" fill="#f2e88a"/>
<rect x="999.2" y="669.8" width="2.0" height="12.3" fill="#0a80f8"/>
<rect x="1002.4" y="677.0" width="2.0" height="9.0" fill="#0a80f8"/>
<rect x="1007.2" y="681.1" width="3.2" height="1.7" fill="#f2e88a"/>
<rect x="1008.8" y="681.2" width="1.6" height="1.7" fill="#f2e88a"/>
<rect x="1010.4" y="682.3" width="4.8" height="1.7" fill="#f2e88a"/>
<rect x="1013.6" y="681.6" width="1.6" height="1.7" fill="#f2e88a"/>
<rect x="1015.2" y="681.7" width="3.2" height="1.7" fill="#f2e88a"/>
<rect x="1016.8" y="676.6" width="3.2" height="1.7" fill="#f2e88a"/>
<rect x="1020.0" y="667.2" width="2.0" height="7.2" fill="#ff0000"/>
<rect x="1021.6" y="664.2" width="2.0" height="5.0" fill="#ff0000"/>
<rect x="1023.2" y="663.9" width="3.2" height="1.7" fill="#f2e88a"/>
<rect x="1024.8" y="666.2" width="4.8" height="1.7" fill="#f2e88a"/>
<rect x="1026.4" y="666.2" width="1.6" height="1.7" fill="#f2e88a"/>
<rect x="1028.0" y="661.0" width="2.0" height="6.0" fill="#ff0000"/>
<rect x="1029.6" y="654.0" width="2.0" height="8.9" fill="#ff0000"/>
<rect x="1032.8" y="652.1" width="2.0" height="7.3" fill="#ff0000"/>
<rect x="1036.0" y="655.7" width="3.2" height="1.7" fill="#f2e88a"/>
<rect x="1037.6" y="656.6" width="2.0" height="1.7" fill="#0a80f8"/>
<rect x="1040.8" y="657.6" width="2.0" height="8.7" fill="#0a80f8"/>
<rect x="1042.4" y="660.4" width="2.0" height="6.0" fill="#ff0000"/>
<rect x="1044.0" y="658.4" width="2.0" height="4.4" fill="#0a80f8"/>
<rect x="1047.2" y="665.5" width="2.0" height="3.3" fill="#0a80f8"/>
<rect x="1048.8" y="670.8" width="3.2" height="1.7" fill="#f2e88a"/>
<rect x="1052.0" y="672.1" width="2.0" height="6.8" fill="#0a80f8"/>
<rect x="1055.2" y="687.6" width="3.2" height="1.7" fill="#f2e88a"/>
<rect x="1058.4" y="675.1" width="2.0" height="12.2" fill="#0a80f8"/>
<rect x="1060.0" y="682.7" width="2.0" height="5.6" fill="#ff0000"/>
<rect x="1061.6" y="681.2" width="4.8" height="1.7" fill="#f2e88a"/>
<rect x="1063.2" y="674.0" width="2.0" height="10.1" fill="#ff0000"/>
<rect x="1064.8" y="674.3" width="1.6" height="1.7" fill="#f2e88a"/>
<rect x="1066.4" y="676.1" width="1.6" height="1.7" fill="#f2e88a"/>
<rect x="1069.6" y="675.2" width="1.6" height="1.7" fill="#f2e88a"/>
<rect x="1071.2" y="674.9" width="1.6" height="1.7" fill="#f2e88a"/>
<rect x="1076.0" y="672.5" width="3.2" height="1.7" fill="#f2e88a"/>
<rect x="1082.4" y="667.7" width="2.0" height="5.3" fill="#ff0000"/>
<rect x="1084.0" y="666.6" width="3.2" height="1.7" fill="#f2e88a"/>
<rect x="1085.6" y="666.7" width="1.6" height="1.7" fill="#f2e88a"/>
<rect x="1090.4" y="666.0" width="3.2" height="1.7" fill="#f2e88a"/>
<rect x="1092.0" y="665.6" width="4.8" height="1.7" fill="#f2e88a"/>
<rect x="1100.0" y="661.7" width="1.6" height="1.7" fill="#f2e88a"/>
<rect x="1104.8" y="658.9" width="3.2" height="1.7" fill="#f2e88a"/>
<rect x="1109.6" y="685.9" width="3.2" height="1.7" fill="#f2e88a"/>
<rect x="1112.8" y="664.3" width="2.0" height="17.3" fill="#ff0000"/>
<rect x="1114.4" y="663.6" width="3.2" height="1.7" fill="#f2e88a"/>
<rect x="1119.2" y="686.1" width="3.2" height="1.7" fill="#f2e88a"/>
<rect x="1124.0" y="698.2" width="3.2" height="1.7" fill="#f2e88a"/>
<rect x="1130.4" y="678.7" width="3.2" height="1.7" fill="#f2e88a"/>
<rect x="1133.6" y="670.7" width="3.2" height="1.7" fill="#f2e88a"/>
<rect x="1135.2" y="658.7" width="2.0" height="12.8" fill="#ff0000"/>
<rect x="1136.8" y="658.4" width="2.0" height="2.3" fill="#ff0000"/>
<rect x="1141.6" y="662.9" width="1.6" height="1.7" fill="#f2e88a"/>
<rect x="1144.8" y="658.9" width="2.0" height="4.0" fill="#0a80f8"/>
<rect x="1146.4" y="657.5" width="2.0" height="6.5" fill="#ff0000"/>
<rect x="1148.0" y="657.5" width="2.0" height="6.6" fill="#0a80f8"/>
<rect x="1149.6" y="658.7" width="3.2" height="1.7" fill="#f2e88a"/>
<rect x="1159.2" y="634.7" width="4.8" height="1.7" fill="#f2e88a"/>
<rect x="1162.4" y="626.9" width="3.2" height="1.7" fill="#f2e88a"/>
<rect x="1168.8" y="622.2" width="4.8" height="1.7" fill="#f2e88a"/>
<rect x="1170.4" y="621.1" width="2.0" height="8.1" fill="#0a80f8"/>
<rect x="1172.0" y="626.2" width="2.0" height="4.7" fill="#0a80f8"/>
<rect x="1175.2" y="640.1" width="3.2" height="1.7" fill="#f2e88a"/>
<rect x="1178.4" y="632.0" width="4.8" height="1.7" fill="#f2e88a"/>
<rect x="1181.6" y="628.4" width="3.2" height="1.7" fill="#f2e88a"/>
<rect x="1189.6" y="619.9" width="4.8" height="1.7" fill="#f2e88a"/>
<rect x="1192.8" y="626.6" width="3.2" height="1.7" fill="#f2e88a"/>
<rect x="1207.2" y="607.6" width="3.2" height="1.7" fill="#f2e88a"/>
<rect x="1208.8" y="603.3" width="2.0" height="5.1" fill="#ff0000"/>
<rect x="1210.4" y="600.0" width="4.8" height="1.7" fill="#f2e88a"/>
<rect x="1212.0" y="599.5" width="4.8" height="1.7" fill="#f2e88a"/>
<rect x="1213.6" y="600.2" width="3.2" height="1.7" fill="#f2e88a"/>
<rect x="1215.2" y="593.4" width="2.0" height="10.6" fill="#ff0000"/>
<rect x="1218.4" y="590.8" width="2.0" height="9.4" fill="#ff0000"/>
<rect x="1220.0" y="591.6" width="3.2" height="1.7" fill="#f2e88a"/>
<rect x="1221.6" y="591.6" width="4.8" height="1.7" fill="#f2e88a"/>
<rect x="1223.2" y="590.5" width="2.0" height="12.2" fill="#0a80f8"/>
<rect x="1224.8" y="601.7" width="2.0" height="8.2" fill="#0a80f8"/>
<rect x="1231.2" y="610.5" width="4.8" height="1.7" fill="#f2e88a"/>
<rect x="1234.4" y="610.6" width="3.2" height="1.7" fill="#f2e88a"/>
<rect x="1236.0" y="609.4" width="4.8" height="1.7" fill="#f2e88a"/>
<rect x="1239.2" y="608.3" width="2.0" height="3.7" fill="#0a80f8"/>
<rect x="1240.8" y="609.1" width="2.0" height="1.9" fill="#ff0000"/>
<rect x="1245.6" y="605.4" width="3.2" height="1.7" fill="#f2e88a"/>
<rect x="1250.4" y="605.5" width="4.8" height="1.7" fill="#f2e88a"/>
<rect x="1252.0" y="600.4" width="2.0" height="6.0" fill="#ff0000"/>
<rect x="1256.8" y="601.3" width="3.2" height="1.7" fill="#f2e88a"/>
<rect x="1260.0" y="604.5" width="2.0" height="4.6" fill="#ff0000"/>
<rect x="1261.6" y="604.8" width="3.2" height="1.7" fill="#f2e88a"/>
<rect x="1264.8" y="599.3" width="1.6" height="1.7" fill="#f2e88a"/>
<rect x="1268.0" y="595.8" width="2.0" height="9.7" fill="#ff0000"/>
<rect x="1269.6" y="595.0" width="2.0" height="4.8" fill="#ff0000"/>
<rect x="1271.2" y="588.9" width="4.8" height="1.7" fill="#f2e88a"/>
<rect x="1272.8" y="581.7" width="1.6" height="1.7" fill="#f2e88a"/>
<rect x="1277.6" y="557.8" width="2.0" height="9.0" fill="#0a80f8"/>
<rect x="1279.2" y="556.2" width="3.2" height="1.7" fill="#f2e88a"/>
<rect x="1282.4" y="559.1" width="2.0" height="8.7" fill="#ff0000"/>
<rect x="1288.8" y="573.7" width="2.0" height="10.8" fill="#ff0000"/>
<rect x="1290.4" y="575.9" width="1.6" height="1.7" fill="#f2e88a"/>
<rect x="1292.0" y="572.8" width="1.6" height="1.7" fill="#f2e88a"/>
<rect x="1295.2" y="569.6" width="2.0" height="4.0" fill="#ff0000"/>
<rect x="1296.8" y="569.6" width="2.0" height="9.6" fill="#0a80f8"/>
<rect x="1298.4" y="574.8" width="4.8" height="1.7" fill="#f2e88a"/>
<rect x="1301.6" y="569.5" width="2.0" height="21.3" fill="#0a80f8"/>
<rect x="1303.2" y="585.7" width="2.0" height="16.7" fill="#0a80f8"/>
<rect x="1304.8" y="599.4" width="2.0" height="7.8" fill="#0a80f8"/>
<rect x="1308.0" y="599.9" width="3.2" height="1.7" fill="#f2e88a"/>
<rect x="1311.2" y="588.1" width="2.0" height="16.4" fill="#ff0000"/>
<rect x="1314.4" y="580.8" width="2.0" height="15.7" fill="#ff0000"/>
<rect x="1319.2" y="575.5" width="1.6" height="1.7" fill="#f2e88a"/>
<rect x="1322.4" y="571.2" width="4.8" height="1.7" fill="#f2e88a"/>
<rect x="1324.0" y="570.1" width="4.8" height="1.7" fill="#f2e88a"/>
<rect x="1327.2" y="562.5" width="2.0" height="5.4" fill="#0a80f8"/>
<rect x="1328.8" y="561.2" width="3.2" height="1.7" fill="#f2e88a"/>
<rect x="1330.4" y="563.1" width="4.8" height="1.7" fill="#f2e88a"/>
<rect x="1333.6" y="563.6" width="4.8" height="1.7" fill="#f2e88a"/>
<rect x="1335.2" y="563.8" width="3.2" height="1.7" fill="#f2e88a"/>
<rect x="1336.8" y="559.5" width="2.0" height="5.1" fill="#ff0000"/>
<rect x="1348.0" y="559.9" width="4.8" height="1.7" fill="#f2e88a"/>
<rect x="1349.6" y="560.7" width="2.0" height="4.6" fill="#0a80f8"/>
<rect x="1354.4" y="558.6" width="3.2" height="1.7" fill="#f2e88a"/>
<rect x="1356.0" y="553.7" width="2.0" height="7.7" fill="#ff0000"/>
<rect x="1357.6" y="555.8" width="1.6" height="1.7" fill="#f2e88a"/>
<rect x="1362.4" y="551.2" width="3.2" height="1.7" fill="#f2e88a"/>
<rect x="1364.0" y="549.9" width="3.2" height="1.7" fill="#f2e88a"/>
<rect x="1365.6" y="550.7" width="2.0" height="10.1" fill="#0a80f8"/>
<rect x="1367.2" y="556.7" width="3.2" height="1.7" fill="#f2e88a"/>
<rect x="1368.8" y="556.6" width="2.0" height="2.8" fill="#0a80f8"/>
<rect x="1370.4" y="555.8" width="2.0" height="3.6" fill="#ff0000"/>
<rect x="1376.8" y="558.9" width="2.0" height="3.5" fill="#ff0000"/>
<rect x="1378.4" y="557.9" width="2.0" height="4.8" fill="#0a80f8"/>
<rect x="1381.6" y="556.6" width="1.6" height="1.7" fill="#f2e88a"/>
<rect x="1383.2" y="556.4" width="2.0" height="5.3" fill="#0a80f8"/>
<rect x="1391.2" y="554.3" width="3.2" height="1.7" fill="#f2e88a"/>
<rect x="1394.4" y="552.4" width="4.8" height="1.7" fill="#f2e88a"/>
<rect x="1397.6" y="544.2" width="2.0" height="8.2" fill="#ff0000"/>
<rect x="1399.2" y="548.3" width="1.6" height="1.7" fill="#f2e88a"/>
<rect x="1404.0" y="555.1" width="3.2" height="1.7" fill="#f2e88a"/>
<rect x="1405.6" y="560.2" width="4.8" height="1.7" fill="#f2e88a"/>
<rect x="1407.2" y="572.6" width="1.6" height="1.7" fill="#f2e88a"/>
<rect x="1412.0" y="577.3" width="2.0" height="13.0" fill="#0a80f8"/>
<rect x="1415.2" y="582.0" width="3.2" height="1.7" fill="#f2e88a"/>
<rect x="1420.0" y="595.4" width="3.2" height="1.7" fill="#f2e88a"/>
<rect x="1424.8" y="596.5" width="2.0" height="6.8" fill="#0a80f8"/>
<rect x="1429.6" y="605.7" width="4.8" height="1.7" fill="#f2e88a"/>
<rect x="1434.4" y="606.7" width="3.2" height="1.7" fill="#f2e88a"/>
<rect x="1437.6" y="606.2" width="3.2" height="1.7" fill="#f2e88a"/>
<rect x="1442.4" y="608.0" width="4.8" height="1.7" fill="#f2e88a"/>
<rect x="1450.4" y="609.4" width="1.6" height="1.7" fill="#f2e88a"/>
<rect x="1456.8" y="610.4" width="4.8" height="1.7" fill="#f2e88a"/>
<rect x="1460.0" y="609.7" width="2.0" height="4.8" fill="#0a80f8"/>
<rect x="1461.6" y="614.8" width="3.2" height="1.7" fill="#f2e88a"/>
<rect x="1463.2" y="612.0" width="3.2" height="1.7" fill="#f2e88a"/>
<rect x="1466.4" y="618.4" width="1.6" height="1.7" fill="#f2e88a"/>
<rect x="1474.4" y="632.7" width="1.6" height="1.7" fill="#f2e88a"/>
<rect x="1476.0" y="633.1" width="3.2" height="1.7" fill="#f2e88a"/>
<rect x="1485.6" y="633.3" width="4.8" height="1.7" fill="#f2e88a"/>
<rect x="1490.4" y="629.3" width="1.6" height="1.7" fill="#f2e88a"/>
<rect x="1492.0" y="630.7" width="3.2" height="1.7" fill="#f2e88a"/>
<rect x="1496.8" y="628.1" width="2.0" height="6.1" fill="#0a80f8"/>
<rect x="1498.4" y="638.4" width="3.2" height="1.7" fill="#f2e88a"/>
<rect x="1501.6" y="645.7" width="4.8" height="1.7" fill="#f2e88a"/>
<rect x="1504.8" y="648.0" width="4.8" height="1.7" fill="#f2e88a"/>
<rect x="1512.8" y="647.2" width="4.8" height="1.7" fill="#f2e88a"/>
<rect x="1516.0" y="648.7" width="3.2" height="1.7" fill="#f2e88a"/>
<rect x="1517.6" y="648.6" width="3.2" height="1.7" fill="#f2e88a"/>
<rect x="1519.2" y="641.8" width="2.0" height="8.7" fill="#ff0000"/>
<rect x="1522.4" y="641.1" width="2.0" height="9.8" fill="#0a80f8"/>
<rect x="1524.0" y="641.8" width="2.0" height="6.1" fill="#ff0000"/>
<rect x="1525.6" y="636.2" width="2.0" height="9.6" fill="#ff0000"/>
<rect x="1528.8" y="631.5" width="2.0" height="8.5" fill="#0a80f8"/>
<rect x="1530.4" y="633.3" width="1.6" height="1.7" fill="#f2e88a"/>
<rect x="1533.6" y="632.5" width="2.0" height="3.8" fill="#ff0000"/>
<rect x="1536.8" y="633.0" width="1.6" height="1.7" fill="#f2e88a"/>
<rect x="1543.2" y="639.2" width="3.2" height="1.7" fill="#f2e88a"/>
<rect x="1544.8" y="641.2" width="3.2" height="1.7" fill="#f2e88a"/>
<rect x="1557.6" y="638.4" width="1.6" height="1.7" fill="#f2e88a"/>
<rect x="1560.8" y="630.0" width="3.2" height="1.7" fill="#f2e88a"/>
<rect x="1562.4" y="623.8" width="2.0" height="10.1" fill="#ff0000"/>
<rect x="1564.0" y="623.7" width="2.0" height="5.2" fill="#ff0000"/>
<rect x="1565.6" y="624.1" width="1.6" height="1.7" fill="#f2e88a"/>
<rect x="1567.2" y="624.9" width="2.0" height="9.5" fill="#0a80f8"/>
<rect x="1568.8" y="630.3" width="1.6" height="1.7" fill="#f2e88a"/>
<rect x="1575.2" y="635.9" width="3.2" height="1.7" fill="#f2e88a"/>
<rect x="1578.4" y="641.8" width="4.8" height="1.7" fill="#f2e88a"/>
<rect x="1580.0" y="641.5" width="3.2" height="1.7" fill="#f2e88a"/>
<rect x="1637.6" y="636.9" width="3.2" height="1.7" fill="#f2e88a"/>
<rect x="1639.2" y="630.7" width="4.8" height="1.7" fill="#f2e88a"/>
<rect x="1642.4" y="628.0" width="3.2" height="1.7" fill="#f2e88a"/>
<rect x="1645.6" y="616.7" width="2.0" height="1.7" fill="#0a80f8"/>
<rect x="1653.6" y="614.3" width="1.6" height="1.7" fill="#f2e88a"/>
<rect x="1656.8" y="608.1" width="1.6" height="1.7" fill="#f2e88a"/>
<rect x="1658.4" y="613.3" width="1.6" height="1.7" fill="#f2e88a"/>
<rect x="1661.6" y="622.9" width="2.0" height="8.2" fill="#0a80f8"/>
<rect x="1663.2" y="626.6" width="1.6" height="1.7" fill="#f2e88a"/>
<rect x="1664.8" y="622.5" width="2.0" height="4.9" fill="#ff0000"/>
<rect x="1668.0" y="625.8" width="2.0" height="5.3" fill="#0a80f8"/>
<rect x="1669.6" y="629.0" width="4.8" height="1.7" fill="#f2e88a"/>
<rect x="1672.8" y="628.9" width="1.6" height="1.7" fill="#f2e88a"/>
<rect x="1676.0" y="629.1" width="1.6" height="1.7" fill="#f2e88a"/>
<rect x="1679.2" y="630.0" width="3.2" height="1.7" fill="#f2e88a"/>
<rect x="1682.4" y="625.9" width="3.2" height="1.7" fill="#f2e88a"/>
<rect x="1685.6" y="626.4" width="3.2" height="1.7" fill="#f2e88a"/>
<rect x="1695.2" y="620.8" width="4.8" height="1.7" fill="#f2e88a"/>
<rect x="1696.8" y="618.1" width="2.0" height="3.6" fill="#ff0000"/>
<rect x="1708.0" y="614.9" width="3.2" height="1.7" fill="#f2e88a"/>
<rect x="1711.2" y="621.1" width="1.6" height="1.7" fill="#f2e88a"/>
<rect x="1714.4" y="630.0" width="4.8" height="1.7" fill="#f2e88a"/>
<rect x="1717.6" y="630.3" width="2.0" height="3.6" fill="#0a80f8"/>
<rect x="1720.8" y="645.9" width="2.0" height="5.8" fill="#0a80f8"/>
<rect x="1725.6" y="640.6" width="1.6" height="1.7" fill="#f2e88a"/>
<rect x="1735.2" y="635.5" width="3.2" height="1.7" fill="#f2e88a"/>
<rect x="1738.4" y="633.4" width="1.6" height="1.7" fill="#f2e88a"/>
<rect x="1741.6" y="628.1" width="3.2" height="1.7" fill="#f2e88a"/>
<rect x="1748.0" y="628.4" width="3.2" height="1.7" fill="#f2e88a"/>
<rect x="1754.4" y="621.6" width="2.0" height="9.5" fill="#ff0000"/>
<rect x="1757.6" y="615.4" width="2.0" height="9.9" fill="#ff0000"/>
<rect x="1762.4" y="609.7" width="2.0" height="7.1" fill="#ff0000"/>
<rect x="1767.2" y="604.9" width="2.0" height="8.7" fill="#ff0000"/>
<rect x="1770.4" y="608.2" width="1.6" height="1.7" fill="#f2e88a"/>
<rect x="1776.8" y="609.2" width="1.6" height="1.7" fill="#f2e88a"/>
<rect x="1781.6" y="608.2" width="3.2" height="1.7" fill="#f2e88a"/>
<rect x="1783.2" y="607.4" width="1.6" height="1.7" fill="#f2e88a"/>
<rect x="1784.8" y="608.3" width="2.0" height="5.7" fill="#0a80f8"/>
<rect x="1789.6" y="608.2" width="3.2" height="1.7" fill="#f2e88a"/>
<rect x="1794.4" y="608.5" width="3.2" height="1.7" fill="#f2e88a"/>
<rect x="1800.8" y="608.1" width="3.2" height="1.7" fill="#f2e88a"/>
<rect x="1810.4" y="609.2" width="3.2" height="1.7" fill="#f2e88a"/>
<rect x="1812.0" y="608.8" width="3.2" height="1.7" fill="#f2e88a"/>
<rect x="1813.6" y="608.7" width="3.2" height="1.7" fill="#f2e88a"/>
<rect x="1815.2" y="609.1" width="3.2" height="1.7" fill="#f2e88a"/>
<rect x="1818.4" y="607.2" width="2.0" height="4.0" fill="#0a80f8"/>
<rect x="1821.6" y="608.3" width="4.8" height="1.7" fill="#f2e88a"/>
<rect x="1824.8" y="609.6" width="3.2" height="1.7" fill="#f2e88a"/>
<rect x="1826.4" y="608.3" width="3.2" height="1.7" fill="#f2e88a"/>
<rect x="1831.2" y="608.0" width="3.2" height="1.7" fill="#f2e88a"/>
<rect x="1836.0" y="609.2" width="2.0" height="1.7" fill="#ff0000"/>
<rect x="1839.2" y="611.4" width="4.8" height="1.7" fill="#f2e88a"/>
<rect x="1844.0" y="612.8" width="2.0" height="1.7" fill="#0a80f8"/>
<rect x="1845.6" y="611.8" width="2.0" height="2.3" fill="#ff0000"/>
<rect x="1847.2" y="611.0" width="1.6" height="1.7" fill="#f2e88a"/>
<rect x="1850.4" y="612.1" width="4.8" height="1.7" fill="#f2e88a"/>
<rect x="1852.0" y="612.9" width="2.0" height="5.7" fill="#0a80f8"/>
<rect x="1855.2" y="615.0" width="3.2" height="1.7" fill="#f2e88a"/>
<rect x="1858.4" y="613.6" width="1.6" height="1.7" fill="#f2e88a"/>
<rect x="1866.4" y="611.6" width="4.8" height="1.7" fill="#f2e88a"/>
<rect x="1869.6" y="610.5" width="4.8" height="1.7" fill="#f2e88a"/>
<rect x="1874.4" y="609.2" width="4.8" height="1.7" fill="#f2e88a"/>
<rect x="1876.0" y="608.6" width="3.2" height="1.7" fill="#f2e88a"/>
<rect x="1882.4" y="606.1" width="1.6" height="1.7" fill="#f2e88a"/>
<rect x="1884.0" y="607.3" width="4.8" height="1.7" fill="#f2e88a"/>
<rect x="1885.6" y="607.6" width="1.6" height="1.7" fill="#f2e88a"/>
<rect x="1887.2" y="604.9" width="2.0" height="3.6" fill="#ff0000"/>
<rect x="1890.4" y="607.8" width="3.2" height="1.7" fill="#f2e88a"/>
<rect x="1893.6" y="605.9" width="3.2" height="1.7" fill="#f2e88a"/></g>
<g clip-path="url(#c3)"><path d="M12.9 935.9 V939.3 H14.4 V938.4 H15.9 V947.5 H17.4 V943.4 H18.9 V942.8 H20.4 V939.7 H21.9 V935.1 H23.4 V940.5 H24.9 V937.8 H26.4 V933.6 H27.9 V931.7 H29.4 V931.6 H30.9 V934.4 H32.4 V944.8 H33.9 V942.6 H35.4 V946.0 H36.9 V939.7 H38.4 V944.3 H39.9 V943.6 H41.4 V938.4 H42.9 V938.5 H44.4 V935.4 H45.9 V940.0 H47.4 V943.8 H48.9 V944.1 H50.4 V945.9 H51.9 V943.4 H53.4 V947.2 H54.9 V952.9 H56.4 V946.9 H57.9 V950.4 H59.4 V949.2 H60.9 V947.9 H62.4 V945.4 H63.9 V950.7 H65.4 V945.3 H66.9 V939.1 H68.4 V943.6 H69.9 V934.1 H71.4 V938.7 H72.9 V934.5 H74.4 V929.7 H75.9 V923.3 H77.4 V930.6 H78.9 V924.3 H80.4 V925.3 H81.9 V931.3 H83.4 V927.2 H84.9 V937.0 H86.4 V944.2 H87.9 V948.1 H89.4 V946.6 H90.9 V952.0 H92.4 V944.7 H93.9 V943.3 H95.4 V934.8 H96.9 V931.6 H98.4 V929.0 H99.9 V968.7 H101.4 V974.8 H102.9 V967.3 H104.4 V969.6 H105.9 V972.6 H107.4 V967.1 H108.9 V962.4 H110.4 V964.8 H111.9 V956.3 H113.4 V958.9 H114.9 V953.5 H116.4 V955.0 H117.9 V955.2 H119.4 V954.2 H120.9 V955.8 H122.4 V959.0 H123.9 V960.1 H125.4 V966.5 H126.9 V971.3 H128.4 V972.9 H129.9 V967.9 H131.4 V965.8 H132.9 V971.7 H134.4 V964.9 H135.9 V967.0 H137.4 V959.0 H138.9 V966.3 H140.4 V978.7 H141.9 V977.8 H143.4 V979.4 H144.9 V977.8 H146.4 V977.3 H147.9 V971.8 H149.4 V972.7 H150.9 V973.4 H152.4 V971.3 H153.9 V970.0 H155.4 V972.2 H156.9 V970.5 H158.4 V971.3 H159.9 V970.7 H161.4 V972.8 H162.9 V974.9 H164.4 V973.7 H165.9 V977.7 H167.4 V971.9 H168.9 V971.8 H170.4 V971.3 H171.9 V965.4 H173.4 V971.3 H174.9 V960.9 H176.4 V962.9 H177.9 V967.3 H179.4 V959.3 H180.9 V967.2 H182.4 V963.6 H183.9 V988.0 H185.4 V986.5 H186.9 V972.9 H188.4 V964.7 H189.9 V970.8 H191.4 V973.0 H192.9 V966.8 H194.4 V968.8 H195.9 V973.7 H197.4 V975.4 H198.9 V971.7 H200.4 V974.7 H201.9 V980.8 H203.4 V978.0 H204.9 V984.2 H206.4 V991.7 H207.9 V997.1 H209.4 V994.6 H210.9 V991.3 H212.4 V993.4 H213.9 V989.4 H215.4 V980.7 H216.9 V984.8 H218.4 V986.3 H219.9 V982.9 H221.4 V988.3 H222.9 V990.5 H224.4 V986.7 H225.9 V990.4 H227.4 V989.9 H228.9 V994.3 H230.4 V996.4 H231.9 V991.3 H233.4 V995.8 H234.9 V996.6 H236.4 V1000.5 H237.9 V1000.3 H239.4 V999.5 H240.9 V993.2 H242.4 V986.0 H243.9 V987.9 H245.4 V987.3 H246.9 V984.0 H248.4 V987.8 H249.9 V998.0 H251.4 V998.0 H252.9 V995.9 H254.4 V999.8 H255.9 V997.9 H257.4 V1001.4 H258.9 V999.5 H260.4 V994.9 H261.9 V999.5 H263.4 V998.0 H264.9 V998.2 H266.4 V996.6 H267.9 V997.9 H269.4 V1003.6 H270.9 V999.0 H272.4 V994.5 H273.9 V994.7 H275.4 V999.3 H276.9 V997.0 H278.4 V999.5 H279.9 V1004.5 H281.4 V1005.4 H282.9 V1014.5 H284.4 V1017.7 H285.9 V1017.0 H287.4 V1024.7 H288.9 V1011.2 H290.4 V1012.6 H291.9 V1011.0 H293.4 V1006.1 H294.9 V1010.2 H296.4 V1013.3 H297.9 V1020.5 H299.4 V1027.3 H300.9 V1028.4 H302.4 V1016.4 H303.9 V1013.5 H305.4 V1011.6 H306.9 V1016.9 H308.4 V1001.8 H309.9 V1002.8 H311.4 V1001.5 H312.9 V1002.5 H314.4 V1002.3 H315.9 V994.0 H317.4 V990.0 H318.9 V989.3 H320.4 V978.5 H321.9 V983.3 H323.4 V978.7 H324.9 V978.5 H326.4 V984.4 H327.9 V980.2 H329.4 V991.2 H330.9 V987.5 H332.4 V994.5 H333.9 V991.9 H335.4 V1001.1 H336.9 V997.2 H338.4 V1002.3 H339.9 V1002.0 H341.4 V1003.7 H342.9 V1009.3 H344.4 V1007.6 H345.9 V1005.4 H347.4 V1003.6 H348.9 V1000.5 H350.4 V988.3 H351.9 V988.7 H353.4 V988.3 H354.9 V995.4 H356.4 V996.2 H357.9 V993.0 H359.4 V1000.1 H360.9 V999.9 H362.4 V1000.8 H363.9 V1002.2 H365.4 V1005.8 H366.9 V1007.5 H368.4 V1008.1 H369.9 V1011.0 H371.4 V1011.5 H372.9 V1009.1 H374.4 V1017.7 H375.9 V1006.8 H377.4 V1008.8 H378.9 V1009.1 H380.4 V1008.8 H381.9 V1004.9 H383.4 V1008.4 H384.9 V1004.5 H386.4 V1005.5 H387.9 V1004.9 H389.4 V1007.0 H390.9 V1006.4 H392.4 V1001.8 H393.9 V1002.3 H395.4 V1002.9 H396.9 V1000.5 H398.4 V1002.2 H399.9 V1005.7 H401.4 V1011.9 H402.9 V1007.4 H404.4 V1011.8 H405.9 V1013.6 H407.4 V1010.7 H408.9 V1010.7 H410.4 V1012.4 H411.9 V1010.5 H413.4 V1009.8 H414.9 V1012.9 H416.4 V1014.1 H417.9 V1010.2 H419.4 V1005.7 H420.9 V1007.3 H422.4 V1001.9 H423.9 V999.3 H425.4 V1005.0 H426.9 V1007.5 H428.4 V1004.4 H429.9 V1011.9 H431.4 V1014.1 H432.9 V1012.9 H434.4 V1013.9 H435.9 V1016.4 H437.4 V1012.8 H438.9 V1015.5 H440.4 V1016.3 H441.9 V1024.1 H443.4 V1015.2 H444.9 V1018.2 H446.4 V1013.0 H447.9 V1017.1 H449.4 V1021.5 H450.9 V1023.3 H452.4 V1014.7 H453.9 V1021.6 H455.4 V1025.0 H456.9 V1011.0 H458.4 V1009.4 H459.9 V1007.3 H461.4 V1000.4 H462.9 V990.9 H464.4 V992.1 H465.9 V991.3 H467.4 V989.6 H468.9 V994.1 H470.4 V994.1 H471.9 V989.0 H473.4 V993.5 H474.9 V989.5 H476.4 V992.3 H477.9 V991.6 H479.4 V991.3 H480.9 V988.6 H482.4 V986.3 H483.9 V992.2 H485.4 V996.1 H486.9 V997.5 H488.4 V996.5 H489.9 V998.6 H491.4 V1000.4 H492.9 V998.7 H494.4 V995.9 H495.9 V998.0 H497.4 V995.8 H498.9 V990.1 H500.4 V992.4 H501.9 V990.5 H503.4 V990.4 H504.9 V989.1 H506.4 V986.4 H507.9 V982.9 H509.4 V985.1 H510.9 V988.3 H512.4 V990.7 H513.9 V995.6 H515.4 V1000.3 H516.9 V1001.6 H518.4 V1004.5 H519.9 V998.5 H521.4 V1004.2 H522.9 V997.8 H524.4 V996.1 H525.9 V987.9 H527.4 V987.6 H528.9 V993.6 H530.4 V991.1 H531.9 V998.0 H533.4 V995.0 H534.9 V982.9 H536.4 V984.9 H537.9 V969.3 H539.4 V968.6 H540.9 V979.1 H542.4 V976.7 H543.9 V985.2 H545.4 V984.9 H546.9 V982.9 H548.4 V973.3 H549.9 V972.1 H551.4 V971.6 H552.9 V976.4 H554.4 V966.6 H555.9 V962.4 H557.4 V975.5 H558.9 V979.3 H560.4 V974.7 H561.9 V976.8 H563.4 V976.0 H564.9 V969.6 H566.4 V965.9 H567.9 V963.5 H569.4 V964.5 H570.9 V964.4 H572.4 V966.5 H573.9 V964.8 H575.4 V966.7 H576.9 V964.0 H578.4 V966.6 H579.9 V966.5 H581.4 V967.1 H582.9 V965.4 H584.4 V963.7 H585.9 V962.6 H587.4 V963.2 H588.9 V961.3 H590.4 V961.5 H591.9 V964.6 H593.4 V959.3 H594.9 V963.1 H596.4 V959.5 H597.9 V962.3 H599.4 V957.2 H600.9 V959.4 H602.4 V962.8 H603.9 V981.3 H605.4 V975.1 H606.9 V977.0 H608.4 V980.0 H609.9 V972.9 H611.4 V978.3 H612.9 V978.2 H614.4 V976.2 H615.9 V978.1 H617.4 V978.6 H618.9 V976.9 H620.4 V970.2 H621.9 V968.2 H623.4 V969.6 H624.9 V963.6 H626.4 V959.3 H627.9 V959.5 H629.4 V964.8 H630.9 V955.5 H632.4 V954.1 H633.9 V961.9 H635.4 V962.2 H636.9 V970.6 H638.4 V966.7 H639.9 V967.0 H641.4 V957.6 H642.9 V955.8 H644.4 V958.8 H645.9 V959.1 H647.4 V954.0 H648.9 V953.1 H650.4 V950.9 H651.9 V947.2 H653.4 V942.2 H654.9 V940.9 H656.4 V942.6 H657.9 V943.7 H659.4 V946.4 H660.9 V949.3 H662.4 V948.1 H663.9 V942.4 H665.4 V942.5 H666.9 V935.0 H668.4 V938.5 H669.9 V928.5 H671.4 V931.5 H672.9 V928.4 H674.4 V923.1 H675.9 V933.7 H677.4 V932.3 H678.9 V933.9 H680.4 V935.2 H681.9 V940.1 H683.4 V937.0 H684.9 V944.9 H686.4 V939.6 H687.9 V945.3 H689.4 V945.7 H690.9 V946.5 H692.4 V948.9 H693.9 V949.4 H695.4 V944.5 H696.9 V939.7 H698.4 V947.0 H699.9 V941.7 H701.4 V934.0 H702.9 V925.6 H704.4 V926.3 H705.9 V918.7 H707.4 V923.1 H708.9 V925.7 H710.4 V923.0 H711.9 V923.2 H713.4 V920.8 H714.9 V922.2 H716.4 V920.6 H717.9 V922.1 H719.4 V920.2 H720.9 V917.3 H722.4 V917.0 H723.9 V917.9 H725.4 V919.0 H726.9 V915.7 H728.4 V916.4 H729.9 V914.9 H731.4 V913.3 H732.9 V912.3 H734.4 V912.6 H735.9 V913.7 H737.4 V911.7 H738.9 V912.6 H740.4 V907.5 H741.9 V912.0 H743.4 V926.3 H744.9 V928.8 H746.4 V933.1 H747.9 V933.4 H749.4 V932.6 H750.9 V931.1 H752.4 V924.7 H753.9 V925.3 H755.4 V919.9 H756.9 V925.2 H758.4 V919.9 H759.9 V918.7 H761.4 V918.1 H762.9 V912.8 H764.4 V884.9 H765.9 V886.8 H767.4 V891.2 H768.9 V887.4 H770.4 V896.0 H771.9 V891.5 H773.4 V901.8 H774.9 V896.6 H776.4 V901.7 H777.9 V903.7 H779.4 V909.3 H780.9 V911.8 H782.4 V912.7 H783.9 V906.4 H785.4 V900.4 H786.9 V899.8 H788.4 V890.5 H789.9 V887.2 H791.4 V887.2 H792.9 V891.0 H794.4 V890.7 H795.9 V887.6 H797.4 V886.0 H798.9 V887.6 H800.4 V885.4 H801.9 V886.4 H803.4 V887.7 H804.9 V885.6 H806.4 V892.5 H807.9 V893.6 H809.4 V894.5 H810.9 V897.1 H812.4 V894.3 H813.9 V899.3 H815.4 V897.6 H816.9 V880.5 H818.4 V878.4 H819.9 V877.7 H821.4 V865.3 H822.9 V872.5 H824.4 V869.4 H825.9 V859.7 H827.4 V852.5 H828.9 V857.8 H830.4 V860.0 H831.9 V856.8 H833.4 V854.9 H834.9 V853.7 H836.4 V855.2 H837.9 V851.2 H839.4 V850.7 H840.9 V851.1 H842.4 V851.6 H843.9 V848.1 H845.4 V851.5 H846.9 V850.5 H848.4 V858.7 H849.9 V858.2 H851.4 V860.3 H852.9 V864.3 H854.4 V865.4 H855.9 V863.2 H857.4 V857.2 H858.9 V860.6 H860.4 V856.1 H861.9 V859.3 H863.4 V860.3 H864.9 V867.4 H866.4 V864.7 H867.9 V868.3 H869.4 V866.7 H870.9 V848.7 H872.4 V835.9 H873.9 V829.6 H875.4 V834.8 H876.9 V835.9 H878.4 V838.6 H879.9 V838.6 H881.4 V836.8 H882.9 V842.1 H884.4 V841.2 H885.9 V844.3 H887.4 V846.6 H888.9 V841.1 H890.4 V838.5 H891.9 V838.2 H893.4 V832.8 H894.9 V828.7 H896.4 V831.7 H897.9 V829.7 H899.4 V838.7 H900.9 V828.8 H902.4 V827.8 H903.9 V824.9 H905.4 V833.1 H906.9 V829.8 H908.4 V842.1 H909.9 V838.4 H911.4 V828.9 H912.9 V834.0 H914.4 V823.5 H915.9 V829.1 H917.4 V818.5 H918.9 V821.6 H920.4 V816.3 H921.9 V817.6 H923.4 V818.9 H924.9 V815.1 H926.4 V818.9 H927.9 V814.7 H929.4 V814.2 H930.9 V817.1 H932.4 V817.4 H933.9 V809.4 H935.4 V816.5 H936.9 V814.6 H938.4 V815.7 H939.9 V814.5 H941.4 V817.6 H942.9 V822.3 H944.4 V817.6 H945.9 V820.6 H947.4 V812.7 H948.9 V811.7 H950.4 V812.2 H951.9 V812.0 H953.4 V812.9 H954.9 V816.2 H956.4 V824.1 H957.9 V822.1 H959.4 V826.7 H960.9 V825.4 H962.4 V826.9 H963.9 V826.5 H965.4 V824.2 H966.9 V824.0 H968.4 V826.1 H969.9 V828.0 H971.4 V828.4 H972.9 V824.1 H974.4 V824.1 H975.9 V820.1 H977.4 V815.2 H978.9 V812.1 H980.4 V817.6 H981.9 V817.7 H983.4 V815.7 H984.9 V817.1 H986.4 V817.4 H987.9 V817.6 H989.4 V818.4 H990.9 V823.2 H992.4 V821.9 H993.9 V818.0 H995.4 V815.1 H996.9 V817.9 H998.4 V816.9 H999.9 V817.9 H1001.4 V817.0 H1002.9 V821.8 H1004.4 V819.1 H1005.9 V822.3 H1007.4 V825.1 H1008.9 V821.8 H1010.4 V823.9 H1011.9 V819.9 H1013.4 V820.7 H1014.9 V821.8 H1016.4 V822.9 H1017.9 V816.5 H1019.4 V815.6 H1020.9 V814.9 H1022.4 V813.7 H1023.9 V811.6 H1025.4 V812.2 H1026.9 V810.1 H1028.4 V811.9 H1029.9 V812.2 H1031.4 V816.9 H1032.9 V811.9 H1034.4 V820.0 H1035.9 V824.8 H1037.4 V825.0 H1038.9 V821.9 H1040.4 V823.4 H1041.9 V819.4 H1043.4 V826.9 H1044.9 V822.2 H1046.4 V818.2 H1047.9 V819.3 H1049.4 V810.8 H1050.9 V801.1 H1052.4 V808.0 H1053.9 V802.1 H1055.4 V797.4 H1056.9 V798.1 H1058.4 V797.6 H1059.9 V805.4 H1061.4 V804.0 H1062.9 V807.1 H1064.4 V802.3 H1065.9 V805.3 H1067.4 V805.5 H1068.9 V803.4 H1070.4 V801.9 H1071.9 V804.2 H1073.4 V804.0 H1074.9 V805.2 H1076.4 V804.2 H1077.9 V799.3 H1079.4 V800.9 H1080.9 V800.6 H1082.4 V799.7 H1083.9 V800.6 H1085.4 V796.5 H1086.9 V799.9 H1088.4 V792.4 H1089.9 V794.4 H1091.4 V795.3 H1092.9 V797.7 H1094.4 V806.1 H1095.9 V809.0 H1097.4 V809.4 H1098.9 V800.2 H1100.4 V796.4 H1101.9 V789.8 H1103.4 V797.1 H1104.9 V794.7 H1106.4 V788.3 H1107.9 V785.9 H1109.4 V790.7 H1110.9 V795.9 H1112.4 V798.5 H1113.9 V797.4 H1115.4 V800.8 H1116.9 V805.5 H1118.4 V796.1 H1119.9 V786.6 H1121.4 V784.1 H1122.9 V778.7 H1124.4 V777.0 H1125.9 V780.8 H1127.4 V786.2 H1128.9 V779.2 H1130.4 V784.5 H1131.9 V779.6 H1133.4 V797.2 H1134.9 V801.9 H1136.4 V800.3 H1137.9 V805.6 H1139.4 V799.7 H1140.9 V793.6 H1142.4 V779.0 H1143.9 V773.6 H1145.4 V768.9 H1146.9 V774.8 H1148.4 V770.7 H1149.9 V769.4 H1151.4 V773.7 H1152.9 V765.6 H1154.4 V765.7 H1155.9 V770.5 H1157.4 V770.2 H1158.9 V785.8 H1160.4 V786.1 H1161.9 V790.9 H1163.4 V804.7 H1164.9 V809.5 H1166.4 V798.9 H1167.9 V801.3 H1169.4 V800.5 H1170.9 V798.9 H1172.4 V804.0 H1173.9 V812.0 H1175.4 V823.9 H1176.9 V814.5 H1178.4 V801.3 H1179.9 V801.1 H1181.4 V806.5 H1182.9 V804.9 H1184.4 V812.0 H1185.9 V807.4 H1187.4 V810.0 H1188.9 V812.3 H1190.4 V801.0 H1191.9 V799.5 H1193.4 V823.6 H1194.9 V814.9 H1196.4 V810.8 H1197.9 V809.9 H1199.4 V812.0 H1200.9 V804.9 H1202.4 V806.2 H1203.9 V808.9 H1205.4 V800.8 H1206.9 V803.6 H1208.4 V817.7 H1209.9 V822.3 H1211.4 V829.3 H1212.9 V819.6 H1214.4 V804.4 H1215.9 V802.2 H1217.4 V802.8 H1218.9 V807.1 H1220.4 V802.1 H1221.9 V803.4 H1223.4 V810.0 H1224.9 V807.4 H1226.4 V812.0 H1227.9 V807.2 H1229.4 V818.8 H1230.9 V816.0 H1232.4 V821.7 H1233.9 V821.8 H1235.4 V818.8 H1236.9 V822.9 H1238.4 V822.0 H1239.9 V818.9 H1241.4 V813.2 H1242.9 V820.2 H1244.4 V822.2 H1245.9 V822.2 H1247.4 V819.6 H1248.9 V837.5 H1250.4 V834.8 H1251.9 V841.1 H1253.4 V850.0 H1254.9 V857.2 H1256.4 V856.6 H1257.9 V824.0 H1259.4 V825.3 H1260.9 V823.1 H1262.4 V831.0 H1263.9 V833.3 H1265.4 V840.0 H1266.9 V837.3 H1268.4 V845.3 H1269.9 V839.7 H1271.4 V850.1 H1272.9 V858.1 H1274.4 V862.2 H1275.9 V858.5 H1277.4 V864.5 H1278.9 V871.0 H1280.4 V882.4 H1281.9 V877.9 H1283.4 V871.3 H1284.9 V867.2 H1286.4 V867.0 H1287.9 V865.8 H1289.4 V854.0 H1290.9 V855.7 H1292.4 V859.3 H1293.9 V851.0 H1295.4 V846.4 H1296.9 V824.7 H1298.4 V812.0 H1299.9 V803.5 H1301.4 V801.7 H1302.9 V800.8 H1304.4 V792.2 H1305.9 V792.8 H1307.4 V788.1 H1308.9 V793.4 H1310.4 V795.4 H1311.9 V801.4 H1313.4 V801.7 H1314.9 V800.5 H1316.4 V800.5 H1317.9 V811.6 H1319.4 V822.5 H1320.9 V818.8 H1322.4 V828.0 H1323.9 V825.4 H1325.4 V832.2 H1326.9 V845.0 H1328.4 V846.1 H1329.9 V848.3 H1331.4 V844.5 H1332.9 V842.2 H1334.4 V843.9 H1335.9 V844.1 H1337.4 V843.9 H1338.9 V849.6 H1340.4 V854.7 H1341.9 V860.8 H1343.4 V862.4 H1344.9 V867.7 H1346.4 V867.0 H1347.9 V868.9 H1349.4 V857.9 H1350.9 V847.5 H1352.4 V848.3 H1353.9 V851.9 H1355.4 V861.3 H1356.9 V868.0 H1358.4 V865.2 H1359.9 V864.5 H1361.4 V872.3 H1362.9 V872.1 H1364.4 V869.2 H1365.9 V872.9 H1367.4 V874.8 H1368.9 V873.1 H1370.4 V875.9 H1371.9 V875.4 H1373.4 V874.5 H1374.9 V876.4 H1376.4 V876.6 H1377.9 V872.2 H1379.4 V876.3 H1380.9 V870.8 H1382.4 V872.4 H1383.9 V869.7 H1385.4 V877.4 H1386.9 V874.9 H1388.4 V888.4 H1389.9 V890.9 H1391.4 V891.4 H1392.9 V889.5 H1394.4 V893.7 H1395.9 V892.2 H1397.4 V902.3 H1398.9 V902.9 H1400.4 V901.8 H1401.9 V905.0 H1403.4 V907.5 H1404.9 V894.4 H1406.4 V887.1 H1407.9 V891.3 H1409.4 V885.4 H1410.9 V873.9 H1412.4 V882.5 H1413.9 V886.1 H1415.4 V883.1 H1416.9 V892.1 H1418.4 V885.0 H1419.9 V875.8 H1421.4 V880.6 H1422.9 V866.8 H1424.4 V869.7 H1425.9 V871.6 H1427.4 V871.7 H1428.9 V877.5 H1430.4 V879.9 H1431.9 V892.9 H1433.4 V897.2 H1434.9 V892.5 H1436.4 V896.3 H1437.9 V888.8 H1439.4 V883.6 H1440.9 V887.3 H1442.4 V883.1 H1443.9 V894.5 H1445.4 V885.2 H1446.9 V893.1 H1448.4 V893.7 H1449.9 V901.1 H1451.4 V920.2 H1452.9 V930.6 H1454.4 V926.2 H1455.9 V932.8 H1457.4 V929.8 H1458.9 V923.3 H1460.4 V947.6 H1461.9 V953.2 H1463.4 V957.5 H1464.9 V951.0 H1466.4 V944.7 H1467.9 V944.8 H1469.4 V939.2 H1470.9 V938.6 H1472.4 V928.5 H1473.9 V910.3 H1475.4 V917.8 H1476.9 V924.9 H1478.4 V926.7 H1479.9 V925.4 H1481.4 V937.4 H1482.9 V935.7 H1484.4 V941.7 H1485.9 V943.6 H1487.4 V952.4 H1488.9 V946.0 H1490.4 V942.3 H1491.9 V940.7 H1493.4 V932.5 H1494.9 V937.4 H1496.4 V939.8 H1497.9 V938.6 H1499.4 V943.1 H1500.9 V942.1 H1502.4 V941.7 H1503.9 V943.2 H1505.4 V941.2 H1506.9 V939.4 H1508.4 V939.3 H1509.9 V939.0 H1511.4 V941.8 H1512.9 V937.5 H1514.4 V939.1 H1515.9 V939.0 H1517.4 V939.0 H1518.9 V946.2 H1520.4 V946.9 H1521.9 V950.8 H1523.4 V953.9 H1524.9 V953.5 H1526.4 V952.3 H1527.9 V959.3 H1529.4 V956.3 H1530.9 V964.5 H1532.4 V962.9 H1533.9 V962.9 H1535.4 V967.3 H1536.9 V963.5 H1538.4 V958.2 H1539.9 V957.0 H1541.4 V956.2 H1542.9 V953.5 H1544.4 V956.6 H1545.9 V961.4 H1547.4 V955.6 H1548.9 V963.6 H1550.4 V963.4 H1551.9 V963.8 H1553.4 V966.5 H1554.9 V962.3 H1556.4 V956.4 H1557.9 V958.1 H1559.4 V959.9 H1560.9 V951.7 H1562.4 V954.6 H1563.9 V951.5 H1565.4 V949.6 H1566.9 V946.2 H1568.4 V952.5 H1569.9 V960.5 H1571.4 V954.9 H1572.9 V952.2 H1574.4 V945.1 H1575.9 V938.9 H1577.4 V931.0 H1578.9 V929.1 H1580.4 V930.9 H1581.9 V915.0 H1583.4 V921.8 H1584.9 V916.2 H1586.4 V927.5 H1587.9 V918.5 H1589.4 V925.7 H1590.9 V921.3 H1592.4 V925.3 H1593.9 V930.6 H1595.4 V925.6 H1596.9 V927.3 H1598.4 V924.5 H1599.9 V920.2 H1601.4 V928.5 H1602.9 V928.9 H1604.4 V933.1 H1605.9 V929.4 H1607.4 V934.8 H1608.9 V933.4 H1610.4 V938.4 H1611.9 V933.9 H1613.4 V931.3 H1614.9 V922.6 H1616.4 V915.0 H1617.9 V925.9 H1619.4 V924.1 H1620.9 V932.7 H1622.4 V926.8 H1623.9 V930.0 H1625.4 V925.5 H1626.9 V917.9 H1628.4 V908.5 H1629.9 V919.8 H1631.4 V919.0 H1632.9 V920.7 H1634.4 V925.3 H1635.9 V922.2 H1637.4 V928.6 H1638.9 V930.9 H1640.4 V936.6 H1641.9 V934.7 H1643.4 V940.0 H1644.9 V947.5 H1646.4 V942.9 H1647.9 V939.0 H1649.4 V939.3 H1650.9 V936.8 H1652.4 V947.9 H1653.9 V950.1 H1655.4 V950.4 H1656.9 V943.0 H1658.4 V937.9 H1659.9 V944.9 H1661.4 V935.1 H1662.9 V929.6 H1664.4 V933.7 H1665.9 V926.3 H1667.4 V929.9 H1668.9 V922.4 H1670.4 V925.5 H1671.9 V926.2 H1673.4 V926.6 H1674.9 V928.6 H1676.4 V929.6 H1677.9 V926.1 H1679.4 V924.8 H1680.9 V920.8 H1682.4 V918.7 H1683.9 V921.3 H1685.4 V914.5 H1686.9 V913.7 H1688.4 V916.9 H1689.9 V913.8 H1691.4 V917.5 H1692.9 V915.6 H1694.4 V917.9 H1695.9 V925.3 H1697.4 V926.0 H1698.9 V923.5 H1700.4 V932.3 H1701.9 V925.8 H1703.4 V934.5 H1704.9 V937.5 H1706.4 V933.2 H1707.9 V947.6 H1709.4 V951.9 H1710.9 V952.7 H1712.4 V959.3 H1713.9 V958.4 H1715.4 V953.2 H1716.9 V975.1 H1718.4 V965.6 H1719.9 V975.9 H1721.4 V989.5 H1722.9 V993.0 H1724.4 V1017.2 H1725.9 V1041.3 H1727.4 V1035.5 H1728.9 V1026.5 H1730.4 V1024.0 H1731.9 V1012.6 H1733.4 V1000.3 H1734.9 V1003.7 H1736.4 V1007.1 H1737.9 V991.5 H1739.4 V997.8 H1740.9 V984.2 H1742.4 V988.1 H1743.9 V990.0 H1745.4 V997.9 H1746.9 V1006.5 H1748.4 V1005.5 H1749.9 V1001.8 H1751.4 V1006.1 H1752.9 V999.6 H1754.4 V997.7 H1755.9 V1001.2 H1757.4 V1002.7 H1758.9 V1013.9 H1760.4 V1016.5 H1761.9 V1009.6 H1763.4 V1003.5 H1764.9 V1004.4 H1766.4 V1000.6 H1767.9 V992.5 H1769.4 V988.2 H1770.9 V987.2 H1772.4 V974.5 H1773.9 V982.8 H1775.4 V982.2 H1776.9 V984.8 H1778.4 V990.3 H1779.9 V988.3 H1781.4 V979.9 H1782.9 V979.6 H1784.4 V979.0 H1785.9 V967.0 H1787.4 V971.7 H1788.9 V981.9 H1790.4 V995.6 H1791.9 V1002.4 H1793.4 V1013.4 H1794.9 V1008.7 H1796.4 V1001.3 H1797.9 V998.9 H1799.4 V989.5 H1800.9 V994.3 H1802.4 V982.3 H1803.9 V976.0 H1805.4 V979.0 H1806.9 V981.4 H1808.4 V975.4 H1809.9 V974.5 H1811.4 V976.8 H1812.9 V975.0 H1814.4 V984.6 H1815.9 V985.5 H1817.4 V980.3 H1818.9 V985.0 H1820.4 V986.8 H1821.9 V988.3 H1823.4 V990.5 H1824.9 V992.0 H1826.4 V996.1 H1827.9 V996.5 H1829.4 V996.7 H1830.9 V1001.0 H1832.4 V1000.1 H1833.9 V1001.0 H1835.4 V996.7 H1836.9 V1001.0 H1838.4 V998.4 H1839.9 V991.6 H1841.4 V990.9 H1842.9 V992.7 H1844.4 V989.0 H1845.9 V989.5 H1847.4 V984.8 H1848.9 V987.9 H1850.4 V982.7 H1851.9 V984.6 H1853.4 V983.0 H1854.9 V980.7 H1856.4 V981.1 H1857.9 V985.2 H1859.4 V984.1 H1860.9 V981.9 H1862.4 V983.8 H1863.9 V985.7 H1865.4 V987.5 H1866.9 V993.6 H1868.4 V995.4 H1869.9 V994.4 H1871.4 V993.8 H1872.9 V991.3 H1874.4 V996.8 H1875.9 V991.5 H1877.4 V992.1 H1878.9 V989.2 H1880.4 V992.9 H1881.9 V976.8 H1883.4 V984.5 H1884.9 V970.8 H1886.4 V968.7 H1887.9 V975.8 H1889.4 V956.0 H1890.9 V958.0 H1892.4 V961.4 H1893.9 V946.5 H1895.4 V948.7 H1896.9 V942.3 H1898.4 V945.7 H1899.9" fill="none" stroke="#ff0000" stroke-width="3.3" stroke-linejoin="miter"/></g>
</svg>
<svg class="a" style="left:12.80px;top:82.10px;overflow:visible" width="17.60" height="14.90" viewBox="0 0 16 16" preserveAspectRatio="none"><path d="M1 2.5 H5.5 V13.5 H1 Z M1 8 H5.5 M7 3.5 H15 M11 0.8 V6 M6.5 6.3 H15.5 M7 9.3 H15.5 M12.8 7 V14.5 Q12.8 15.8 11 15.8 M8.5 11.3 L10 13.3" fill="none" stroke="#d8d8d8" stroke-width="1.30" vector-effect="non-scaling-stroke" stroke-linecap="butt" stroke-linejoin="miter"/></svg>
<svg class="a" style="left:32.00px;top:82.10px;overflow:visible" width="17.60" height="14.90" viewBox="0 0 16 16" preserveAspectRatio="none"><path d="M5 0.5 V2.2 M0.8 2.5 H9.5 M4 3.5 L1.2 7.5 H8 M7.5 4.5 L1.5 11 M8.5 7.5 L2.5 15.5 M6 11.5 L9.5 15 M11.2 2.5 V12 M14.5 0.8 V14.5 Q14.5 15.8 12.8 15.8" fill="none" stroke="#d8d8d8" stroke-width="1.30" vector-effect="non-scaling-stroke" stroke-linecap="butt" stroke-linejoin="miter"/></svg>
<svg class="a" style="left:118.40px;top:82.10px;overflow:visible" width="17.60" height="14.90" viewBox="0 0 16 16" preserveAspectRatio="none"><path d="M3.5 0.8 L1 9.5 Q4 12 6.5 15.5 M6 4.5 Q5.5 11 0.8 15.5 M0.5 5.5 H7.5 M10.5 0.8 L8.5 6.2 H15.2 M13 3.5 L15 6.5 M9 8.5 H14.5 V15.2 H9 Z" fill="none" stroke="#d8d8d8" stroke-width="1.30" vector-effect="non-scaling-stroke" stroke-linecap="butt" stroke-linejoin="miter"/></svg>
<svg class="a" style="left:137.60px;top:82.10px;overflow:visible" width="17.60" height="14.90" viewBox="0 0 16 16" preserveAspectRatio="none"><path d="M4 0.8 L0.8 7 M2.8 4.5 V15.8 M6 3 H15.5 M10.5 0.8 V5 M7.5 5 H13.5 V13 H7.5 Z M7.5 7.7 H13.5 M7.5 10.4 H13.5 M5.5 5.5 V15.2 H15.8" fill="none" stroke="#d8d8d8" stroke-width="1.30" vector-effect="non-scaling-stroke" stroke-linecap="butt" stroke-linejoin="miter"/></svg>
<svg class="a" style="left:224.00px;top:82.10px;overflow:visible" width="17.60" height="14.90" viewBox="0 0 16 16" preserveAspectRatio="none"><path d="M8 0.5 V2.2 M0.8 2.5 H15.2 M4.5 4.3 H11.5 V7.2 H4.5 Z M2 9 V15.8 M2 9 H14 V14.5 Q14 15.8 12.5 15.8 M5.5 10.8 H10.5 V13.8 H5.5 Z" fill="none" stroke="#d8d8d8" stroke-width="1.30" vector-effect="non-scaling-stroke" stroke-linecap="butt" stroke-linejoin="miter"/></svg>
<svg class="a" style="left:243.20px;top:82.10px;overflow:visible" width="17.60" height="14.90" viewBox="0 0 16 16" preserveAspectRatio="none"><path d="M4 0.8 L0.8 7 M2.8 4.5 V15.8 M6 3 H15.5 M10.5 0.8 V5 M7.5 5 H13.5 V13 H7.5 Z M7.5 7.7 H13.5 M7.5 10.4 H13.5 M5.5 5.5 V15.2 H15.8" fill="none" stroke="#d8d8d8" stroke-width="1.30" vector-effect="non-scaling-stroke" stroke-linecap="butt" stroke-linejoin="miter"/></svg>
<svg class="a" style="left:329.60px;top:82.10px;overflow:visible" width="17.60" height="14.90" viewBox="0 0 16 16" preserveAspectRatio="none"><path d="M8 0.5 V2.5 M1.5 5.5 V2.8 H14.5 V5.5 M7 4.8 Q6 8.5 3.8 11.5 Q9 12.5 13.5 15.8 M11 7.8 Q10 13.5 1.5 15.8 M0.8 8.2 H15.2" fill="none" stroke="#d8d8d8" stroke-width="1.30" vector-effect="non-scaling-stroke" stroke-linecap="butt" stroke-linejoin="miter"/></svg>
<svg class="a" style="left:348.80px;top:82.10px;overflow:visible" width="17.60" height="14.90" viewBox="0 0 16 16" preserveAspectRatio="none"><path d="M4 0.8 L0.8 7 M2.8 4.5 V15.8 M6 3 H15.5 M10.5 0.8 V5 M7.5 5 H13.5 V13 H7.5 Z M7.5 7.7 H13.5 M7.5 10.4 H13.5 M5.5 5.5 V15.2 H15.8" fill="none" stroke="#d8d8d8" stroke-width="1.30" vector-effect="non-scaling-stroke" stroke-linecap="butt" stroke-linejoin="miter"/></svg>
<svg class="a" style="left:435.20px;top:82.10px;overflow:visible" width="17.60" height="14.90" viewBox="0 0 16 16" preserveAspectRatio="none"><path d="M4.5 0.8 L2 4.8 L5 6.5 L1.5 10.5 H7.5 M5.8 4.8 L3 8.5 M4.5 10.5 V15.8 M2.5 12 L1 15 M6.5 12 L7.5 14.5 M10.5 0.8 L8 5 M9.5 3 H14 Q12 7.5 8 9.5 M10.5 5.2 Q12.5 8 15.5 9.2 M10.5 10.5 L13 11.8 M9.8 13 L13.5 15.3" fill="none" stroke="#d8d8d8" stroke-width="1.30" vector-effect="non-scaling-stroke" stroke-linecap="butt" stroke-linejoin="miter"/></svg>
<svg class="a" style="left:454.40px;top:82.10px;overflow:visible" width="17.60" height="14.90" viewBox="0 0 16 16" preserveAspectRatio="none"><path d="M4 0.8 L0.8 7 M2.8 4.5 V15.8 M6 3 H15.5 M10.5 0.8 V5 M7.5 5 H13.5 V13 H7.5 Z M7.5 7.7 H13.5 M7.5 10.4 H13.5 M5.5 5.5 V15.2 H15.8" fill="none" stroke="#d8d8d8" stroke-width="1.30" vector-effect="non-scaling-stroke" stroke-linecap="butt" stroke-linejoin="miter"/></svg>
<div class="tx" style="left:50.40px;top:81.25px;font-family:'Liberation Mono';font-size:22.00px;line-height:22.00px;color:#d8d8d8;transform:scaleX(0.7273)">:06:00</div>
<div class="tx" style="left:156.00px;top:81.25px;font-family:'Liberation Mono';font-size:22.00px;line-height:22.00px;color:#d8d8d8;transform:scaleX(0.7273)">:9,613</div>
<div class="tx" style="left:261.60px;top:81.25px;font-family:'Liberation Mono';font-size:22.00px;line-height:22.00px;color:#d8d8d8;transform:scaleX(0.7273)">:9,613</div>
<div class="tx" style="left:367.20px;top:81.25px;font-family:'Liberation Mono';font-size:22.00px;line-height:22.00px;color:#d8d8d8;transform:scaleX(0.7273)">:9,613</div>
<div class="tx" style="left:472.80px;top:81.25px;font-family:'Liberation Mono';font-size:22.00px;line-height:22.00px;color:#d8d8d8;transform:scaleX(0.7273)">:9,613</div>
<div class="mt" style="left:35.3px;top:370.9px;font-size:21.0px;line-height:21.0px;color:#dcdcdc;transform:scaleX(0.7540);"><i style="width:12.60px">0</i><i style="width:12.60px">5</i></div>
<div class="mt" style="left:71.1px;top:370.9px;font-size:21.0px;line-height:21.0px;color:#f0f0f0;transform:scaleX(0.7540);font-weight:bold;"><i style="width:12.60px">0</i><i style="width:12.60px">6</i></div>
<div class="mt" style="left:121.5px;top:370.9px;font-size:21.0px;line-height:21.0px;color:#dcdcdc;transform:scaleX(0.7540);"><i style="width:12.60px">0</i><i style="width:12.60px">9</i></div>
<div class="mt" style="left:216.3px;top:370.9px;font-size:21.0px;line-height:21.0px;color:#dcdcdc;transform:scaleX(0.7540);"><i style="width:12.60px">1</i><i style="width:12.60px">0</i></div>
<div class="mt" style="left:311.8px;top:370.9px;font-size:21.0px;line-height:21.0px;color:#dcdcdc;transform:scaleX(0.7540);"><i style="width:12.60px">1</i><i style="width:12.60px">1</i></div>
<div class="mt" style="left:401.8px;top:370.9px;font-size:21.0px;line-height:21.0px;color:#dcdcdc;transform:scaleX(0.7540);"><i style="width:12.60px">1</i><i style="width:12.60px">2</i></div>
<div class="mt" style="left:495.3px;top:370.9px;font-size:21.0px;line-height:21.0px;color:#dcdcdc;transform:scaleX(0.7540);"><i style="width:12.60px">1</i><i style="width:12.60px">3</i></div>
<div class="mt" style="left:585.8px;top:370.9px;font-size:21.0px;line-height:21.0px;color:#dcdcdc;transform:scaleX(0.7540);"><i style="width:12.60px">1</i><i style="width:12.60px">4</i></div>
<div class="mt" style="left:656.2px;top:370.9px;font-size:21.0px;line-height:21.0px;color:#dcdcdc;transform:scaleX(0.7540);"><i style="width:12.60px">1</i><i style="width:12.60px">5</i></div>
<div class="mt" style="left:699.8px;top:370.9px;font-size:21.0px;line-height:21.0px;color:#dcdcdc;transform:scaleX(0.7540);"><i style="width:12.60px">1</i><i style="width:12.60px">6</i></div>
<div class="mt" style="left:748.4px;top:370.9px;font-size:21.0px;line-height:21.0px;color:#dcdcdc;transform:scaleX(0.7540);"><i style="width:12.60px">1</i><i style="width:12.60px">7</i></div>
<div class="mt" style="left:842.4px;top:370.9px;font-size:21.0px;line-height:21.0px;color:#dcdcdc;transform:scaleX(0.7540);"><i style="width:12.60px">1</i><i style="width:12.60px">8</i></div>
<div class="mt" style="left:934.7px;top:370.9px;font-size:21.0px;line-height:21.0px;color:#dcdcdc;transform:scaleX(0.7540);"><i style="width:12.60px">1</i><i style="width:12.60px">9</i></div>
<div class="mt" style="left:1023.2px;top:370.9px;font-size:21.0px;line-height:21.0px;color:#dcdcdc;transform:scaleX(0.7540);"><i style="width:12.60px">2</i><i style="width:12.60px">0</i></div>
<div class="mt" style="left:1110.8px;top:370.9px;font-size:21.0px;line-height:21.0px;color:#dcdcdc;transform:scaleX(0.7540);"><i style="width:12.60px">2</i><i style="width:12.60px">1</i></div>
<div class="mt" style="left:1203.8px;top:370.9px;font-size:21.0px;line-height:21.0px;color:#dcdcdc;transform:scaleX(0.7540);"><i style="width:12.60px">2</i><i style="width:12.60px">2</i></div>
<div class="mt" style="left:1296.4px;top:370.9px;font-size:21.0px;line-height:21.0px;color:#dcdcdc;transform:scaleX(0.7540);"><i style="width:12.60px">2</i><i style="width:12.60px">3</i></div>
<div class="mt" style="left:1391.8px;top:370.9px;font-size:21.0px;line-height:21.0px;color:#dcdcdc;transform:scaleX(0.7540);"><i style="width:12.60px">0</i><i style="width:12.60px">0</i></div>
<div class="mt" style="left:1483.8px;top:370.9px;font-size:21.0px;line-height:21.0px;color:#dcdcdc;transform:scaleX(0.7540);"><i style="width:12.60px">0</i><i style="width:12.60px">1</i></div>
<div class="mt" style="left:1572.8px;top:370.9px;font-size:21.0px;line-height:21.0px;color:#dcdcdc;transform:scaleX(0.7540);"><i style="width:12.60px">0</i><i style="width:12.60px">2</i></div>
<div class="mt" style="left:1653.8px;top:370.9px;font-size:21.0px;line-height:21.0px;color:#dcdcdc;transform:scaleX(0.7540);"><i style="width:12.60px">0</i><i style="width:12.60px">3</i></div>
<div class="mt" style="left:1746.8px;top:370.9px;font-size:21.0px;line-height:21.0px;color:#dcdcdc;transform:scaleX(0.7540);"><i style="width:12.60px">0</i><i style="width:12.60px">4</i></div>
<div class="mt" style="left:1838.8px;top:370.9px;font-size:21.0px;line-height:21.0px;color:#dcdcdc;transform:scaleX(0.7540);"><i style="width:12.60px">0</i><i style="width:12.60px">5</i></div>
<div class="mt" style="left:1874.6px;top:370.9px;font-size:21.0px;line-height:21.0px;color:#dcdcdc;transform:scaleX(0.7540);"><i style="width:12.60px">0</i><i style="width:12.60px">6</i></div>
<div class="mt" style="left:1393.0px;top:348.5px;font-size:20.0px;line-height:20.0px;color:#dcdcdc;transform:scaleX(0.7300);"><i style="width:12.00px">0</i><i style="width:12.00px">2</i></div>
<div class="mt" style="left:1908.4px;top:124.5px;font-size:23.0px;line-height:23.0px;color:#dcdcdc;transform:scaleX(0.6810);"><i style="width:13.80px">9</i><i style="width:13.80px">,</i><i style="width:13.80px">6</i><i style="width:13.80px">5</i><i style="width:13.80px">0</i></div>
<div class="mt" style="left:1908.4px;top:193.0px;font-size:23.0px;line-height:23.0px;color:#dcdcdc;transform:scaleX(0.6810);"><i style="width:13.80px">9</i><i style="width:13.80px">,</i><i style="width:13.80px">6</i><i style="width:13.80px">2</i><i style="width:13.80px">5</i></div>
<div class="mt" style="left:1908.4px;top:261.5px;font-size:23.0px;line-height:23.0px;color:#dcdcdc;transform:scaleX(0.6810);"><i style="width:13.80px">9</i><i style="width:13.80px">,</i><i style="width:13.80px">6</i><i style="width:13.80px">0</i><i style="width:13.80px">0</i></div>
<div class="mt" style="left:1908.4px;top:330.5px;font-size:23.0px;line-height:23.0px;color:#dcdcdc;transform:scaleX(0.6810);"><i style="width:13.80px">9</i><i style="width:13.80px">,</i><i style="width:13.80px">5</i><i style="width:13.80px">7</i><i style="width:13.80px">5</i></div>
<div class="a" style="left:1906px;top:231.0px;width:94px;height:34.5px;background:#d4d4d4;border-top:1px solid #bdbdbd;border-bottom:1.5px solid #b0b0b0"></div>
<div class="mt" style="left:1927.0px;top:237.8px;font-size:23.0px;line-height:23.0px;color:#000;transform:scaleX(0.7200);font-weight:bold;"><i style="width:13.80px">9</i><i style="width:13.80px">,</i><i style="width:13.80px">6</i><i style="width:13.80px">1</i><i style="width:13.80px">3</i></div>
<svg class="a" style="left:12.80px;top:410.20px;overflow:visible" width="17.60" height="14.90" viewBox="0 0 16 16" preserveAspectRatio="none"><path d="M1 2.5 H5.5 V13.5 H1 Z M1 8 H5.5 M7 3.5 H15 M11 0.8 V6 M6.5 6.3 H15.5 M7 9.3 H15.5 M12.8 7 V14.5 Q12.8 15.8 11 15.8 M8.5 11.3 L10 13.3" fill="none" stroke="#d8d8d8" stroke-width="1.30" vector-effect="non-scaling-stroke" stroke-linecap="butt" stroke-linejoin="miter"/></svg>
<svg class="a" style="left:32.00px;top:410.20px;overflow:visible" width="17.60" height="14.90" viewBox="0 0 16 16" preserveAspectRatio="none"><path d="M5 0.5 V2.2 M0.8 2.5 H9.5 M4 3.5 L1.2 7.5 H8 M7.5 4.5 L1.5 11 M8.5 7.5 L2.5 15.5 M6 11.5 L9.5 15 M11.2 2.5 V12 M14.5 0.8 V14.5 Q14.5 15.8 12.8 15.8" fill="none" stroke="#d8d8d8" stroke-width="1.30" vector-effect="non-scaling-stroke" stroke-linecap="butt" stroke-linejoin="miter"/></svg>
<svg class="a" style="left:118.40px;top:410.20px;overflow:visible" width="17.60" height="14.90" viewBox="0 0 16 16" preserveAspectRatio="none"><path d="M3.5 0.8 L1 9.5 Q4 12 6.5 15.5 M6 4.5 Q5.5 11 0.8 15.5 M0.5 5.5 H7.5 M10.5 0.8 L8.5 6.2 H15.2 M13 3.5 L15 6.5 M9 8.5 H14.5 V15.2 H9 Z" fill="none" stroke="#d8d8d8" stroke-width="1.30" vector-effect="non-scaling-stroke" stroke-linecap="butt" stroke-linejoin="miter"/></svg>
<svg class="a" style="left:137.60px;top:410.20px;overflow:visible" width="17.60" height="14.90" viewBox="0 0 16 16" preserveAspectRatio="none"><path d="M4 0.8 L0.8 7 M2.8 4.5 V15.8 M6 3 H15.5 M10.5 0.8 V5 M7.5 5 H13.5 V13 H7.5 Z M7.5 7.7 H13.5 M7.5 10.4 H13.5 M5.5 5.5 V15.2 H15.8" fill="none" stroke="#d8d8d8" stroke-width="1.30" vector-effect="non-scaling-stroke" stroke-linecap="butt" stroke-linejoin="miter"/></svg>
<svg class="a" style="left:204.80px;top:410.20px;overflow:visible" width="17.60" height="14.90" viewBox="0 0 16 16" preserveAspectRatio="none"><path d="M8 0.5 V2.2 M0.8 2.5 H15.2 M4.5 4.3 H11.5 V7.2 H4.5 Z M2 9 V15.8 M2 9 H14 V14.5 Q14 15.8 12.5 15.8 M5.5 10.8 H10.5 V13.8 H5.5 Z" fill="none" stroke="#d8d8d8" stroke-width="1.30" vector-effect="non-scaling-stroke" stroke-linecap="butt" stroke-linejoin="miter"/></svg>
<svg class="a" style="left:224.00px;top:410.20px;overflow:visible" width="17.60" height="14.90" viewBox="0 0 16 16" preserveAspectRatio="none"><path d="M4 0.8 L0.8 7 M2.8 4.5 V15.8 M6 3 H15.5 M10.5 0.8 V5 M7.5 5 H13.5 V13 H7.5 Z M7.5 7.7 H13.5 M7.5 10.4 H13.5 M5.5 5.5 V15.2 H15.8" fill="none" stroke="#d8d8d8" stroke-width="1.30" vector-effect="non-scaling-stroke" stroke-linecap="butt" stroke-linejoin="miter"/></svg>
<svg class="a" style="left:291.20px;top:410.20px;overflow:visible" width="17.60" height="14.90" viewBox="0 0 16 16" preserveAspectRatio="none"><path d="M8 0.5 V2.5 M1.5 5.5 V2.8 H14.5 V5.5 M7 4.8 Q6 8.5 3.8 11.5 Q9 12.5 13.5 15.8 M11 7.8 Q10 13.5 1.5 15.8 M0.8 8.2 H15.2" fill="none" stroke="#d8d8d8" stroke-width="1.30" vector-effect="non-scaling-stroke" stroke-linecap="butt" stroke-linejoin="miter"/></svg>
<svg class="a" style="left:310.40px;top:410.20px;overflow:visible" width="17.60" height="14.90" viewBox="0 0 16 16" preserveAspectRatio="none"><path d="M4 0.8 L0.8 7 M2.8 4.5 V15.8 M6 3 H15.5 M10.5 0.8 V5 M7.5 5 H13.5 V13 H7.5 Z M7.5 7.7 H13.5 M7.5 10.4 H13.5 M5.5 5.5 V15.2 H15.8" fill="none" stroke="#d8d8d8" stroke-width="1.30" vector-effect="non-scaling-stroke" stroke-linecap="butt" stroke-linejoin="miter"/></svg>
<svg class="a" style="left:377.60px;top:410.20px;overflow:visible" width="17.60" height="14.90" viewBox="0 0 16 16" preserveAspectRatio="none"><path d="M4.5 0.8 L2 4.8 L5 6.5 L1.5 10.5 H7.5 M5.8 4.8 L3 8.5 M4.5 10.5 V15.8 M2.5 12 L1 15 M6.5 12 L7.5 14.5 M10.5 0.8 L8 5 M9.5 3 H14 Q12 7.5 8 9.5 M10.5 5.2 Q12.5 8 15.5 9.2 M10.5 10.5 L13 11.8 M9.8 13 L13.5 15.3" fill="none" stroke="#d8d8d8" stroke-width="1.30" vector-effect="non-scaling-stroke" stroke-linecap="butt" stroke-linejoin="miter"/></svg>
<svg class="a" style="left:396.80px;top:410.20px;overflow:visible" width="17.60" height="14.90" viewBox="0 0 16 16" preserveAspectRatio="none"><path d="M4 0.8 L0.8 7 M2.8 4.5 V15.8 M6 3 H15.5 M10.5 0.8 V5 M7.5 5 H13.5 V13 H7.5 Z M7.5 7.7 H13.5 M7.5 10.4 H13.5 M5.5 5.5 V15.2 H15.8" fill="none" stroke="#d8d8d8" stroke-width="1.30" vector-effect="non-scaling-stroke" stroke-linecap="butt" stroke-linejoin="miter"/></svg>
<div class="tx" style="left:50.40px;top:409.35px;font-family:'Liberation Mono';font-size:22.00px;line-height:22.00px;color:#d8d8d8;transform:scaleX(0.7273)">:06:00</div>
<div class="tx" style="left:156.00px;top:409.35px;font-family:'Liberation Mono';font-size:22.00px;line-height:22.00px;color:#d8d8d8;transform:scaleX(0.7273)">:---</div>
<div class="tx" style="left:242.40px;top:409.35px;font-family:'Liberation Mono';font-size:22.00px;line-height:22.00px;color:#d8d8d8;transform:scaleX(0.7273)">:---</div>
<div class="tx" style="left:328.80px;top:409.35px;font-family:'Liberation Mono';font-size:22.00px;line-height:22.00px;color:#d8d8d8;transform:scaleX(0.7273)">:---</div>
<div class="tx" style="left:415.20px;top:409.35px;font-family:'Liberation Mono';font-size:22.00px;line-height:22.00px;color:#d8d8d8;transform:scaleX(0.7273)">:---</div>
<div class="mt" style="left:35.3px;top:719.7px;font-size:21.0px;line-height:21.0px;color:#dcdcdc;transform:scaleX(0.7540);"><i style="width:12.60px">0</i><i style="width:12.60px">5</i></div>
<div class="mt" style="left:71.1px;top:719.7px;font-size:21.0px;line-height:21.0px;color:#f0f0f0;transform:scaleX(0.7540);font-weight:bold;"><i style="width:12.60px">0</i><i style="width:12.60px">6</i></div>
<div class="mt" style="left:121.5px;top:719.7px;font-size:21.0px;line-height:21.0px;color:#dcdcdc;transform:scaleX(0.7540);"><i style="width:12.60px">0</i><i style="width:12.60px">9</i></div>
<div class="mt" style="left:216.3px;top:719.7px;font-size:21.0px;line-height:21.0px;color:#dcdcdc;transform:scaleX(0.7540);"><i style="width:12.60px">1</i><i style="width:12.60px">0</i></div>
<div class="mt" style="left:311.8px;top:719.7px;font-size:21.0px;line-height:21.0px;color:#dcdcdc;transform:scaleX(0.7540);"><i style="width:12.60px">1</i><i style="width:12.60px">1</i></div>
<div class="mt" style="left:401.8px;top:719.7px;font-size:21.0px;line-height:21.0px;color:#dcdcdc;transform:scaleX(0.7540);"><i style="width:12.60px">1</i><i style="width:12.60px">2</i></div>
<div class="mt" style="left:495.3px;top:719.7px;font-size:21.0px;line-height:21.0px;color:#dcdcdc;transform:scaleX(0.7540);"><i style="width:12.60px">1</i><i style="width:12.60px">3</i></div>
<div class="mt" style="left:585.8px;top:719.7px;font-size:21.0px;line-height:21.0px;color:#dcdcdc;transform:scaleX(0.7540);"><i style="width:12.60px">1</i><i style="width:12.60px">4</i></div>
<div class="mt" style="left:656.2px;top:719.7px;font-size:21.0px;line-height:21.0px;color:#dcdcdc;transform:scaleX(0.7540);"><i style="width:12.60px">1</i><i style="width:12.60px">5</i></div>
<div class="mt" style="left:699.8px;top:719.7px;font-size:21.0px;line-height:21.0px;color:#dcdcdc;transform:scaleX(0.7540);"><i style="width:12.60px">1</i><i style="width:12.60px">6</i></div>
<div class="mt" style="left:748.4px;top:719.7px;font-size:21.0px;line-height:21.0px;color:#dcdcdc;transform:scaleX(0.7540);"><i style="width:12.60px">1</i><i style="width:12.60px">7</i></div>
<div class="mt" style="left:842.4px;top:719.7px;font-size:21.0px;line-height:21.0px;color:#dcdcdc;transform:scaleX(0.7540);"><i style="width:12.60px">1</i><i style="width:12.60px">8</i></div>
<div class="mt" style="left:934.7px;top:719.7px;font-size:21.0px;line-height:21.0px;color:#dcdcdc;transform:scaleX(0.7540);"><i style="width:12.60px">1</i><i style="width:12.60px">9</i></div>
<div class="mt" style="left:1023.2px;top:719.7px;font-size:21.0px;line-height:21.0px;color:#dcdcdc;transform:scaleX(0.7540);"><i style="width:12.60px">2</i><i style="width:12.60px">0</i></div>
<div class="mt" style="left:1110.8px;top:719.7px;font-size:21.0px;line-height:21.0px;color:#dcdcdc;transform:scaleX(0.7540);"><i style="width:12.60px">2</i><i style="width:12.60px">1</i></div>
<div class="mt" style="left:1203.8px;top:719.7px;font-size:21.0px;line-height:21.0px;color:#dcdcdc;transform:scaleX(0.7540);"><i style="width:12.60px">2</i><i style="width:12.60px">2</i></div>
<div class="mt" style="left:1296.4px;top:719.7px;font-size:21.0px;line-height:21.0px;color:#dcdcdc;transform:scaleX(0.7540);"><i style="width:12.60px">2</i><i style="width:12.60px">3</i></div>
<div class="mt" style="left:1391.8px;top:719.7px;font-size:21.0px;line-height:21.0px;color:#dcdcdc;transform:scaleX(0.7540);"><i style="width:12.60px">0</i><i style="width:12.60px">0</i></div>
<div class="mt" style="left:1483.8px;top:719.7px;font-size:21.0px;line-height:21.0px;color:#dcdcdc;transform:scaleX(0.7540);"><i style="width:12.60px">0</i><i style="width:12.60px">1</i></div>
<div class="mt" style="left:1572.8px;top:719.7px;font-size:21.0px;line-height:21.0px;color:#dcdcdc;transform:scaleX(0.7540);"><i style="width:12.60px">0</i><i style="width:12.60px">2</i></div>
<div class="mt" style="left:1653.8px;top:719.7px;font-size:21.0px;line-height:21.0px;color:#dcdcdc;transform:scaleX(0.7540);"><i style="width:12.60px">0</i><i style="width:12.60px">3</i></div>
<div class="mt" style="left:1746.8px;top:719.7px;font-size:21.0px;line-height:21.0px;color:#dcdcdc;transform:scaleX(0.7540);"><i style="width:12.60px">0</i><i style="width:12.60px">4</i></div>
<div class="mt" style="left:1838.8px;top:719.7px;font-size:21.0px;line-height:21.0px;color:#dcdcdc;transform:scaleX(0.7540);"><i style="width:12.60px">0</i><i style="width:12.60px">5</i></div>
<div class="mt" style="left:1874.6px;top:719.7px;font-size:21.0px;line-height:21.0px;color:#dcdcdc;transform:scaleX(0.7540);"><i style="width:12.60px">0</i><i style="width:12.60px">6</i></div>
<div class="mt" style="left:1393.0px;top:697.3px;font-size:20.0px;line-height:20.0px;color:#dcdcdc;transform:scaleX(0.7300);"><i style="width:12.00px">0</i><i style="width:12.00px">2</i></div>
<div class="mt" style="left:1908.4px;top:418.5px;font-size:23.0px;line-height:23.0px;color:#dcdcdc;transform:scaleX(0.6810);"><i style="width:13.80px">4</i><i style="width:13.80px">,</i><i style="width:13.80px">4</i><i style="width:13.80px">7</i><i style="width:13.80px">5</i></div>
<div class="mt" style="left:1908.4px;top:507.5px;font-size:23.0px;line-height:23.0px;color:#dcdcdc;transform:scaleX(0.6810);"><i style="width:13.80px">4</i><i style="width:13.80px">,</i><i style="width:13.80px">4</i><i style="width:13.80px">5</i><i style="width:13.80px">0</i></div>
<div class="mt" style="left:1908.4px;top:598.0px;font-size:23.0px;line-height:23.0px;color:#dcdcdc;transform:scaleX(0.6810);"><i style="width:13.80px">4</i><i style="width:13.80px">,</i><i style="width:13.80px">4</i><i style="width:13.80px">2</i><i style="width:13.80px">5</i></div>
<div class="mt" style="left:1908.4px;top:687.5px;font-size:23.0px;line-height:23.0px;color:#dcdcdc;transform:scaleX(0.6810);"><i style="width:13.80px">4</i><i style="width:13.80px">,</i><i style="width:13.80px">4</i><i style="width:13.80px">0</i><i style="width:13.80px">0</i></div>
<div class="a" style="left:1906px;top:588.5px;width:94px;height:34.0px;background:#d4d4d4;border-top:1px solid #bdbdbd;border-bottom:1.5px solid #b0b0b0"></div>
<div class="mt" style="left:1927.0px;top:595.0px;font-size:23.0px;line-height:23.0px;color:#000;transform:scaleX(0.7200);font-weight:bold;"><i style="width:13.80px">4</i><i style="width:13.80px">,</i><i style="width:13.80px">4</i><i style="width:13.80px">2</i><i style="width:13.80px">9</i></div>
<svg class="a" style="left:22.40px;top:759.30px;overflow:visible" width="17.60" height="14.90" viewBox="0 0 16 16" preserveAspectRatio="none"><path d="M8 0.8 L0.8 6.8 M8 0.8 L15.2 6.8 M4 6.5 H12 M2.5 9.8 H13.5 M8 6.5 V15 M4.5 11.2 L5.8 13.6 M11.5 11.2 L10.2 13.6 M1 15.1 H15" fill="none" stroke="#d8d8d8" stroke-width="1.30" vector-effect="non-scaling-stroke" stroke-linecap="butt" stroke-linejoin="miter"/></svg>
<svg class="a" style="left:156.80px;top:759.30px;overflow:visible" width="17.60" height="14.90" viewBox="0 0 16 16" preserveAspectRatio="none"><path d="M3.5 4.5 L12.5 13.5 M12.5 4.5 L3.5 13.5" fill="none" stroke="#d8d8d8" stroke-width="1.30" vector-effect="non-scaling-stroke" stroke-linecap="butt" stroke-linejoin="miter"/></svg>
<svg class="a" style="left:224.00px;top:759.30px;overflow:visible" width="17.60" height="14.90" viewBox="0 0 16 16" preserveAspectRatio="none"><path d="M3.5 8 H12.5" fill="none" stroke="#d8d8d8" stroke-width="1.30" vector-effect="non-scaling-stroke" stroke-linecap="butt" stroke-linejoin="miter"/></svg>
<svg class="a" style="left:252.80px;top:759.30px;overflow:visible" width="17.60" height="14.90" viewBox="0 0 16 16" preserveAspectRatio="none"><path d="M8.5 0.5 L7 3.2 M2.5 3.2 H13.5 V15.5 M2.5 3.2 V15.5 M2.5 9.2 H13.5 M2.5 15 H13.5" fill="none" stroke="#d8d8d8" stroke-width="1.30" vector-effect="non-scaling-stroke" stroke-linecap="butt" stroke-linejoin="miter"/></svg>
<svg class="a" style="left:272.00px;top:759.30px;overflow:visible" width="17.60" height="14.90" viewBox="0 0 16 16" preserveAspectRatio="none"><path d="M8 0.8 L0.8 6.8 M8 0.8 L15.2 6.8 M4 6.5 H12 M2.5 9.8 H13.5 M8 6.5 V15 M4.5 11.2 L5.8 13.6 M11.5 11.2 L10.2 13.6 M1 15.1 H15" fill="none" stroke="#d8d8d8" stroke-width="1.30" vector-effect="non-scaling-stroke" stroke-linecap="butt" stroke-linejoin="miter"/></svg>
<svg class="a" style="left:406.40px;top:759.30px;overflow:visible" width="17.60" height="14.90" viewBox="0 0 16 16" preserveAspectRatio="none"><path d="M3.5 4.5 L12.5 13.5 M12.5 4.5 L3.5 13.5" fill="none" stroke="#d8d8d8" stroke-width="1.30" vector-effect="non-scaling-stroke" stroke-linecap="butt" stroke-linejoin="miter"/></svg>
<svg class="a" style="left:483.20px;top:759.30px;overflow:visible" width="17.60" height="14.90" viewBox="0 0 16 16" preserveAspectRatio="none"><path d="M4.5 0.8 L2 4.8 L5 6.5 L1.5 10.5 H7.5 M5.8 4.8 L3 8.5 M4.5 10.5 V15.8 M2.5 12 L1 15 M6.5 12 L7.5 14.5 M10.5 0.8 L8 5 M9.5 3 H14 Q12 7.5 8 9.5 M10.5 5.2 Q12.5 8 15.5 9.2 M10.5 10.5 L13 11.8 M9.8 13 L13.5 15.3" fill="none" stroke="#d8d8d8" stroke-width="1.30" vector-effect="non-scaling-stroke" stroke-linecap="butt" stroke-linejoin="miter"/></svg>
<svg class="a" style="left:502.40px;top:759.30px;overflow:visible" width="17.60" height="14.90" viewBox="0 0 16 16" preserveAspectRatio="none"><path d="M4 0.8 L0.8 7 M2.8 4.5 V15.8 M6 3 H15.5 M10.5 0.8 V5 M7.5 5 H13.5 V13 H7.5 Z M7.5 7.7 H13.5 M7.5 10.4 H13.5 M5.5 5.5 V15.2 H15.8" fill="none" stroke="#d8d8d8" stroke-width="1.30" vector-effect="non-scaling-stroke" stroke-linecap="butt" stroke-linejoin="miter"/></svg>
<svg class="a" style="left:531.20px;top:759.30px;overflow:visible" width="17.60" height="14.90" viewBox="0 0 16 16" preserveAspectRatio="none"><path d="M1 2.5 H5.5 V13.5 H1 Z M1 8 H5.5 M7 3.5 H15 M11 0.8 V6 M6.5 6.3 H15.5 M7 9.3 H15.5 M12.8 7 V14.5 Q12.8 15.8 11 15.8 M8.5 11.3 L10 13.3" fill="none" stroke="#d8d8d8" stroke-width="1.30" vector-effect="non-scaling-stroke" stroke-linecap="butt" stroke-linejoin="miter"/></svg>
<svg class="a" style="left:550.40px;top:759.30px;overflow:visible" width="17.60" height="14.90" viewBox="0 0 16 16" preserveAspectRatio="none"><path d="M5 0.5 V2.2 M0.8 2.5 H9.5 M4 3.5 L1.2 7.5 H8 M7.5 4.5 L1.5 11 M8.5 7.5 L2.5 15.5 M6 11.5 L9.5 15 M11.2 2.5 V12 M14.5 0.8 V14.5 Q14.5 15.8 12.8 15.8" fill="none" stroke="#d8d8d8" stroke-width="1.30" vector-effect="non-scaling-stroke" stroke-linecap="butt" stroke-linejoin="miter"/></svg>
<div class="tx" style="left:12.00px;top:758.45px;font-family:'Liberation Mono';font-size:22.00px;line-height:22.00px;color:#d8d8d8;transform:scaleX(0.7273)">[</div>
<div class="tx" style="left:50.40px;top:758.45px;font-family:'Liberation Mono';font-size:22.00px;line-height:22.00px;color:#d8d8d8;transform:scaleX(0.7273)">24/10</div>
<div class="tx" style="left:108.00px;top:758.45px;font-family:'Liberation Mono';font-size:22.00px;line-height:22.00px;color:#d8d8d8;transform:scaleX(0.7273)">9,613</div>
<div class="tx" style="left:175.20px;top:758.45px;font-family:'Liberation Mono';font-size:22.00px;line-height:22.00px;color:#d8d8d8;transform:scaleX(0.7273)">1.00]</div>
<div class="tx" style="left:242.40px;top:758.45px;font-family:'Liberation Mono';font-size:22.00px;line-height:22.00px;color:#d8d8d8;transform:scaleX(0.7273)">[</div>
<div class="tx" style="left:300.00px;top:758.45px;font-family:'Liberation Mono';font-size:22.00px;line-height:22.00px;color:#d8d8d8;transform:scaleX(0.7273)">24/10</div>
<div class="tx" style="left:357.60px;top:758.45px;font-family:'Liberation Mono';font-size:22.00px;line-height:22.00px;color:#d8d8d8;transform:scaleX(0.7273)">4,429</div>
<div class="tx" style="left:424.80px;top:758.45px;font-family:'Liberation Mono';font-size:22.00px;line-height:22.00px;color:#d8d8d8;transform:scaleX(0.7273)">1.00]</div>
<div class="tx" style="left:568.80px;top:758.45px;font-family:'Liberation Mono';font-size:22.00px;line-height:22.00px;color:#d8d8d8;transform:scaleX(0.7273)">:06:00</div>
<div class="tx" style="left:636.00px;top:758.45px;font-family:'Liberation Mono';font-size:22.00px;line-height:22.00px;color:#d8d8d8;transform:scaleX(0.7273)">5,184</div>
<div class="mt" style="left:35.3px;top:1049.6px;font-size:21.0px;line-height:21.0px;color:#dcdcdc;transform:scaleX(0.7540);"><i style="width:12.60px">0</i><i style="width:12.60px">5</i></div>
<div class="mt" style="left:71.1px;top:1049.6px;font-size:21.0px;line-height:21.0px;color:#f0f0f0;transform:scaleX(0.7540);font-weight:bold;"><i style="width:12.60px">0</i><i style="width:12.60px">6</i></div>
<div class="mt" style="left:121.5px;top:1049.6px;font-size:21.0px;line-height:21.0px;color:#dcdcdc;transform:scaleX(0.7540);"><i style="width:12.60px">0</i><i style="width:12.60px">9</i></div>
<div class="mt" style="left:216.3px;top:1049.6px;font-size:21.0px;line-height:21.0px;color:#dcdcdc;transform:scaleX(0.7540);"><i style="width:12.60px">1</i><i style="width:12.60px">0</i></div>
<div class="mt" style="left:311.8px;top:1049.6px;font-size:21.0px;line-height:21.0px;color:#dcdcdc;transform:scaleX(0.7540);"><i style="width:12.60px">1</i><i style="width:12.60px">1</i></div>
<div class="mt" style="left:401.8px;top:1049.6px;font-size:21.0px;line-height:21.0px;color:#dcdcdc;transform:scaleX(0.7540);"><i style="width:12.60px">1</i><i style="width:12.60px">2</i></div>
<div class="mt" style="left:495.3px;top:1049.6px;font-size:21.0px;line-height:21.0px;color:#dcdcdc;transform:scaleX(0.7540);"><i style="width:12.60px">1</i><i style="width:12.60px">3</i></div>
<div class="mt" style="left:585.8px;top:1049.6px;font-size:21.0px;line-height:21.0px;color:#dcdcdc;transform:scaleX(0.7540);"><i style="width:12.60px">1</i><i style="width:12.60px">4</i></div>
<div class="mt" style="left:656.2px;top:1049.6px;font-size:21.0px;line-height:21.0px;color:#dcdcdc;transform:scaleX(0.7540);"><i style="width:12.60px">1</i><i style="width:12.60px">5</i></div>
<div class="mt" style="left:699.8px;top:1049.6px;font-size:21.0px;line-height:21.0px;color:#dcdcdc;transform:scaleX(0.7540);"><i style="width:12.60px">1</i><i style="width:12.60px">6</i></div>
<div class="mt" style="left:748.4px;top:1049.6px;font-size:21.0px;line-height:21.0px;color:#dcdcdc;transform:scaleX(0.7540);"><i style="width:12.60px">1</i><i style="width:12.60px">7</i></div>
<div class="mt" style="left:842.4px;top:1049.6px;font-size:21.0px;line-height:21.0px;color:#dcdcdc;transform:scaleX(0.7540);"><i style="width:12.60px">1</i><i style="width:12.60px">8</i></div>
<div class="mt" style="left:934.7px;top:1049.6px;font-size:21.0px;line-height:21.0px;color:#dcdcdc;transform:scaleX(0.7540);"><i style="width:12.60px">1</i><i style="width:12.60px">9</i></div>
<div class="mt" style="left:1023.2px;top:1049.6px;font-size:21.0px;line-height:21.0px;color:#dcdcdc;transform:scaleX(0.7540);"><i style="width:12.60px">2</i><i style="width:12.60px">0</i></div>
<div class="mt" style="left:1110.8px;top:1049.6px;font-size:21.0px;line-height:21.0px;color:#dcdcdc;transform:scaleX(0.7540);"><i style="width:12.60px">2</i><i style="width:12.60px">1</i></div>
<div class="mt" style="left:1203.8px;top:1049.6px;font-size:21.0px;line-height:21.0px;color:#dcdcdc;transform:scaleX(0.7540);"><i style="width:12.60px">2</i><i style="width:12.60px">2</i></div>
<div class="mt" style="left:1296.4px;top:1049.6px;font-size:21.0px;line-height:21.0px;color:#dcdcdc;transform:scaleX(0.7540);"><i style="width:12.60px">2</i><i style="width:12.60px">3</i></div>
<div class="mt" style="left:1391.8px;top:1049.6px;font-size:21.0px;line-height:21.0px;color:#dcdcdc;transform:scaleX(0.7540);"><i style="width:12.60px">0</i><i style="width:12.60px">0</i></div>
<div class="mt" style="left:1483.8px;top:1049.6px;font-size:21.0px;line-height:21.0px;color:#dcdcdc;transform:scaleX(0.7540);"><i style="width:12.60px">0</i><i style="width:12.60px">1</i></div>
<div class="mt" style="left:1572.8px;top:1049.6px;font-size:21.0px;line-height:21.0px;color:#dcdcdc;transform:scaleX(0.7540);"><i style="width:12.60px">0</i><i style="width:12.60px">2</i></div>
<div class="mt" style="left:1653.8px;top:1049.6px;font-size:21.0px;line-height:21.0px;color:#dcdcdc;transform:scaleX(0.7540);"><i style="width:12.60px">0</i><i style="width:12.60px">3</i></div>
<div class="mt" style="left:1746.8px;top:1049.6px;font-size:21.0px;line-height:21.0px;color:#dcdcdc;transform:scaleX(0.7540);"><i style="width:12.60px">0</i><i style="width:12.60px">4</i></div>
<div class="mt" style="left:1838.8px;top:1049.6px;font-size:21.0px;line-height:21.0px;color:#dcdcdc;transform:scaleX(0.7540);"><i style="width:12.60px">0</i><i style="width:12.60px">5</i></div>
<div class="mt" style="left:1874.6px;top:1049.6px;font-size:21.0px;line-height:21.0px;color:#dcdcdc;transform:scaleX(0.7540);"><i style="width:12.60px">0</i><i style="width:12.60px">6</i></div>
<div class="mt" style="left:1393.0px;top:1027.2px;font-size:20.0px;line-height:20.0px;color:#dcdcdc;transform:scaleX(0.7300);"><i style="width:12.00px">0</i><i style="width:12.00px">2</i></div>
<div class="mt" style="left:1908.4px;top:804.5px;font-size:23.0px;line-height:23.0px;color:#dcdcdc;transform:scaleX(0.6810);"><i style="width:13.80px">5</i><i style="width:13.80px">,</i><i style="width:13.80px">2</i><i style="width:13.80px">2</i><i style="width:13.80px">5</i></div>
<div class="mt" style="left:1908.4px;top:880.5px;font-size:23.0px;line-height:23.0px;color:#dcdcdc;transform:scaleX(0.6810);"><i style="width:13.80px">5</i><i style="width:13.80px">,</i><i style="width:13.80px">2</i><i style="width:13.80px">0</i><i style="width:13.80px">0</i></div>
<div class="mt" style="left:1908.4px;top:956.5px;font-size:23.0px;line-height:23.0px;color:#dcdcdc;transform:scaleX(0.6810);"><i style="width:13.80px">5</i><i style="width:13.80px">,</i><i style="width:13.80px">1</i><i style="width:13.80px">7</i><i style="width:13.80px">5</i></div>
<div class="mt" style="left:1908.4px;top:1032.0px;font-size:23.0px;line-height:23.0px;color:#dcdcdc;transform:scaleX(0.6810);"><i style="width:13.80px">5</i><i style="width:13.80px">,</i><i style="width:13.80px">1</i><i style="width:13.80px">5</i><i style="width:13.80px">0</i></div>
<div class="a" style="left:1906px;top:933.5px;width:94px;height:34.0px;background:#d4d4d4;border-top:1px solid #bdbdbd;border-bottom:1.5px solid #b0b0b0"></div>
<div class="mt" style="left:1927.0px;top:940.0px;font-size:23.0px;line-height:23.0px;color:#000;transform:scaleX(0.7200);font-weight:bold;"><i style="width:13.80px">5</i><i style="width:13.80px">,</i><i style="width:13.80px">1</i><i style="width:13.80px">8</i><i style="width:13.80px">4</i></div>
</body></html>
